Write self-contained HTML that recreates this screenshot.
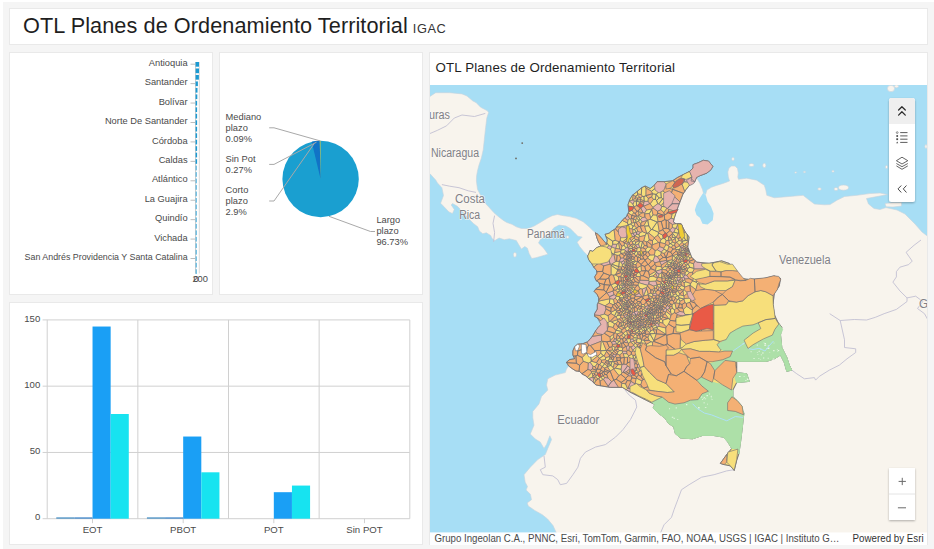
<!DOCTYPE html>
<html><head><meta charset="utf-8"><title>OTL Planes de Ordenamiento Territorial</title>
<style>
*{box-sizing:border-box;margin:0;padding:0}
html,body{width:934px;height:549px;overflow:hidden;background:#f5f5f5;font-family:"Liberation Sans",sans-serif;color:#323232}
body{position:relative}
.edge-l{position:absolute;left:0;top:0;width:3px;height:549px;background:#fff}
.edge-t{position:absolute;left:0;top:0;width:934px;height:2px;background:#fff}
.panel{position:absolute;background:#fff;border:1px solid #e9e9e9}
#hdr{left:9px;top:8px;width:919px;height:37px}
#hdr .t{position:absolute;left:13px;top:3.5px;font-size:21.7px;line-height:25px;color:#1f1f1f;white-space:nowrap;letter-spacing:0.07px}
#hdr .s{font-size:12.8px;color:#333;margin-left:5px;letter-spacing:0.55px}
#bar{left:9px;top:52px;width:204px;height:243px}
#pie{left:219px;top:52px;width:204px;height:243px}
#col{left:9px;top:301.5px;width:414px;height:243.5px}
#map{left:429px;top:52px;width:499px;height:493px}
#map .ttl{position:absolute;left:5.6px;top:7px;font-size:13.3px;line-height:16px;color:#1f1f1f;white-space:nowrap;letter-spacing:0.14px}
svg{position:absolute;left:-1px;top:-1px;overflow:hidden}
svg text{font-family:"Liberation Sans",sans-serif}
</style></head><body>
<div class="edge-t"></div><div class="edge-l"></div>
<div class="panel" id="hdr"><div class="t">OTL Planes de Ordenamiento Territorial<span class="s">IGAC</span></div></div>
<div class="panel" id="bar"><svg width="204" height="243" viewBox="9 52 204 243"><line x1="195.6" y1="62" x2="195.6" y2="273.5" stroke="#c9c9c9" stroke-width="1"/><line x1="199.3" y1="62" x2="199.3" y2="273.5" stroke="#d9d9d9" stroke-width="1"/><rect x="195.6" y="62.00" width="3.4" height="4.7" fill="#1b9ad2"/><rect x="195.6" y="68.48" width="3.4" height="4.7" fill="#1b9ad2"/><rect x="195.6" y="74.95" width="3.3" height="4.7" fill="#1b9ad2"/><rect x="195.6" y="81.43" width="2.3" height="4.7" fill="#1b9ad2"/><rect x="195.6" y="87.91" width="1.9" height="4.7" fill="#1b9ad2"/><rect x="195.6" y="94.39" width="1.7" height="4.7" fill="#1b9ad2"/><rect x="195.6" y="100.86" width="1.5" height="4.7" fill="#1b9ad2"/><rect x="195.6" y="107.34" width="1.5" height="4.7" fill="#1b9ad2"/><rect x="195.6" y="113.82" width="1.5" height="4.7" fill="#1b9ad2"/><rect x="195.6" y="120.29" width="1.5" height="4.7" fill="#1b9ad2"/><rect x="195.6" y="126.77" width="1.5" height="4.7" fill="#1b9ad2"/><rect x="195.6" y="133.25" width="1.5" height="4.7" fill="#1b9ad2"/><rect x="195.6" y="139.72" width="1.5" height="4.7" fill="#1b9ad2"/><rect x="195.6" y="146.20" width="1.5" height="4.7" fill="#1b9ad2"/><rect x="195.6" y="152.68" width="1.5" height="4.7" fill="#1b9ad2"/><rect x="195.6" y="159.16" width="1.5" height="4.7" fill="#1b9ad2"/><rect x="195.6" y="165.63" width="1.2" height="4.7" fill="#55b4de"/><rect x="195.6" y="172.11" width="1.2" height="4.7" fill="#55b4de"/><rect x="195.6" y="178.59" width="1.2" height="4.7" fill="#55b4de"/><rect x="195.6" y="185.06" width="1.2" height="4.7" fill="#55b4de"/><rect x="195.6" y="191.54" width="1.2" height="4.7" fill="#55b4de"/><rect x="195.6" y="198.02" width="1.2" height="4.7" fill="#55b4de"/><rect x="195.6" y="204.49" width="1.2" height="4.7" fill="#55b4de"/><rect x="195.6" y="210.97" width="1.2" height="4.7" fill="#55b4de"/><rect x="195.6" y="217.45" width="1.2" height="4.7" fill="#55b4de"/><rect x="195.6" y="223.93" width="1.2" height="4.7" fill="#55b4de"/><rect x="195.6" y="230.40" width="1.2" height="4.7" fill="#55b4de"/><rect x="195.6" y="236.88" width="1.2" height="4.7" fill="#55b4de"/><rect x="195.6" y="243.36" width="1.2" height="4.7" fill="#55b4de"/><rect x="195.6" y="249.83" width="1.2" height="4.7" fill="#55b4de"/><rect x="195.6" y="256.31" width="1.2" height="4.7" fill="#55b4de"/><rect x="195.6" y="262.79" width="1.2" height="4.7" fill="#55b4de"/><rect x="195.6" y="269.26" width="1.2" height="4.7" fill="#55b4de"/><line x1="190.5" y1="64.20" x2="195" y2="64.20" stroke="#bdbdbd" stroke-width="1"/><text x="187.6" y="65.90" font-size="9.3" text-anchor="end" fill="#4a4a4a">Antioquia</text><line x1="190.5" y1="83.63" x2="195" y2="83.63" stroke="#bdbdbd" stroke-width="1"/><text x="187.6" y="85.33" font-size="9.3" text-anchor="end" fill="#4a4a4a">Santander</text><line x1="190.5" y1="103.06" x2="195" y2="103.06" stroke="#bdbdbd" stroke-width="1"/><text x="187.6" y="104.76" font-size="9.3" text-anchor="end" fill="#4a4a4a">Bolívar</text><line x1="190.5" y1="122.49" x2="195" y2="122.49" stroke="#bdbdbd" stroke-width="1"/><text x="187.6" y="124.19" font-size="9.3" text-anchor="end" fill="#4a4a4a">Norte De Santander</text><line x1="190.5" y1="141.92" x2="195" y2="141.92" stroke="#bdbdbd" stroke-width="1"/><text x="187.6" y="143.62" font-size="9.3" text-anchor="end" fill="#4a4a4a">Córdoba</text><line x1="190.5" y1="161.36" x2="195" y2="161.36" stroke="#bdbdbd" stroke-width="1"/><text x="187.6" y="163.06" font-size="9.3" text-anchor="end" fill="#4a4a4a">Caldas</text><line x1="190.5" y1="180.79" x2="195" y2="180.79" stroke="#bdbdbd" stroke-width="1"/><text x="187.6" y="182.49" font-size="9.3" text-anchor="end" fill="#4a4a4a">Atlántico</text><line x1="190.5" y1="200.22" x2="195" y2="200.22" stroke="#bdbdbd" stroke-width="1"/><text x="187.6" y="201.92" font-size="9.3" text-anchor="end" fill="#4a4a4a">La Guajira</text><line x1="190.5" y1="219.65" x2="195" y2="219.65" stroke="#bdbdbd" stroke-width="1"/><text x="187.6" y="221.35" font-size="9.3" text-anchor="end" fill="#4a4a4a">Quindío</text><line x1="190.5" y1="239.08" x2="195" y2="239.08" stroke="#bdbdbd" stroke-width="1"/><text x="187.6" y="240.78" font-size="9.3" text-anchor="end" fill="#4a4a4a">Vichada</text><line x1="190.5" y1="258.51" x2="195" y2="258.51" stroke="#bdbdbd" stroke-width="1"/><text x="187.6" y="260.21" font-size="9.3" text-anchor="end" fill="#4a4a4a" textLength="163" lengthAdjust="spacingAndGlyphs">San Andrés Providencia Y Santa Catalina</text><text x="196" y="282" font-size="9.3" text-anchor="middle" fill="#4a4a4a">0</text><text x="200.2" y="282" font-size="9.3" text-anchor="middle" fill="#4a4a4a">200</text></svg></div>
<div class="panel" id="pie"><svg width="204" height="243" viewBox="219 52 204 243"><circle cx="320.6" cy="179" r="38.2" fill="#1a9fd0"/><path d="M320.6,179 L311.68,141.86 A38.2,38.2 0 0 1 319.73,140.81 Z" fill="#1173c6"/><path d="M320.6,179 L319.73,140.81 A38.2,38.2 0 0 1 320.60,140.80 Z" fill="#b9c25a"/><polyline points="269.2,127.8 274,127.8 320.2,140.9" stroke="#a9a9a9" stroke-width="1" fill="none"/><polyline points="269.2,164.4 274,164.4 316.5,142.2" stroke="#a9a9a9" stroke-width="1" fill="none"/><polyline points="269.2,201 274,201 314.2,143.6" stroke="#a9a9a9" stroke-width="1" fill="none"/><polyline points="329,216.3 370.5,231.5 375,231.5" stroke="#a9a9a9" stroke-width="1" fill="none"/><text x="225.6" y="120.0" font-size="9.3" fill="#4a4a4a">Mediano</text><text x="225.6" y="131.0" font-size="9.3" fill="#4a4a4a">plazo</text><text x="225.6" y="142.0" font-size="9.3" fill="#4a4a4a">0.09%</text><text x="225.6" y="161.8" font-size="9.3" fill="#4a4a4a">Sin Pot</text><text x="225.6" y="172.8" font-size="9.3" fill="#4a4a4a">0.27%</text><text x="225.6" y="193.0" font-size="9.3" fill="#4a4a4a">Corto</text><text x="225.6" y="204.0" font-size="9.3" fill="#4a4a4a">plazo</text><text x="225.6" y="215.0" font-size="9.3" fill="#4a4a4a">2.9%</text><text x="376.4" y="222.8" font-size="9.3" fill="#4a4a4a">Largo</text><text x="376.4" y="233.8" font-size="9.3" fill="#4a4a4a">plazo</text><text x="376.4" y="244.8" font-size="9.3" fill="#4a4a4a">96.73%</text></svg></div>
<div class="panel" id="col"><svg width="414" height="243" viewBox="9 301.5 414 243"><line x1="42.6" y1="518.20" x2="409.8" y2="518.20" stroke="#d0d0d0" stroke-width="1"/><text x="40.3" y="519.80" font-size="9.6" text-anchor="end" fill="#4a4a4a">0</text><line x1="42.6" y1="451.94" x2="409.8" y2="451.94" stroke="#d0d0d0" stroke-width="1"/><text x="40.3" y="453.54" font-size="9.6" text-anchor="end" fill="#4a4a4a">50</text><line x1="42.6" y1="385.67" x2="409.8" y2="385.67" stroke="#d0d0d0" stroke-width="1"/><text x="40.3" y="387.27" font-size="9.6" text-anchor="end" fill="#4a4a4a">100</text><line x1="42.6" y1="319.41" x2="409.8" y2="319.41" stroke="#d0d0d0" stroke-width="1"/><text x="40.3" y="321.01" font-size="9.6" text-anchor="end" fill="#4a4a4a">150</text><line x1="47.20" y1="319.41" x2="47.20" y2="518.2" stroke="#d0d0d0" stroke-width="1"/><line x1="137.85" y1="319.41" x2="137.85" y2="518.2" stroke="#d0d0d0" stroke-width="1"/><line x1="228.50" y1="319.41" x2="228.50" y2="518.2" stroke="#d0d0d0" stroke-width="1"/><line x1="319.15" y1="319.41" x2="319.15" y2="518.2" stroke="#d0d0d0" stroke-width="1"/><line x1="409.80" y1="319.41" x2="409.80" y2="518.2" stroke="#d0d0d0" stroke-width="1"/><line x1="92.53" y1="518.2" x2="92.53" y2="522.7" stroke="#d0d0d0" stroke-width="1"/><text x="92.53" y="532.20" font-size="9.6" text-anchor="middle" fill="#4a4a4a">EOT</text><rect x="56.27" y="516.87" width="18.13" height="1.33" fill="#4a90c4"/><rect x="74.40" y="516.87" width="18.13" height="1.33" fill="#3f86c9"/><rect x="92.53" y="326.03" width="18.13" height="192.17" fill="#1a9ff5"/><rect x="110.66" y="413.50" width="18.13" height="104.70" fill="#17e3f0"/><line x1="183.18" y1="518.2" x2="183.18" y2="522.7" stroke="#d0d0d0" stroke-width="1"/><text x="183.18" y="532.20" font-size="9.6" text-anchor="middle" fill="#4a4a4a">PBOT</text><rect x="146.92" y="516.87" width="18.13" height="1.33" fill="#4a90c4"/><rect x="165.05" y="516.87" width="18.13" height="1.33" fill="#3f86c9"/><rect x="183.18" y="436.03" width="18.13" height="82.17" fill="#1a9ff5"/><rect x="201.31" y="471.81" width="18.13" height="46.39" fill="#17e3f0"/><line x1="273.82" y1="518.2" x2="273.82" y2="522.7" stroke="#d0d0d0" stroke-width="1"/><text x="273.82" y="532.20" font-size="9.6" text-anchor="middle" fill="#4a4a4a">POT</text><rect x="273.82" y="491.69" width="18.13" height="26.51" fill="#1a9ff5"/><rect x="291.95" y="485.07" width="18.13" height="33.13" fill="#17e3f0"/><line x1="364.48" y1="518.2" x2="364.48" y2="522.7" stroke="#d0d0d0" stroke-width="1"/><text x="364.48" y="532.20" font-size="9.6" text-anchor="middle" fill="#4a4a4a">Sin POT</text></svg></div>
<div class="panel" id="map"><div class="ttl">OTL Planes de Ordenamiento Territorial</div><svg width="497" height="460" viewBox="430 85 497 460" style="left:0px;top:32px"><rect x="430" y="85" width="497" height="460" fill="#a7def5"/><polygon points="428.0,97.0 430.0,96.4 435.7,92.7 449.7,92.7 462.0,93.9 467.0,96.0 472.9,101.0 476.0,102.5 480.6,107.2 487.4,110.8 488.6,112.5 486.8,118.0 485.3,130.4 484.0,142.6 483.2,150.0 481.3,158.3 479.0,165.0 477.5,170.7 476.6,176.0 476.4,181.0 477.5,189.3 480.0,194.0 482.2,198.6 485.0,203.0 488.8,207.0 494.0,212.8 498.3,216.5 503.4,220.4 506.8,222.5 512.0,224.3 516.3,226.8 521.4,228.5 528.2,228.5 534.2,226.0 540.2,222.5 547.1,218.3 552.2,215.7 557.4,214.5 563.4,215.7 569.4,216.6 576.2,218.3 583.1,221.7 589.1,226.8 593.3,231.0 595.5,232.8 602.0,246.0 597.0,249.0 593.0,252.0 590.0,251.0 588.2,256.0 583.9,251.7 579.6,246.5 577.1,242.2 579.6,239.7 582.2,237.1 577.9,236.3 574.5,232.8 570.2,228.5 565.9,226.0 559.1,225.1 553.9,227.7 551.4,231.1 545.4,236.3 540.2,239.7 538.5,243.1 543.7,248.2 547.9,254.2 541.9,256.0 536.0,257.7 531.7,258.5 529.1,253.4 527.4,248.2 524.8,246.5 521.4,249.1 518.8,244.8 516.3,240.5 509.4,238.8 504.3,239.7 499.1,238.0 494.8,240.5 492.3,238.8 490.6,235.4 486.3,232.8 482.8,233.7 479.4,231.1 477.7,226.8 473.4,223.4 468.0,218.0 462.0,211.0 457.4,206.3 452.5,203.5 451.2,205.0 454.3,209.4 452.5,213.5 449.0,212.0 445.0,207.8 440.6,203.2 442.2,199.0 443.5,195.5 441.9,187.7 437.5,183.0 435.7,180.0 430.0,173.8 428.0,172.0" fill="#f8f4ed" stroke="#c6d4de" stroke-width="0.6" stroke-linejoin="round"/><polygon points="595.5,232.8 598.2,234.6 601.9,238.7 605.0,242.3 606.4,244.6 607.3,240.0 605.0,234.3 609.1,233.2 611.9,230.9 615.5,228.7 617.3,225.9 620.1,223.2 622.8,219.6 626.3,216.8 628.8,211.7 628.0,204.8 629.7,199.7 632.2,195.4 636.5,192.0 641.7,187.7 645.1,186.0 650.2,188.5 654.5,185.1 657.1,181.7 663.9,181.7 672.5,180.8 677.6,177.4 682.8,174.8 689.6,171.4 693.1,168.0 693.1,164.6 698.2,162.8 703.3,160.3 708.5,161.1 712.8,166.3 711.0,169.7 706.8,173.1 699.9,175.7 696.5,177.4 696.5,177.4 699.9,183.4 702.5,189.4 703.3,192.8 705.6,194.5 706.9,190.0 711.4,187.3 716.5,185.4 722.9,183.5 729.6,181.0 728.3,177.0 727.8,172.0 729.0,168.0 731.5,166.0 735.0,166.0 737.5,168.5 738.3,173.0 737.8,177.0 738.5,179.3 746.7,178.2 756.7,180.2 764.3,185.3 765.8,190.0 766.8,195.3 774.3,197.8 789.3,196.5 803.1,195.3 809.4,200.3 814.4,204.0 824.4,204.8 830.0,204.6 836.9,200.3 844.5,196.5 857.0,195.3 869.5,193.6 880.0,193.0 887.5,194.6 866.5,198.5 868.5,204.0 874.0,208.5 880.0,209.5 886.0,207.6 897.0,210.0 905.0,214.0 915.0,224.0 922.0,232.0 930.0,238.0 930.0,548.0 564.0,548.0 556.2,532.5 553.0,525.5 547.6,519.0 542.3,514.7 534.7,510.4 528.3,506.1 527.2,502.9 531.5,499.7 530.4,494.3 526.1,490.0 527.5,486.5 525.2,482.2 524.0,474.7 530.3,467.2 537.8,459.6 545.3,454.6 547.8,448.4 551.6,439.6 549.8,435.8 546.5,444.6 544.0,448.4 540.3,442.1 535.3,439.0 530.3,434.0 534.0,425.2 532.8,417.7 532.8,411.4 539.0,403.9 541.5,396.4 547.8,390.1 546.5,385.1 547.8,378.8 555.3,375.1 565.3,372.6 566.5,369.0 568.7,366.0 566.4,362.3 569.6,359.6 574.6,358.7 572.8,355.0 572.8,350.9 574.6,346.8 577.8,344.1 582.8,343.7 587.3,341.9 590.1,339.2 592.8,335.5 595.5,331.0 598.3,327.3 601.0,324.6 600.1,320.9 597.3,317.8 594.6,316.4 594.6,313.7 597.3,309.1 597.3,304.6 598.7,301.4 598.7,297.8 596.9,294.2 594.1,291.4 596.0,288.7 600.1,286.0 598.7,282.3 596.0,280.5 594.6,276.9 596.9,273.2 596.4,270.0 594.1,267.8 591.4,263.2 588.7,259.6 587.7,256.0 589.1,253.3 590.0,250.5 592.8,251.4 596.4,247.8 601.0,246.0 598.7,242.3 597.0,238.0" fill="#f8f4ed" stroke="#c6d4de" stroke-width="0.6" stroke-linejoin="round"/><polygon points="703.3,192.8 705.9,195.4 707.6,201.4 711.0,206.5 713.6,213.4 712.8,220.2 707.6,224.5 702.5,223.7 699.9,217.7 696.5,215.1 694.8,210.0 696.5,204.8 699.9,198.0" fill="#a7def5"/><ellipse cx="733" cy="159" rx="1.3" ry="1.8" fill="#f8f4ed" stroke="#c6d4de" stroke-width="0.6" stroke-linejoin="round"/><ellipse cx="751.5" cy="165" rx="2.6" ry="1.5" fill="#f8f4ed" stroke="#c6d4de" stroke-width="0.6" stroke-linejoin="round"/><ellipse cx="764.3" cy="165.4" rx="1.6" ry="2.2" fill="#f8f4ed" stroke="#c6d4de" stroke-width="0.6" stroke-linejoin="round"/><ellipse cx="843.5" cy="187.6" rx="5" ry="2.6" fill="#f8f4ed" stroke="#c6d4de" stroke-width="0.6" stroke-linejoin="round"/><ellipse cx="836" cy="189" rx="2" ry="1.6" fill="#f8f4ed" stroke="#c6d4de" stroke-width="0.6" stroke-linejoin="round"/><ellipse cx="819.5" cy="189" rx="1.8" ry="1.2" fill="#f8f4ed" stroke="#c6d4de" stroke-width="0.6" stroke-linejoin="round"/><ellipse cx="891" cy="88.5" rx="3.6" ry="3.2" fill="#f8f4ed" stroke="#c6d4de" stroke-width="0.6" stroke-linejoin="round"/><ellipse cx="896.5" cy="86.3" rx="2" ry="1.5" fill="#f8f4ed" stroke="#c6d4de" stroke-width="0.6" stroke-linejoin="round"/><ellipse cx="514.9" cy="254.8" rx="1.6" ry="2.4" fill="#f8f4ed" stroke="#c6d4de" stroke-width="0.6" stroke-linejoin="round"/><ellipse cx="567.6" cy="237.1" rx="1.4" ry="1.4" fill="#f8f4ed" stroke="#c6d4de" stroke-width="0.6" stroke-linejoin="round"/><ellipse cx="795.7" cy="172.5" rx="1" ry="0.8" fill="#f8f4ed" stroke="#c6d4de" stroke-width="0.6" stroke-linejoin="round"/><ellipse cx="804.5" cy="172" rx="1.2" ry="0.8" fill="#f8f4ed" stroke="#c6d4de" stroke-width="0.6" stroke-linejoin="round"/><ellipse cx="833" cy="171.3" rx="1.2" ry="1" fill="#f8f4ed" stroke="#c6d4de" stroke-width="0.6" stroke-linejoin="round"/><ellipse cx="886.5" cy="167" rx="1.2" ry="1.6" fill="#f8f4ed" stroke="#c6d4de" stroke-width="0.6" stroke-linejoin="round"/><ellipse cx="926" cy="146.5" rx="1.2" ry="2" fill="#f8f4ed" stroke="#c6d4de" stroke-width="0.6" stroke-linejoin="round"/><polygon points="885.0,203.6 893.0,202.4 901.5,202.5 901.5,206.0 893.0,207.0 886.0,206.8" fill="#f8f4ed" stroke="#c6d4de" stroke-width="0.6" stroke-linejoin="round"/><circle cx="522.2" cy="143.1" r="0.9" fill="#6e6a62"/><circle cx="516" cy="158.4" r="0.9" fill="#6e6a62"/><polyline points="921.0,240.0 914.0,245.3 906.1,252.3 912.2,261.1 908.7,264.6 899.9,267.2 896.4,271.6 896.4,276.9 892.9,282.1 899.9,290.9 907.0,297.9 907.0,301.5 896.4,309.4 884.1,313.7 875.4,317.3 866.6,320.0 854.3,319.5 840.2,320.5 829.7,313.7" fill="none" stroke="#c2bfd2" stroke-width="0.9" stroke-linejoin="round"/><polyline points="907.0,297.9 915.7,296.2 922.8,301.5 917.5,308.5 924.5,313.7 928.0,320.0" fill="none" stroke="#c2bfd2" stroke-width="0.9" stroke-linejoin="round"/><polyline points="840.2,320.5 844.5,339.8 844.5,347.5 855.7,348.8 855.7,352.5 847.0,358.8 839.4,365.1 829.4,370.1 819.4,376.3 815.6,380.1 814.4,377.6 804.4,378.8 796.8,373.8 791.8,370.1" fill="none" stroke="#c2bfd2" stroke-width="0.9" stroke-linejoin="round"/><polyline points="734.2,469.7 726.7,470.9 714.1,474.7 701.6,477.2 689.1,484.7 681.5,489.7 677.8,499.7 674.0,509.8 671.5,517.3 664.0,524.8 660.5,533.0" fill="none" stroke="#c2bfd2" stroke-width="0.9" stroke-linejoin="round"/><polyline points="544.0,455.9 545.3,467.2 540.3,469.7 542.8,474.7 552.8,475.9 557.8,479.7 560.3,484.7 566.6,483.4 572.9,474.7 577.9,467.2 580.4,458.4 585.4,452.1 595.4,447.1 605.4,444.6 615.5,437.1 623.0,429.6 630.5,419.5 634.3,412.0 636.8,407.0 635.5,400.2 629.2,395.1 625.0,390.0" fill="none" stroke="#c2bfd2" stroke-width="0.9" stroke-linejoin="round"/><polyline points="441.9,184.6 449.7,186.2 459.0,187.7 468.2,190.8 476.0,192.4" fill="none" stroke="#c2bfd2" stroke-width="0.9" stroke-linejoin="round"/><polyline points="430.0,133.5 437.3,130.4 446.6,125.8 454.3,118.0 462.0,115.0 474.4,116.5 485.3,113.4" fill="none" stroke="#c2bfd2" stroke-width="0.9" stroke-linejoin="round"/><polyline points="494.6,215.6 493.0,223.3 494.6,232.6 493.6,241.9" fill="none" stroke="#c2bfd2" stroke-width="0.9" stroke-linejoin="round"/><polygon points="595.5,232.8 598.2,234.6 601.9,238.7 605.0,242.3 606.4,244.6 607.3,240.0 605.0,234.3 609.1,233.2 611.9,230.9 615.5,228.7 617.3,225.9 620.1,223.2 622.8,219.6 626.3,216.8 628.8,211.7 628.0,204.8 629.7,199.7 632.2,195.4 636.5,192.0 641.7,187.7 645.1,186.0 650.2,188.5 654.5,185.1 657.1,181.7 663.9,181.7 672.5,180.8 677.6,177.4 682.8,174.8 689.6,171.4 693.1,168.0 693.1,164.6 698.2,162.8 703.3,160.3 708.5,161.1 712.8,166.3 711.0,169.7 706.8,173.1 699.9,175.7 696.5,177.4 694.8,181.7 689.6,185.1 686.2,189.4 682.8,194.5 680.2,201.4 677.6,208.2 675.9,213.4 674.2,218.5 673.4,221.9 675.9,223.7 681.1,223.7 683.6,228.8 685.3,232.0 689.1,237.0 687.8,247.1 691.6,257.1 696.6,262.1 709.1,263.4 721.6,260.8 729.2,263.4 735.4,270.9 741.7,278.4 749.2,279.6 764.3,278.4 774.3,275.9 780.5,278.4 779.3,285.9 774.3,293.4 773.0,304.7 774.3,314.7 778.0,322.3 781.8,327.3 780.5,334.8 781.8,347.5 786.8,357.5 789.3,365.1 791.8,370.1 786.8,371.3 784.3,362.6 780.5,355.0 774.3,358.8 766.8,361.3 736.7,361.3 736.7,372.6 746.7,373.8 749.2,381.4 736.7,382.6 732.9,390.1 732.9,396.4 739.2,403.9 743.9,413.1 742.2,428.5 740.5,442.2 738.8,454.0 736.7,460.3 734.2,470.5 730.4,465.9 724.2,464.6 720.4,463.4 726.7,454.6 731.7,448.4 727.9,442.1 723.3,437.1 713.1,435.4 702.8,435.4 692.5,438.8 680.5,437.9 675.4,433.7 673.7,426.8 668.5,423.4 665.1,418.2 658.2,413.1 653.1,408.0 654.8,404.5 649.7,402.0 639.4,396.8 630.8,392.5 622.3,387.4 610.3,387.4 600.0,385.7 596.0,385.0 594.2,383.3 591.4,380.5 588.7,378.7 586.0,376.0 582.3,374.2 579.6,371.4 575.9,371.0 572.3,368.7 568.7,366.0 566.4,362.3 569.6,359.6 574.6,358.7 572.8,355.0 572.8,350.9 574.6,346.8 577.8,344.1 582.8,343.7 587.3,341.9 590.1,339.2 592.8,335.5 595.5,331.0 598.3,327.3 601.0,324.6 600.1,320.9 597.3,317.8 594.6,316.4 594.6,313.7 597.3,309.1 597.3,304.6 598.7,301.4 598.7,297.8 596.9,294.2 594.1,291.4 596.0,288.7 600.1,286.0 598.7,282.3 596.0,280.5 594.6,276.9 596.9,273.2 596.4,270.0 594.1,267.8 591.4,263.2 588.7,259.6 587.7,256.0 589.1,253.3 590.0,250.5 592.8,251.4 596.4,247.8 601.0,246.0 598.7,242.3 597.0,238.0" fill="#f4b074"/><path d="M655.8,280.9L649.2,281.5L648.7,283.9L653.7,286.1L656.9,285.1L657.1,284.5ZM637.5,247.9L639.8,247.7L638.6,243.8L635.5,245.0ZM682.8,281.0L684.7,279.8L685.0,279.1L683.5,276.8L681.5,277.6ZM638.6,367.8L640.1,366.5L640.0,363.9L637.4,364.4L637.4,367.4ZM624.9,295.9L625.5,295.9L626.6,294.9L625.3,293.1ZM644.7,313.0L644.9,312.4L642.4,311.2L642.8,314.2L643.5,314.0ZM622.5,351.0L622.4,352.8L623.2,353.7L627.1,353.9L626.7,351.2ZM681.9,250.8L681.9,250.8L683.8,250.1L683.6,248.9L682.7,247.8L681.4,247.7ZM662.0,272.6L662.0,272.6L662.1,272.1L662.1,269.1L662.1,269.1L655.8,271.1L655.8,271.2L656.1,272.2L659.1,274.2ZM625.2,317.7L625.4,317.7L627.3,315.5L627.4,315.3L627.3,315.0L625.8,314.4L624.2,316.3L624.4,317.4ZM633.0,204.4L634.5,200.9L633.4,200.1L632.6,200.0L629.3,200.9L629.3,201.0ZM634.3,312.2L632.9,312.3L632.5,312.5L632.0,313.5L633.7,315.4L635.8,315.0ZM628.5,373.3L627.9,374.8L628.2,375.9L631.5,376.2L632.1,374.9L628.8,373.2ZM603.6,379.6L608.1,386.3L611.6,381.5L607.9,377.9L604.4,377.4ZM635.2,383.8L630.9,381.3L627.8,388.3L632.4,388.3ZM630.6,334.3L630.6,330.9L628.5,330.6ZM656.1,296.0L657.2,295.1L655.8,292.8L652.6,294.0L652.5,294.1L652.8,295.3ZM659.7,261.6L659.7,259.9L657.4,256.6L654.8,255.7L653.0,260.7L654.9,262.9ZM680.4,255.4L681.1,256.6L681.9,256.3L682.0,255.8L681.2,254.1ZM681.4,247.7L682.7,247.8L683.4,247.0L683.4,245.0L680.0,246.6L680.5,247.3ZM677.0,210.1L677.6,208.2L679.3,203.7L672.5,203.7L667.6,208.4L668.6,209.6L675.2,211.1ZM646.6,288.5L646.6,287.3L642.1,289.0L643.2,296.3L643.7,296.0ZM628.2,300.2L628.7,299.9L628.8,299.8L627.5,298.1L626.2,298.4L625.1,299.5L625.4,300.3L626.2,300.5ZM642.1,316.6L643.9,318.6L645.6,316.7L644.5,315.7L642.2,316.5ZM644.9,307.9L646.7,309.0L647.5,309.0L647.7,308.7L648.7,305.4L648.4,305.2L645.1,306.8L644.8,307.4ZM629.6,237.6L634.4,236.4L634.7,235.9L632.9,233.3L632.8,233.2L630.5,233.8L629.3,237.3ZM661.4,265.1L666.9,261.6L667.0,261.2L667.0,260.9L666.7,260.3L659.7,261.6ZM667.3,309.6L669.4,308.7L669.5,307.1L668.8,306.1L667.4,305.6L666.8,306.1L665.5,307.9L665.6,308.0L666.8,309.7ZM627.1,350.8L628.9,350.6L629.6,346.6L628.2,345.5L626.2,346.4ZM678.4,230.3L682.1,225.7L681.1,223.7L678.1,223.7L676.0,228.1ZM648.1,201.2L644.4,201.3L643.9,202.1L643.3,205.5L643.4,206.0L643.9,206.2L649.9,203.7ZM669.4,288.4L669.8,289.0L670.5,289.3L672.2,289.0L670.8,287.2L670.3,287.4L669.5,288.2ZM648.8,280.5L639.9,280.1L639.1,281.4L638.6,282.7L647.7,285.4L648.7,283.9L649.2,281.5ZM614.6,338.5L613.3,341.4L615.6,341.5L616.5,340.3L616.5,339.5L616.2,339.1ZM634.3,318.5L635.5,317.7L635.4,316.3L633.2,317.4L633.3,318.3ZM592.4,368.9L593.0,366.3L590.3,362.2L588.2,363.0L587.8,369.5L590.4,370.3ZM624.5,259.1L623.5,257.8L620.6,258.1L619.3,261.3L619.4,261.4L620.9,262.2L623.8,260.8ZM607.0,293.0L609.5,296.7L614.2,294.6L613.0,291.0ZM629.3,293.8L631.6,293.9L631.7,292.4L630.2,292.1ZM599.7,315.5L604.4,314.1L606.0,308.9L605.4,306.3L605.2,305.8L598.1,302.7L597.3,304.6L597.3,309.1L594.6,313.7L594.6,315.1ZM669.9,230.7L672.5,232.7L674.0,232.2L675.6,228.3L672.3,227.5L669.8,229.9ZM593.2,377.3L592.8,377.1L588.4,378.4L588.7,378.7L591.4,380.5L594.0,383.1ZM630.1,254.6L629.9,256.0L630.5,256.7L631.7,256.6L632.0,256.4L631.9,254.7L630.1,254.6ZM639.2,293.2L634.9,295.4L635.1,296.3L641.9,296.8L642.3,296.7ZM628.8,242.3L626.4,243.7L627.4,245.7L629.3,243.2L629.3,242.4ZM676.4,283.4L677.3,284.3L677.4,284.3L678.9,282.4L678.3,280.4L677.1,280.3L676.1,281.2L676.4,283.4ZM613.3,353.9L612.7,355.6L613.7,356.9L614.1,357.2L615.6,356.6L616.3,354.9ZM613.9,380.2L613.8,380.2L611.6,381.5L608.1,386.3L607.8,387.0L610.3,387.4L618.6,387.4ZM635.6,392.5L632.4,388.3L627.8,388.3L627.5,388.4L626.3,389.8L630.8,392.5L635.5,394.8ZM684.7,177.6L684.2,181.9L688.2,182.3L692.9,178.3L688.3,176.2ZM688.9,252.1L688.3,253.8L689.2,254.5L690.6,254.4L689.6,251.9ZM676.0,223.7L675.9,223.7L673.4,221.9L674.1,219.0L671.1,218.2L667.7,220.3L669.0,222.2L672.4,224.5ZM652.8,207.3L652.8,208.0L657.5,211.3L660.8,209.8L661.8,206.4L661.2,205.5L658.8,203.9L657.7,203.7ZM633.8,345.4L630.8,346.9L632.7,350.4L635.6,347.5ZM652.0,312.3L652.5,310.8L652.1,310.1L650.5,311.1L650.5,311.3L651.2,312.6ZM657.6,277.8L658.6,277.4L659.1,274.2L656.1,272.2L655.7,273.7ZM611.5,246.3L608.7,245.4L604.7,251.2L610.0,250.7L611.8,247.0ZM633.8,340.6L632.9,338.8L630.5,339.1L630.2,342.2L630.7,342.3L633.7,341.1ZM640.4,325.4L641.4,325.4L642.4,323.8L641.0,322.9L640.3,323.3L640.1,325.3ZM646.7,220.6L647.6,220.0L644.9,217.0L642.6,217.5L640.4,219.5L642.0,222.0ZM627.9,220.3L629.6,218.8L627.3,214.7L626.3,216.8L624.7,218.1ZM665.4,200.7L667.0,202.0L670.2,202.5L669.0,194.4L668.0,194.6L664.7,199.1ZM664.4,302.5L666.7,303.3L666.8,303.3L666.9,302.9L665.6,301.2L664.8,301.6ZM627.7,225.3L619.6,227.0L627.6,231.0L629.0,228.5ZM629.7,290.7L630.2,292.1L631.7,292.4L632.9,291.5L630.5,290.0L630.0,290.2ZM616.1,295.9L614.2,294.6L609.5,296.7L609.7,298.7L609.8,298.8L613.6,299.4L615.3,298.2L616.3,296.2ZM603.7,265.9L610.2,264.2L608.5,258.3L606.1,256.7L598.8,260.3L598.9,263.0ZM655.5,325.0L657.2,327.1L659.0,326.3L659.0,324.1L656.4,323.2L656.0,323.3L655.4,324.2ZM611.8,264.2L615.5,261.7L613.9,254.2L613.8,254.1L613.1,254.2L608.5,258.3L610.2,264.2L610.8,264.5ZM601.4,335.0L592.3,336.3L590.1,339.2L587.3,341.9L586.8,342.1L588.7,345.1L590.4,345.5L601.1,341.3L601.7,340.8ZM677.5,263.7L676.7,264.0L676.1,265.9L676.3,266.4L678.0,266.2ZM693.5,263.8L693.8,268.4L694.3,269.0L708.2,269.0L709.3,263.4L709.1,263.4L696.6,262.1L695.1,260.6ZM625.9,254.8L625.9,255.0L626.9,255.4L627.7,254.7L628.1,253.4L628.0,252.8L626.8,252.4ZM640.7,207.9L643.0,212.6L644.5,213.3L646.7,209.9L643.9,206.2L643.4,206.0ZM632.9,233.3L634.7,235.9L634.9,235.9L636.7,234.4L636.6,232.1L636.1,232.0ZM624.9,261.9L623.8,260.8L620.9,262.2L622.3,264.5L623.7,264.0ZM657.5,306.5L658.6,305.6L658.2,304.8L657.5,304.9L656.7,305.3ZM679.3,280.1L680.1,279.1L680.6,277.6L680.4,277.4L677.4,277.4L676.9,277.8L677.1,280.3L678.3,280.4ZM663.7,248.1L659.6,246.5L657.2,249.8L661.2,252.2L664.1,249.2ZM598.8,260.3L606.1,256.7L604.4,251.3L601.3,249.9L598.3,259.5ZM688.3,176.2L692.9,178.3L696.2,178.1L696.5,177.4L699.8,175.7L694.9,171.6L690.9,170.2L689.6,171.4L689.0,171.7ZM672.5,203.7L670.2,202.5L667.0,202.0L665.2,206.8L666.9,208.3L667.6,208.4ZM624.1,342.2L628.2,343.0L626.3,339.2L626.2,339.2ZM630.9,326.3L629.3,327.5L629.6,328.3L630.4,328.5L631.7,327.1ZM666.1,311.5L666.8,309.7L665.6,308.0L663.0,310.0L663.7,311.6L665.6,312.0ZM601.3,249.9L598.4,247.0L596.4,247.8L592.8,251.4L592.2,251.2L595.3,257.6L598.3,259.5ZM621.0,369.3L621.9,372.8L622.8,372.5L627.6,365.9L626.4,364.4L623.8,364.1L622.1,364.4L621.9,364.6ZM630.5,233.8L627.5,231.6L624.0,235.0L627.0,237.4L629.3,237.3ZM678.4,267.2L676.4,268.4L677.2,269.9L679.1,269.2L679.1,269.0ZM683.1,316.1L684.3,315.6L685.2,314.6L683.7,312.0L679.8,311.4L676.0,313.4L677.1,314.8ZM671.2,193.6L669.0,194.4L670.2,202.5L672.5,203.7L679.3,203.7L680.0,201.9ZM622.9,285.0L621.7,285.5L622.4,287.7L625.0,287.2L625.0,287.1ZM626.4,251.4L628.4,251.1L628.3,248.0L628.0,247.6L627.4,247.4L625.9,247.8L624.3,249.6L625.1,250.7ZM681.3,273.6L683.6,276.6L685.3,274.8L685.0,274.0ZM637.1,314.9L638.5,311.9L637.3,310.7L634.6,311.8L634.3,312.2L635.8,315.0L635.9,315.2ZM666.9,293.6L665.3,293.4L665.8,295.1L667.2,295.5L667.7,295.4L667.7,295.4L667.8,295.1ZM613.3,341.4L611.4,342.0L612.4,344.6L616.7,343.9L615.6,341.5ZM644.0,324.1L643.3,323.5L642.4,323.8L641.4,325.4L641.4,325.4L643.2,325.9ZM629.4,290.8L627.1,290.4L626.1,291.9L626.1,291.9L627.7,292.6ZM636.7,234.4L639.0,234.4L640.6,232.2L637.8,231.4L636.6,232.1ZM627.6,365.9L622.8,372.5L624.0,372.5L626.3,371.8L630.6,368.3L630.6,368.0ZM658.2,290.2L660.3,291.3L661.3,288.0L660.5,286.7L659.0,287.4ZM617.0,244.2L612.7,244.1L611.5,246.3L611.8,247.0L615.4,248.6L615.8,248.4ZM683.6,276.6L683.5,276.8L685.0,279.1L689.2,278.6L686.8,275.2L685.3,274.8Z" fill="#e6b3ae" stroke="#696c72" stroke-width="0.62" stroke-linejoin="round"/><path d="M670.4,309.0L670.7,312.6L671.7,314.5L674.5,312.7L674.7,309.8L672.5,308.5ZM684.1,269.4L682.2,269.5L682.1,271.8L684.2,271.9ZM655.4,270.5L655.8,271.1L662.1,269.1L662.1,268.2L661.3,266.7L656.2,266.2ZM633.6,337.7L637.5,338.1L637.0,335.9L635.7,334.0L635.6,334.0L633.3,336.4ZM650.2,317.6L651.2,317.4L651.0,316.7L650.1,315.8L649.1,316.4ZM680.7,259.9L681.3,258.5L681.3,258.5L680.4,257.6L680.2,257.6L679.1,259.0ZM636.1,256.0L637.8,253.8L637.9,252.1L636.5,251.3L635.9,251.4L634.2,253.9L635.8,256.0ZM599.5,377.6L598.9,378.8L600.0,381.1L602.9,379.5L600.8,377.0ZM730.9,292.4L747.6,279.3L741.7,278.4L735.4,270.9L729.2,263.4L721.6,260.8L709.3,263.4L708.2,269.0L708.5,270.5ZM687.4,240.6L688.2,241.4L688.5,241.5L689.1,237.0L687.3,234.6ZM644.7,213.9L649.4,213.5L651.9,209.4L652.0,208.9L646.7,209.9L644.5,213.3ZM631.3,241.1L631.2,240.6L629.6,237.6L629.3,237.3L627.0,237.4L626.8,238.4L627.1,240.8L628.8,242.3L629.3,242.4ZM609.9,336.9L610.3,340.4L613.6,337.3L613.9,333.9ZM627.5,222.9L622.2,220.4L620.1,223.2L617.3,225.9L616.5,227.1L619.6,227.0L627.7,225.3L628.0,224.8ZM596.2,371.1L591.2,371.4L591.5,372.7L592.3,373.4L594.7,373.1L596.4,371.7ZM612.6,241.1L615.3,240.3L614.1,229.6L611.9,230.9L609.1,233.2L605.0,234.3L606.0,236.7ZM692.6,280.5L692.6,280.8L696.0,282.1L706.6,273.2L707.6,271.6L693.4,277.7ZM675.2,211.1L672.0,214.5L671.1,218.2L674.1,219.0L674.2,218.5L675.9,213.4L677.0,210.1ZM619.1,242.0L619.2,241.7L615.3,240.3L612.6,241.1L612.7,244.1L617.0,244.2L618.7,242.7ZM627.2,274.1L626.6,272.9L625.7,272.5L625.6,272.5L625.5,272.6L626.1,275.2L626.9,275.2ZM666.1,334.4L665.8,327.9L659.0,326.3L657.2,327.1L657.1,327.2L657.2,328.8ZM673.7,265.2L673.7,265.3L674.3,265.8L676.1,265.9L676.7,264.0L675.9,263.7L675.7,263.8ZM628.7,315.4L627.4,315.3L627.3,315.5L628.4,317.2L629.2,317.5L629.3,317.5L629.5,317.3L629.8,316.1ZM619.4,261.4L619.3,261.3L616.5,261.4L615.5,261.7L611.8,264.2L618.7,266.7ZM656.4,280.3L657.4,278.0L653.0,276.0L649.5,276.7L648.7,278.4L648.8,280.5L649.2,281.5L655.8,280.9ZM636.6,329.8L635.3,331.1L635.3,331.3L636.0,333.2L636.4,333.1L639.3,330.8L639.2,330.1L638.8,329.9L637.3,329.4ZM659.2,321.3L656.4,323.2L659.0,324.1L659.8,322.3ZM677.1,290.6L677.8,290.9L682.0,289.8L679.3,287.6L677.1,290.6ZM598.9,263.0L598.8,260.3L598.3,259.5L595.3,257.6L589.8,261.0L591.4,263.2L593.7,267.1ZM655.3,199.4L653.4,199.4L650.1,203.8L652.8,207.3L657.7,203.7L656.6,200.4ZM649.9,333.8L655.2,333.5L653.2,329.6L653.1,329.6L650.5,331.1L649.6,332.5ZM649.7,319.0L650.0,320.4L651.1,320.8L651.2,320.8L651.8,318.8L649.9,318.9ZM661.1,315.9L660.9,316.0L660.1,318.2L660.6,319.2L661.2,319.1L663.1,317.0L662.7,316.2ZM610.9,284.9L613.2,288.7L617.3,286.0L617.8,284.8L615.0,283.1ZM689.6,272.5L692.6,272.3L694.3,269.0L693.8,268.4L690.0,267.3L687.8,268.3L687.1,270.8L687.1,270.9ZM621.7,308.0L621.4,306.1L620.9,305.3L620.5,305.2L618.6,306.9L618.3,307.5L619.1,308.1L621.1,308.7L621.5,308.6ZM660.3,304.5L659.8,305.5L662.6,306.4L662.9,306.3ZM650.6,322.7L650.4,322.5L649.4,322.5L648.6,324.4L650.0,324.5ZM653.6,316.1L652.7,314.3L652.7,314.3L651.7,315.1L651.8,315.6L653.5,316.2ZM629.1,260.8L627.4,262.9L627.9,263.1L628.7,263.3L629.9,261.5L629.8,260.8ZM679.0,297.8L678.5,296.1L677.4,295.8L675.1,297.3L675.4,298.4L677.3,299.6L678.6,298.9ZM659.1,198.0L661.3,197.6L660.7,190.5L656.1,194.4ZM633.1,226.1L630.6,224.0L628.0,224.8L627.7,225.3L629.0,228.5L631.9,229.1ZM675.6,228.3L676.0,228.1L678.1,223.7L676.0,223.7L672.4,224.5L672.3,227.5ZM731.8,360.3L678.5,356.3L676.4,361.3L682.1,379.9L740.4,443.0L740.5,442.2L742.2,428.5L743.9,413.1L739.2,403.9L732.9,396.4L732.9,390.1L736.7,382.6L745.8,381.7L740.1,373.0L736.7,372.6L736.7,367.8ZM642.4,370.9L644.6,368.3L640.1,366.5L638.6,367.8L640.0,370.9ZM682.1,242.5L682.1,241.3L681.9,241.0L678.6,240.4L676.9,242.6L679.3,245.0ZM653.3,298.5L652.2,297.7L650.7,298.7L651.0,300.9L653.8,301.9L654.0,301.8L654.0,301.5ZM675.2,277.4L676.9,277.8L677.4,277.4L677.5,276.3L676.9,275.0L674.9,275.7L674.7,275.9L675.0,277.0ZM628.8,305.5L628.9,303.1L627.5,302.9L626.8,303.8ZM638.5,311.9L640.0,312.1L640.5,311.7L639.9,309.0L637.5,308.9L637.3,310.7ZM634.1,325.8L632.8,324.8L632.4,325.0L632.7,327.1L633.6,327.9ZM609.5,363.9L608.3,364.0L607.8,364.5L607.5,366.6L610.6,365.4ZM630.7,342.3L633.9,344.7L634.9,343.5L633.7,341.1ZM647.1,320.1L646.3,318.7L644.0,319.1L644.0,319.1L645.3,320.6L646.8,320.5ZM622.1,273.5L622.9,273.0L623.1,271.5L621.9,269.7L621.6,269.5L620.6,271.0L620.8,272.7ZM666.9,302.9L666.8,303.3L667.6,304.3L669.6,303.3L669.3,302.0L669.0,301.9L667.3,302.4ZM657.1,222.0L657.7,221.8L658.2,221.6L656.9,215.1L653.0,214.8L650.6,218.1L650.3,219.2ZM629.2,317.5L628.8,319.0L628.9,319.8L630.3,320.0L631.3,319.3L629.3,317.5ZM625.4,300.3L624.5,301.7L624.6,302.5L627.0,302.5L626.2,300.5ZM655.7,273.7L656.1,272.2L655.8,271.2L649.4,275.0L649.5,276.7L653.0,276.0ZM645.1,235.5L643.7,240.8L646.7,241.9L647.7,241.7L649.3,239.8L647.9,233.1L646.6,233.2L646.4,233.3ZM653.7,290.9L652.6,294.0L655.8,292.8L656.0,291.4L654.7,290.8ZM687.7,246.5L685.5,245.4L684.7,246.9L685.8,248.0ZM671.7,270.7L670.1,269.7L667.9,271.5L669.3,272.8L671.6,272.7ZM660.2,184.2L659.9,181.7L657.1,181.7L654.5,185.1L650.2,188.5L645.1,186.0L644.8,186.2L646.1,188.2L651.5,191.3ZM637.0,248.5L636.5,251.3L637.9,252.1L640.1,251.3L640.9,250.6L640.9,248.3L640.8,248.2L639.8,247.7L637.5,247.9ZM668.1,266.5L668.1,264.8L667.2,263.4L664.7,266.6L667.9,266.9ZM597.3,374.7L596.4,375.4L595.5,377.0L598.1,378.9L598.9,378.8L599.5,377.6ZM668.6,209.6L668.5,212.6L672.0,214.5L675.2,211.1ZM653.5,318.0L653.6,318.0L655.7,318.4L656.2,317.9L656.6,315.6L655.3,314.9L654.7,315.1L653.6,316.1L653.5,316.2ZM628.4,293.6L629.2,293.8L629.3,293.8L630.2,292.1L629.7,290.7L629.4,290.8L627.7,292.6ZM686.9,256.9L685.8,256.0L684.9,257.3L685.5,259.8L686.8,259.7ZM624.0,308.0L623.9,307.7L621.7,308.0L621.5,308.6L622.5,309.6ZM657.2,307.4L657.5,306.5L656.7,305.3L656.6,305.3L656.1,305.8L656.6,307.4ZM687.0,253.2L687.5,253.7L688.3,253.8L688.9,252.1L688.0,250.7L687.7,250.7L687.1,251.2ZM618.3,312.8L616.6,311.6L614.6,315.8L614.9,316.5L615.8,316.9L618.0,315.2ZM731.0,315.6L726.4,332.5L726.2,347.8L731.8,360.3L736.7,367.8L736.7,361.3L766.8,361.3L774.3,358.8L780.5,355.0L784.3,362.6L786.8,371.3L791.8,370.1L789.3,365.1L786.8,357.5L781.8,347.5L780.5,334.8L781.8,327.3L778.0,322.3L775.1,316.3ZM745.8,381.7L749.2,381.4L746.7,373.8L740.1,373.0ZM691.9,257.4L691.6,257.1L690.6,254.4L689.2,254.5L688.3,256.6L690.0,258.1ZM641.1,255.5L640.7,255.3L640.2,255.2L637.2,257.0L637.6,257.6L640.1,257.5ZM618.6,364.6L618.0,364.8L615.2,368.1L621.0,369.3L621.9,364.6ZM633.0,264.7L636.0,264.5L637.6,261.8L635.5,261.1L632.9,264.0ZM667.3,276.8L667.1,278.7L667.8,279.4L668.4,278.9L668.8,277.6ZM627.2,275.4L629.1,274.3L629.1,273.9L628.6,273.1L627.2,274.1L626.9,275.2ZM664.1,296.0L664.9,297.1L665.5,295.3L664.4,295.3ZM668.1,264.8L670.0,265.0L670.9,262.9L667.0,261.2L666.9,261.6L667.2,263.4ZM656.1,305.8L654.0,305.9L653.8,306.1L653.8,306.2L654.9,307.7L656.1,307.6L656.6,307.4ZM681.9,250.8L681.4,252.5L681.7,252.8L681.8,252.8L684.0,252.6L684.3,250.6L684.2,250.5L683.8,250.1ZM628.6,284.8L628.8,284.9L630.0,282.5L630.0,282.4L629.4,281.4L628.3,281.6L627.8,284.0L628.1,284.5ZM648.1,295.4L652.2,296.8L652.8,295.3L652.5,294.1L650.8,293.1L648.3,294.1L647.7,295.0ZM620.9,262.2L619.4,261.4L618.7,266.7L618.7,266.8L621.6,267.1L622.3,266.4L622.3,264.5ZM615.2,347.2L612.4,346.0L611.7,346.8L612.7,349.9L613.7,350.9L614.6,350.1ZM617.5,269.7L617.6,269.6L618.7,266.8L618.7,266.7L611.8,264.2L610.8,264.5L611.0,265.2ZM652.0,326.5L653.2,328.5L657.1,327.2L657.2,327.1L655.5,325.0ZM649.6,333.9L647.9,337.2L648.9,340.3L650.9,341.7L652.8,342.1L653.7,341.4L653.9,340.8L649.9,333.8ZM636.3,201.2L636.6,205.7L637.1,205.8L640.0,202.7L640.0,202.2L636.5,201.1ZM649.1,316.4L650.1,315.8L650.2,314.9L648.2,314.7L647.2,315.2L647.2,315.2L647.2,316.1L647.5,316.5ZM681.3,267.4L682.0,265.7L679.8,266.8L680.1,267.4ZM649.9,333.8L653.9,340.8L654.0,340.6L656.3,333.9L655.2,333.5L649.9,333.8ZM635.6,347.5L632.7,350.4L632.7,350.9L636.2,351.8L637.4,350.2L636.5,347.7ZM624.3,276.4L622.1,273.5L620.5,276.7L621.0,277.0L623.1,277.5L624.1,276.9ZM639.4,350.4L637.4,350.2L636.2,351.8L636.6,353.1L638.7,354.1L641.6,351.8ZM666.2,240.7L664.7,238.4L663.2,238.2L660.9,239.6L659.8,242.5L665.2,243.8ZM632.8,265.1L633.0,264.7L632.9,264.0L632.6,263.5L631.2,262.8L630.8,262.9L630.0,264.0L630.2,264.6L630.8,264.9ZM627.1,353.9L623.2,353.7L624.2,357.4L624.4,357.5L627.6,357.3L628.6,356.6L628.8,356.0ZM632.9,291.5L633.3,291.5L633.9,290.3L631.7,288.5L631.6,288.5L630.5,290.0ZM631.2,308.1L630.6,310.7L630.8,311.5L631.1,311.8L632.5,312.5L632.9,312.3L631.9,308.2ZM628.4,277.5L627.5,276.5L626.9,277.3L627.5,279.1L627.9,279.1ZM633.1,226.1L631.9,229.1L632.7,229.8L634.5,229.3L636.6,227.9L636.7,227.8L634.3,225.8ZM616.4,311.1L615.8,310.1L615.4,310.0L611.0,312.2L610.8,313.5L614.6,315.8L616.6,311.6ZM646.4,328.2L645.8,327.6L643.5,327.4L643.4,327.5L644.8,330.3L645.0,330.4L645.9,330.4L646.5,330.2L646.5,330.0ZM623.1,284.9L623.1,283.7L621.8,282.7L620.7,285.0L621.7,285.5L622.9,285.0ZM664.7,266.6L662.1,268.2L662.1,269.1L662.1,269.1L665.7,270.0L668.0,267.3L667.9,266.9ZM640.9,223.6L642.0,222.0L640.4,219.5L640.2,219.5L638.8,220.3L638.4,221.3ZM675.1,238.8L675.4,237.8L672.4,237.3L671.3,238.4L671.4,239.8L672.0,240.4ZM666.9,275.7L665.3,277.4L665.0,278.0L665.4,278.5L667.1,278.7L667.3,276.8ZM640.8,248.2L640.9,248.3L643.0,247.9L644.4,245.3L642.7,241.5L642.6,241.5ZM627.5,309.4L625.6,310.9L625.7,312.2L628.0,312.5L628.2,311.3L628.0,309.7L627.8,309.3ZM634.0,222.5L631.6,223.1L630.6,224.0L633.1,226.1L634.3,225.8L634.8,222.8ZM676.9,258.8L678.5,259.3L679.1,259.0L680.2,257.6L678.7,256.5L676.9,258.7ZM623.0,311.0L622.7,311.1L621.9,311.8L622.1,312.3L623.9,313.8L625.0,313.5L625.3,312.7ZM600.7,353.2L603.5,355.7L604.3,355.7L606.5,351.4L606.5,350.6L606.4,350.5L600.8,350.7ZM675.9,237.4L676.3,237.3L678.4,233.3L674.0,232.2L672.5,232.7L672.5,233.2ZM614.1,304.2L614.5,303.7L613.6,299.4L609.8,298.8L609.4,303.1L613.0,304.7ZM658.9,300.3L660.7,299.3L660.7,299.1L659.1,297.8L658.5,298.2L658.1,300.0ZM637.0,328.0L637.9,326.9L636.6,325.5L635.6,327.2ZM611.9,359.2L609.5,358.8L608.1,360.9L609.8,361.6L612.0,361.7L613.1,361.2L613.0,360.0ZM678.7,256.5L678.1,254.9L678.0,254.8L675.9,257.8L675.9,257.8L676.9,258.7ZM654.6,313.1L654.7,311.7L654.7,311.7L653.8,311.6L653.1,312.8L653.8,313.5ZM619.3,291.1L619.4,289.9L618.8,289.2L617.5,288.9L615.6,290.2L617.5,292.1ZM595.3,257.6L592.2,251.2L590.0,250.5L589.1,253.3L587.7,256.0L588.7,259.6L589.8,261.0ZM622.3,350.7L619.1,350.6L617.8,352.0L617.0,354.1L617.0,354.1L619.7,355.0L622.4,352.8L622.5,351.0ZM646.1,188.2L644.8,186.2L641.7,187.7L641.7,187.7L641.3,194.6L642.2,196.4L643.9,196.5L645.9,195.8L646.0,195.6ZM648.6,324.4L646.5,323.9L646.0,324.5L647.6,326.7L648.9,326.8ZM601.1,341.3L600.4,350.4L600.8,350.7L606.4,350.5L602.6,341.3L601.7,340.8ZM680.0,301.3L684.0,299.3L684.0,299.0L679.0,297.8L678.6,298.9ZM623.2,303.6L622.6,305.0L624.0,305.3L625.0,303.6L624.7,302.8ZM636.5,276.5L640.2,276.7L640.8,275.7L639.7,272.4L639.5,272.3L637.3,272.8L636.1,275.1ZM630.9,266.5L629.9,267.0L630.8,268.5L632.7,267.1ZM628.6,273.1L628.7,272.5L628.4,272.4L626.6,272.9L627.2,274.1ZM660.9,316.0L658.9,315.9L659.0,317.1L660.1,318.2ZM632.7,229.8L632.8,233.2L632.9,233.3L636.1,232.0L634.5,229.3ZM665.2,293.4L665.3,293.4L666.9,293.6L667.2,292.6L665.9,292.2ZM682.1,379.9L665.7,379.1L662.0,380.8L658.7,387.5L660.4,395.0L701.8,435.7L702.8,435.4L713.1,435.4L723.3,437.1L727.9,442.1L731.7,448.4L726.7,454.6L724.4,457.8L734.8,468.1L736.7,460.3L738.8,454.0L740.4,443.0ZM592.3,373.4L591.5,372.7L587.3,377.3L588.4,378.4L592.8,377.1L592.9,376.1ZM660.3,304.1L660.8,303.5L660.0,301.8L659.5,301.8L658.3,302.7L658.6,303.7ZM623.2,322.1L622.6,322.2L621.1,322.9L621.2,325.6L623.4,325.1L623.4,322.2ZM632.4,329.4L633.0,331.7L635.3,331.3L635.3,331.1L633.3,328.8ZM654.7,315.1L653.6,314.0L652.7,314.3L653.6,316.1ZM667.8,300.3L668.0,299.2L667.9,298.8L667.8,298.7L666.4,298.6L665.7,300.1L665.8,301.0L667.1,300.9ZM684.0,296.1L687.7,293.1L684.0,289.5L683.3,290.0L682.9,290.9L683.7,295.8ZM642.4,231.6L640.6,232.2L639.0,234.4L639.4,236.8L645.1,235.5L646.4,233.3ZM643.7,225.6L644.5,226.1L648.8,225.8L647.7,220.0L647.6,220.0L646.7,220.6ZM633.0,204.4L634.1,206.8L636.6,205.7L636.3,201.2L634.5,200.9ZM603.5,355.7L599.5,358.3L601.5,360.3L605.5,359.6L605.6,357.7L604.3,355.7ZM707.7,161.0L703.3,160.3L698.8,162.5L702.5,166.7ZM658.6,303.7L658.3,302.7L657.1,302.3L656.1,302.6L656.2,302.9L657.5,304.9L658.2,304.8ZM635.0,325.2L636.6,325.0L637.0,324.1L636.4,322.9L635.1,323.1L634.2,324.3ZM624.0,289.9L624.2,289.6L622.2,288.1L621.9,288.3L621.6,289.7L622.1,290.6ZM635.9,319.7L636.5,319.1L636.6,318.8L635.5,317.7L634.3,318.5L635.2,319.7ZM645.6,311.0L646.7,309.0L644.9,307.9L643.7,309.4ZM675.9,237.4L672.5,233.2L672.1,233.9L672.4,237.3L675.4,237.8ZM641.7,321.3L643.3,323.2L643.6,322.5L643.2,320.5ZM683.7,312.0L685.2,314.6L692.1,314.5L692.1,314.5L692.2,314.3L692.4,310.1L686.6,306.2L683.4,309.4ZM674.0,232.2L678.4,233.3L679.0,233.1L678.4,230.3L676.0,228.1L675.6,228.3ZM628.2,343.0L628.5,343.4L630.2,342.2L630.5,339.1L630.0,338.6L627.0,338.8L626.3,339.2ZM611.8,247.0L610.0,250.7L613.1,254.2L613.8,254.1L614.7,252.5L615.4,248.6ZM661.9,296.6L661.8,296.7L661.5,298.9L662.6,299.3L663.3,298.5L662.6,296.9ZM640.0,345.5L643.5,347.3L643.0,344.7L641.1,342.3L640.3,343.0ZM626.6,330.7L626.4,330.6L623.2,333.2L625.1,335.5L627.7,334.6ZM636.6,370.3L635.2,370.4L635.0,371.3L636.6,373.0L638.0,372.9L638.5,371.9ZM618.5,327.5L618.3,327.5L616.0,330.2L621.7,331.5L621.9,329.6ZM642.3,212.8L638.5,211.6L638.9,215.0ZM626.1,265.3L626.2,264.7L626.1,264.1L623.7,264.0L622.3,264.5L622.3,266.4L623.1,266.7ZM638.6,243.8L639.8,247.7L640.8,248.2L642.6,241.5L639.9,241.2ZM630.6,224.0L631.6,223.1L630.9,218.8L629.6,218.8L627.9,220.3L627.5,222.9L628.0,224.8ZM631.6,215.1L633.9,212.9L632.1,210.3L628.8,211.5L628.8,211.7L628.1,213.2ZM618.8,280.1L618.5,276.8L615.4,274.9L613.3,275.2L615.4,281.7ZM682.2,265.5L682.4,265.4L682.8,264.4L680.0,262.1L679.3,262.3L678.8,262.9L679.7,264.4ZM650.1,298.7L648.0,301.2L650.1,301.7L651.0,300.9L650.7,298.7ZM636.6,318.8L636.5,319.1L637.6,320.4L638.4,319.8L638.4,319.4L636.8,318.7ZM636.8,302.9L635.3,303.8L636.2,306.0L637.9,305.2L638.1,304.5ZM679.3,262.3L680.0,262.1L681.1,261.4L680.7,259.9L679.1,259.0L678.5,259.3ZM639.1,333.7L639.1,333.6L639.5,331.1L639.3,330.8L636.4,333.1ZM636.5,342.4L640.0,343.0L640.3,343.0L641.1,342.3L641.7,339.8L641.5,339.5L640.3,339.0L637.8,338.4L636.7,339.8ZM658.7,308.2L658.9,308.3L659.0,308.3L659.9,306.6L659.4,305.8L658.9,305.8ZM652.7,314.3L652.4,313.7L650.7,313.6L650.6,313.6L650.6,314.5L651.7,315.1ZM596.6,362.7L591.4,361.1L591.4,361.1L590.3,362.2L593.0,366.3L595.0,366.7L597.3,363.7ZM619.7,297.9L619.6,297.7L619.1,296.6L616.3,296.2L615.3,298.2L617.5,300.9L619.2,299.3ZM641.0,317.2L641.1,316.9L640.1,316.5L639.3,316.5L638.5,317.6L638.9,318.7L639.8,319.0ZM636.8,268.3L639.5,272.3L639.7,272.4L641.4,270.9L641.2,265.6L636.8,268.1ZM608.7,245.4L611.5,246.3L612.7,244.1L612.6,241.1L606.0,236.7L607.3,240.0L606.8,242.7ZM638.8,220.3L636.8,218.3L635.7,219.8L636.0,222.4L636.1,222.5L638.4,221.3ZM630.3,268.9L628.5,267.9L627.1,268.3L626.9,268.6L627.0,269.2L630.0,269.3ZM604.4,314.1L599.7,315.5L606.5,322.7L607.8,322.9L609.2,321.4L608.1,315.6ZM665.3,283.8L665.4,284.0L666.4,284.4L667.8,283.2L667.4,282.4L665.6,282.4ZM666.4,284.4L666.7,286.2L668.1,285.8L668.8,285.0L668.6,283.7L667.8,283.2ZM656.1,194.4L655.3,199.4L656.6,200.4L659.1,198.0L656.1,194.4ZM623.3,321.4L623.2,322.1L623.4,322.2L625.0,322.5L626.6,320.9L625.2,319.3ZM657.1,284.5L656.9,285.1L657.1,285.7L659.0,287.4L660.5,286.7L660.5,286.6L660.3,284.2ZM591.4,361.1L590.8,357.2L586.3,353.1L582.1,357.5L583.2,361.4L588.2,363.0L590.3,362.2ZM659.2,309.3L660.7,311.0L661.2,310.1L659.3,308.3L659.0,308.3L658.9,308.3ZM618.7,242.7L617.0,244.2L615.8,248.4L619.7,249.1ZM635.8,242.1L634.4,240.9L632.2,241.7L633.0,243.6L633.5,244.1L635.0,244.6ZM685.8,281.8L684.7,279.8L682.8,281.0L682.6,281.5L684.0,282.8ZM652.5,240.6L652.5,244.8L658.8,242.5L654.3,238.3ZM680.4,277.4L680.6,277.6L681.5,277.6L683.5,276.8L683.6,276.6L681.3,273.6L680.5,273.0L680.0,274.9ZM675.7,263.8L675.9,263.7L674.7,261.3L674.3,261.2L673.6,263.1ZM660.2,184.2L660.6,185.2L672.6,189.5L672.7,189.3L675.1,182.6L673.5,180.1L672.5,180.8L663.9,181.7L659.9,181.7ZM659.2,321.0L659.2,321.3L659.8,322.3L662.9,323.3L662.6,320.2L661.2,319.1L660.6,319.2L659.6,320.1ZM689.0,171.7L682.8,174.8L682.7,174.8L684.7,177.6L688.3,176.2ZM672.0,240.4L671.4,239.8L668.6,240.5L669.6,243.9L671.0,243.5L672.4,242.0ZM668.4,278.9L667.8,279.4L667.8,279.9L670.3,280.9L670.6,280.8L671.5,279.1L671.3,278.6ZM677.4,284.3L681.1,284.2L681.3,282.4L680.7,282.1L678.9,282.4ZM688.2,182.3L684.2,181.9L682.0,184.2L684.7,191.7L686.2,189.4L689.6,185.1L690.4,184.6ZM661.2,252.2L661.4,252.7L664.1,253.5L667.0,250.9L664.1,249.2ZM687.6,260.1L688.7,260.3L690.0,258.1L688.3,256.6L686.9,256.9L686.8,259.7ZM594.0,377.4L593.2,377.3L594.0,383.1L594.2,383.3L594.4,383.5L595.8,380.6ZM705.2,315.7L706.9,318.6L726.4,332.5L731.0,315.6L729.1,295.7L716.3,296.8L711.3,299.3L704.8,306.6L704.0,309.4ZM681.3,282.4L682.1,281.7L680.1,279.1L679.3,280.1L680.7,282.1ZM617.3,286.0L617.5,288.9L618.8,289.2L619.8,287.6L619.2,285.1L618.4,284.8L617.8,284.8ZM654.5,288.0L652.1,290.0L653.7,290.9L654.7,290.8L654.6,288.1ZM697.3,340.6L680.0,348.8L678.0,351.4L678.5,356.3L731.8,360.3L726.2,347.8L709.3,341.6ZM632.9,218.8L634.0,222.5L634.8,222.8L636.0,222.4L635.7,219.8L632.9,218.7ZM617.8,319.5L611.3,321.7L614.6,323.8L616.0,323.8L617.9,321.2L617.8,319.5ZM621.4,294.4L619.1,296.6L619.6,297.7L623.6,298.0L623.6,297.7L623.5,296.3L622.0,294.6ZM642.6,217.5L638.7,215.4L637.8,215.8L640.2,219.5L640.4,219.5ZM684.0,299.3L684.9,302.7L686.4,303.5L689.8,302.4L690.5,301.3L690.9,297.9L684.3,298.5L684.0,299.0ZM663.7,248.1L664.1,249.2L667.0,250.9L667.6,250.9L668.9,246.8L668.3,245.4L665.9,244.7ZM661.8,206.4L665.2,206.8L667.0,202.0L665.4,200.7L661.2,205.5ZM702.4,332.6L697.8,321.8L692.1,325.7ZM649.7,327.3L648.9,326.8L647.6,326.7L646.4,328.2L646.5,330.0ZM635.6,327.2L636.6,325.5L636.6,325.0L635.0,325.2L634.7,325.6L635.4,327.3ZM624.0,308.0L622.5,309.6L622.7,311.1L623.0,311.0L624.4,310.3L624.6,309.3L624.3,308.3ZM657.2,249.8L655.1,250.5L654.4,254.8L654.8,255.7L657.4,256.6L660.9,254.8L661.4,252.7L661.2,252.2ZM647.7,295.0L648.3,294.1L646.6,288.5L643.7,296.0ZM689.9,285.3L690.0,285.2L690.7,283.4L685.8,281.8L684.0,282.8L684.5,286.8L684.8,287.1ZM632.9,264.0L635.5,261.1L635.1,260.8L632.9,261.7L632.6,263.5ZM624.3,243.0L624.1,245.3L625.9,247.8L627.4,247.4L627.4,245.7L626.4,243.7ZM670.6,280.8L671.3,281.7L673.4,281.8L673.9,280.9L673.0,279.4L671.5,279.1ZM686.5,262.6L684.0,262.5L684.0,263.1L686.0,265.2L687.9,264.4ZM624.0,235.0L621.0,234.9L620.1,240.8L622.9,241.8L626.8,238.4L627.0,237.4ZM632.4,248.6L632.6,248.0L632.2,246.8L630.2,245.7L628.0,247.6L628.3,248.0L628.6,248.1ZM672.7,260.2L672.2,259.6L667.0,260.9L667.0,261.2L670.9,262.9L671.4,262.9ZM622.3,318.2L623.3,321.4L625.2,319.3L625.2,317.7L624.4,317.4ZM622.4,299.5L623.6,298.2L623.6,298.0L619.6,297.7L619.7,297.9L620.8,299.1ZM637.7,194.0L641.3,194.6L641.7,187.7L637.3,191.3ZM695.9,289.7L697.6,283.6L696.0,282.1L692.6,280.8L690.7,283.4L690.0,285.2ZM635.0,360.3L636.1,361.0L638.2,359.9L638.2,357.2L635.9,356.7L634.7,359.0ZM629.8,260.8L629.9,261.5L630.8,262.9L631.2,262.8L632.0,261.5L631.1,260.1L630.5,260.1ZM662.2,281.2L661.3,282.2L661.1,283.2L662.0,283.9L663.6,284.5L664.3,283.6L662.7,281.3ZM610.2,321.3L609.2,321.4L607.8,322.9L608.3,326.4L613.2,327.5L614.6,323.8L611.3,321.7ZM645.8,311.9L647.7,311.8L647.8,311.8L648.1,310.9L647.5,309.0L646.7,309.0L645.6,311.0ZM688.0,250.7L688.0,250.7L688.9,252.1L689.6,251.9L689.0,250.2ZM661.6,303.5L662.0,302.6L661.4,301.5L660.7,301.4L660.0,301.8L660.8,303.5ZM657.5,304.9L656.2,302.9L655.9,304.4L656.6,305.3L656.7,305.3ZM684.8,287.1L684.5,286.8L681.8,285.5L679.2,286.8L679.3,287.6L682.0,289.8L683.3,290.0L684.0,289.5ZM679.1,325.4L681.1,333.3L687.5,332.4L688.6,328.4L684.9,323.5L679.2,325.0ZM687.5,332.4L681.1,333.3L680.5,333.9L680.0,348.8L697.3,340.6ZM639.3,330.8L639.5,331.1L641.7,332.5L643.1,330.6L641.1,328.7L639.2,330.1ZM673.8,273.1L674.0,272.9L674.1,272.7L674.1,271.9L672.2,270.6L671.7,270.7L671.6,272.7L672.0,273.2ZM681.8,252.8L682.9,254.8L684.2,255.2L684.2,252.8L684.0,252.6ZM619.4,289.9L621.6,289.7L621.9,288.3L619.8,287.6L618.8,289.2ZM620.7,285.0L619.2,285.1L619.8,287.6L621.9,288.3L622.2,288.1L622.4,287.7L621.7,285.5ZM639.9,288.7L642.1,289.0L646.6,287.3L647.6,286.1L647.7,285.4L638.6,282.7L638.6,282.7L637.9,285.0ZM685.0,323.1L690.5,320.9L692.1,314.5L685.2,314.6L684.3,315.6ZM667.6,318.6L662.6,320.2L662.9,323.3L666.2,326.8L668.6,324.1L670.3,320.4L669.8,319.3L668.5,318.6ZM677.3,299.6L675.6,303.0L679.5,303.5L680.0,301.3L678.6,298.9ZM665.4,284.0L664.4,285.6L664.5,286.5L666.6,286.3L666.7,286.2L666.4,284.4ZM656.6,200.4L657.7,203.7L658.8,203.9L662.7,198.8L661.3,197.6L659.1,198.0ZM623.5,296.3L623.6,297.7L625.9,297.3L626.2,296.8L625.5,295.9L624.9,295.9ZM633.3,328.8L635.3,331.1L636.6,329.8L634.5,327.9L633.6,328.1ZM594.8,352.9L590.8,357.2L591.4,361.1L591.4,361.1L597.4,356.3ZM653.7,286.1L654.5,288.0L654.6,288.1L656.4,288.4L657.1,285.7L656.9,285.1ZM631.8,322.9L631.1,324.5L631.3,324.6L632.4,325.0L632.8,324.8L633.3,324.4L633.2,322.2L633.2,322.1ZM682.0,255.8L682.9,254.8L681.8,252.8L681.7,252.8L681.4,253.4L681.2,254.1ZM670.8,287.2L672.5,285.7L672.1,284.8L669.4,285.2L670.3,287.4ZM687.8,268.3L690.0,267.3L688.1,264.4L687.9,264.4L686.0,265.2L685.6,266.0L686.8,267.9ZM604.4,251.3L604.7,251.2L608.7,245.4L606.8,242.7L606.4,244.6L605.0,242.3L601.9,238.7L598.2,234.6L595.5,232.8L597.0,238.0L598.7,242.3L601.0,246.0L598.4,247.0L601.3,249.9ZM624.5,284.6L624.9,284.0L625.0,283.6L623.8,283.1L623.1,283.7L623.1,284.9ZM682.6,235.2L681.8,236.8L681.9,241.0L682.1,241.3L685.8,240.3ZM652.0,229.4L658.4,232.2L659.3,231.3L657.7,221.8L657.1,222.0ZM670.1,281.2L670.3,280.9L667.8,279.9L667.4,280.5L667.4,282.3ZM613.3,367.5L614.4,363.3L613.8,361.7L613.1,361.2L612.0,361.7L610.8,365.4ZM663.0,306.3L663.2,305.0L661.6,303.5L660.8,303.5L660.3,304.1L660.3,304.5L662.9,306.3ZM610.6,365.4L607.5,366.6L607.5,366.7L607.4,366.9L610.3,371.1L613.6,368.9L613.7,368.7L613.3,367.5L610.8,365.4ZM675.9,281.1L676.1,281.2L677.1,280.3L676.9,277.8L675.2,277.4L674.5,278.3ZM632.0,261.5L632.9,261.7L635.1,260.8L634.0,259.2L632.1,259.3L631.1,260.1ZM616.7,343.9L616.9,344.0L619.2,341.3L616.5,340.3L615.6,341.5ZM642.2,196.4L640.8,197.6L640.6,199.4L644.2,201.0L643.9,196.5ZM652.8,342.1L650.9,341.7L646.6,344.1L646.4,347.2L650.2,349.4L652.1,347.8ZM636.7,200.6L635.3,197.6L633.4,200.1L634.5,200.9L636.3,201.2L636.5,201.1ZM629.3,327.5L629.0,327.1L627.5,326.4L625.0,328.0L624.9,328.1L626.4,330.6L626.6,330.7L628.1,330.4L629.6,328.3ZM662.0,272.6L659.1,274.2L658.6,277.4L661.5,277.9L661.6,277.6ZM619.4,318.8L620.8,317.8L620.7,315.6L618.0,315.2L615.8,316.9L617.8,319.5L617.8,319.5ZM624.0,269.7L621.9,269.7L623.1,271.5L624.6,270.8L624.7,270.6ZM600.7,353.2L597.7,356.4L599.4,358.3L599.5,358.3L603.5,355.7ZM684.9,272.6L685.0,274.0L685.3,274.8L686.8,275.2L689.6,272.5L687.1,270.9ZM620.0,346.9L617.7,347.5L618.0,349.0L619.1,350.6L622.3,350.7L622.8,348.2L622.1,347.5ZM658.4,232.2L652.0,229.4L651.1,229.7L648.5,232.8L654.3,237.7L657.8,235.3L658.6,233.0ZM610.0,250.7L604.7,251.2L604.4,251.3L606.1,256.7L608.5,258.3L613.1,254.2ZM669.4,308.7L667.3,309.6L670.7,312.6L670.4,309.0ZM604.7,363.5L601.5,362.1L599.7,364.6L602.1,366.7L602.3,366.7L604.7,363.7ZM667.9,294.9L667.8,295.1L667.7,295.4L671.3,296.6L670.3,293.8ZM622.4,287.7L622.2,288.1L624.2,289.6L625.0,289.0L625.6,287.9L625.0,287.2ZM626.9,269.3L626.3,271.8L628.1,271.8L627.8,270.2L627.0,269.3ZM675.3,243.0L672.4,242.0L671.0,243.5L672.7,245.5L674.6,245.2ZM668.4,240.4L668.5,236.7L667.3,236.1L664.7,238.4L666.2,240.7ZM658.8,203.9L661.2,205.5L665.4,200.7L664.7,199.1L662.7,198.8ZM663.6,284.5L662.0,283.9L662.8,286.2L664.1,286.9L664.2,286.9L664.5,286.5L664.4,285.6ZM635.0,244.6L633.5,244.1L632.2,246.8L632.6,248.0L634.4,247.1L635.5,245.0ZM627.5,323.5L626.9,323.9L627.6,325.6L629.5,324.5L628.6,323.4ZM633.1,320.5L632.5,319.4L631.4,319.2L631.3,319.3L630.3,320.0L630.7,321.5L633.0,321.2ZM653.0,260.7L654.8,255.7L654.4,254.8L650.1,255.0L647.8,257.1L647.6,258.2L651.6,260.9ZM668.1,285.8L666.7,286.2L666.6,286.3L667.4,288.4L667.6,288.8L669.4,288.4L669.5,288.2ZM635.2,319.7L634.3,318.5L633.3,318.3L632.5,319.4L633.1,320.5L634.9,320.1ZM628.4,277.5L629.0,277.5L629.5,276.8L628.8,276.0L627.6,276.1L627.5,276.5ZM629.4,281.4L630.0,282.4L631.8,281.1L631.7,280.7L630.9,280.4L629.9,280.6ZM669.8,319.3L671.1,315.3L666.1,311.5L665.6,312.0L665.1,313.8L668.5,318.6ZM674.3,303.1L672.2,304.4L671.9,306.1L672.5,308.5L674.7,309.8L676.2,308.3L674.9,303.2ZM620.9,326.1L624.4,328.2L624.9,328.1L625.0,328.0L624.5,326.2L623.4,325.1L621.2,325.6ZM645.6,312.0L645.8,311.9L645.6,311.0L643.7,309.4L642.8,309.7L642.3,311.1L642.4,311.2L644.9,312.4ZM620.9,305.3L621.4,306.1L623.9,307.2L624.4,306.4L624.0,305.3L622.6,305.0ZM613.7,351.1L613.7,350.9L612.7,349.9L608.2,350.6L612.1,352.6L612.5,352.5ZM630.9,280.4L631.7,280.7L633.5,278.6L633.6,277.9L633.4,277.7L631.4,277.5L630.4,278.4ZM681.8,269.1L682.2,269.5L684.1,269.4L684.4,269.1L684.5,268.9L683.8,266.8L683.7,266.7L681.9,268.5L681.8,269.0ZM684.7,246.9L685.5,245.4L685.0,244.2L683.8,244.1L683.4,245.0L683.4,247.0ZM642.8,314.2L642.3,314.7L642.2,316.5L644.5,315.7L644.7,315.0L643.5,314.0ZM635.1,321.4L636.5,322.3L636.6,322.1L635.9,319.7L635.2,319.7L634.9,320.1ZM646.5,330.2L649.6,332.5L650.5,331.1L649.8,327.3L649.7,327.3L646.5,330.0ZM682.3,256.5L681.9,256.3L681.1,256.6L680.4,257.6L681.3,258.5L683.3,257.7L683.2,257.5ZM629.2,307.1L631.2,308.1L631.9,308.2L632.8,307.9L632.6,305.3L631.8,305.0ZM634.9,343.5L633.9,344.7L633.8,345.4L635.6,347.5L636.5,347.7L637.4,347.0L637.4,344.9L635.4,343.4ZM685.0,244.2L688.2,241.4L687.4,240.6L685.8,240.3L682.1,241.3L682.1,242.5L683.8,244.1ZM636.8,218.3L638.8,220.3L640.2,219.5L637.8,215.8L636.8,216.0ZM623.4,280.7L621.8,281.2L621.8,282.7L623.1,283.7L623.8,283.1L623.4,280.7ZM621.1,308.7L619.1,308.1L619.8,310.3L620.3,310.6ZM636.0,378.5L635.2,383.8L640.9,384.8L642.0,380.9L636.5,378.1ZM636.7,339.8L637.8,338.4L637.5,338.1L633.6,337.7L632.9,338.8L633.8,340.6ZM602.3,366.7L604.7,368.1L607.4,366.9L607.5,366.7L604.7,363.7ZM653.0,214.8L651.9,209.4L649.4,213.5L650.6,218.1ZM671.9,273.6L670.5,274.9L670.6,275.4L672.3,275.9L672.8,275.4ZM622.1,312.3L621.2,315.2L623.4,315.1L623.9,313.8ZM657.2,328.8L657.1,327.2L653.2,328.5L653.1,329.6L653.2,329.6L656.6,330.1ZM693.5,263.8L689.6,262.4L688.1,264.4L690.0,267.3L693.8,268.4ZM628.4,317.2L627.3,315.5L625.4,317.7L626.5,318.2L627.2,318.1ZM670.3,293.8L671.3,296.6L671.5,296.8L671.8,296.9L672.5,296.5L673.3,294.8L672.3,292.2L672.0,291.9L670.4,292.3ZM633.2,195.3L635.5,196.3L635.5,196.3L637.3,195.0L637.7,194.0L637.3,191.3L636.5,192.0L632.8,195.0ZM684.6,255.5L684.3,255.3L682.3,256.5L683.2,257.5ZM634.8,288.0L633.2,287.4L631.7,288.5L633.9,290.3L634.8,289.7ZM624.3,249.6L621.1,249.9L621.0,249.9L620.7,251.4L620.8,253.3L621.1,253.5L625.0,252.9L625.1,250.7ZM690.5,320.9L691.7,325.7L692.1,325.7L697.8,321.8L697.8,321.3L694.1,316.0L692.1,314.5L692.1,314.5ZM657.8,235.3L660.9,239.6L663.2,238.2L662.7,235.1L658.6,233.0ZM684.0,299.0L684.3,298.5L684.0,296.1L683.7,295.8L679.8,294.7L678.5,296.1L679.0,297.8ZM654.7,315.1L655.3,314.9L655.4,314.1L654.6,313.1L653.8,313.5L653.6,314.0ZM630.6,368.5L628.8,373.2L632.1,374.9L632.5,374.4L632.3,372.1ZM648.8,225.8L651.1,229.7L652.0,229.4L657.1,222.0L650.3,219.2L647.7,220.0ZM620.6,338.8L619.9,338.0L616.5,339.5L616.5,340.3L619.2,341.3L619.9,341.2ZM628.8,279.3L629.7,278.5L629.0,277.5L628.4,277.5L627.9,279.1L628.2,279.3ZM614.7,252.5L613.8,254.1L613.9,254.2L617.1,255.4L619.5,255.3L620.8,253.3L620.7,251.4ZM668.9,277.6L668.8,277.6L668.4,278.9L671.3,278.6L671.3,278.6L671.3,278.6L670.1,277.7ZM686.0,251.2L685.2,252.9L685.3,253.0L687.0,253.2L687.1,251.2L686.4,251.1ZM676.1,242.5L676.9,242.6L678.6,240.4L678.1,238.5L676.3,237.3L675.9,237.4L675.4,237.8L675.1,238.8ZM631.1,251.2L631.8,251.3L632.6,249.1L632.4,248.6L628.6,248.1ZM638.8,237.9L639.4,236.8L639.0,234.4L636.7,234.4L634.9,235.9ZM621.0,369.3L615.2,368.1L613.7,368.7L613.6,368.9L618.9,375.6L621.0,374.4L621.9,372.8ZM673.3,286.4L676.7,286.2L677.2,285.6L677.3,284.3L676.4,283.4L672.9,285.9ZM630.2,324.7L629.0,327.1L629.3,327.5L630.9,326.3L631.3,324.6L631.1,324.5L631.1,324.5ZM687.3,234.6L685.4,232.1L682.8,233.8L682.6,235.2L685.8,240.3L687.4,240.6ZM656.4,310.0L656.7,310.4L658.6,311.7L658.5,310.7L657.7,309.2L656.5,309.9ZM612.0,361.7L609.8,361.6L609.5,363.9L610.6,365.4L610.8,365.4ZM624.5,301.7L622.5,301.4L621.8,302.9L623.2,303.6L624.7,302.8L624.6,302.5ZM605.6,357.7L605.5,359.6L606.3,360.7L608.1,360.9L608.1,360.9L609.5,358.8L609.3,356.4ZM630.7,295.9L629.3,294.1L628.4,296.3L630.6,297.4ZM676.1,251.1L677.1,252.1L679.4,250.5L679.4,249.6L675.8,249.6ZM666.4,298.6L665.6,297.9L665.0,297.8L664.8,297.8L664.5,299.7L665.7,300.1ZM677.4,295.8L675.8,293.8L673.3,294.8L672.5,296.5L675.1,297.3ZM686.4,251.1L687.1,251.2L687.7,250.7L686.7,249.2L686.0,249.0L685.7,249.5ZM679.8,294.0L677.8,290.9L677.1,290.6L676.6,291.2L676.0,292.3L675.8,293.8L677.4,295.8L678.5,296.1L679.8,294.7ZM662.9,295.2L663.6,296.1L664.1,296.0L664.4,295.3L663.6,294.6L663.6,294.6ZM617.5,270.8L617.5,269.7L611.0,265.2L611.0,274.7L613.3,275.2L615.4,274.9L615.7,274.5ZM626.9,262.8L626.5,262.2L624.9,261.9L623.7,264.0L626.1,264.1ZM635.9,356.7L634.7,355.3L633.1,355.3L633.3,358.1L634.7,359.0ZM631.9,251.6L632.8,253.6L634.2,253.9L635.9,251.4L635.8,251.4L631.8,251.5ZM605.2,305.8L609.4,303.1L609.8,298.8L609.7,298.7L598.7,301.1L598.7,301.4L598.1,302.7ZM619.2,341.3L616.9,344.0L617.1,344.4L619.6,344.4L621.3,343.2L619.9,341.2ZM652.5,193.8L651.6,197.0L653.4,199.4L655.3,199.4L656.1,194.4ZM643.5,327.3L643.2,325.9L641.4,325.4L642.2,327.7L643.4,327.5L643.5,327.4ZM629.9,316.1L630.5,314.2L630.2,314.1L628.7,315.4L629.8,316.1ZM660.3,284.2L660.5,286.6L662.8,286.2L662.0,283.9L661.1,283.2ZM628.6,356.6L631.2,359.4L633.3,358.1L633.1,355.3L631.2,354.3L628.8,356.0ZM628.4,272.4L628.1,271.8L626.3,271.8L625.7,272.5L626.6,272.9ZM600.8,377.0L602.9,379.5L603.6,379.6L604.4,377.4L603.3,375.9L603.2,375.9L601.1,376.6ZM642.7,356.8L638.9,356.5L638.2,357.2L638.2,359.9L641.5,361.7L642.9,357.1ZM662.5,300.9L662.6,299.4L662.6,299.3L661.5,298.9L660.7,299.1L660.7,299.3L660.7,301.4L661.4,301.5ZM624.0,305.3L624.4,306.4L626.0,306.3L625.6,303.9L625.0,303.6ZM635.9,315.2L635.8,315.0L633.7,315.4L632.5,316.5L633.2,317.4L635.4,316.3L635.9,315.2ZM632.2,241.7L634.4,240.9L635.3,239.5L634.4,237.6L631.2,240.6L631.3,241.1ZM702.5,285.2L706.6,273.2L696.0,282.1L697.6,283.6ZM616.0,330.2L615.8,330.3L615.0,332.8L616.9,334.1L621.9,332.3L621.7,331.5ZM634.5,229.3L636.1,232.0L636.6,232.1L637.8,231.4L636.6,227.9ZM662.7,198.8L664.7,199.1L668.0,194.6L661.1,189.8L660.7,190.5L661.3,197.6ZM680.0,262.1L682.8,264.4L684.0,263.1L684.0,262.5L683.6,261.0L681.1,261.4ZM635.5,245.0L638.6,243.8L639.9,241.2L639.5,240.9L635.8,242.1L635.0,244.6L635.5,245.0ZM633.2,273.7L632.4,273.5L631.3,275.0L633.3,276.3ZM647.0,355.8L646.6,356.9L646.9,357.3L652.5,359.3L652.1,354.4L650.0,352.6ZM702.5,166.7L703.8,174.2L706.8,173.1L711.0,169.7L712.8,166.3L708.5,161.1L707.7,161.0ZM624.3,249.6L625.9,247.8L624.1,245.3L621.8,246.1L621.1,249.9ZM630.9,285.2L629.1,285.1L629.2,287.8L631.2,287.9ZM631.6,288.5L631.7,288.5L633.2,287.4L632.6,285.2L631.0,285.2L630.9,285.2L631.2,287.9ZM644.2,399.2L649.7,402.0L654.8,404.5L653.1,408.0L658.2,413.1L665.1,418.2L668.5,423.4L673.7,426.8L675.4,433.7L680.5,437.9L692.5,438.8L701.8,435.7L660.4,395.0L652.3,394.9L645.4,397.5ZM724.4,457.8L720.4,463.4L724.2,464.6L730.4,465.9L734.2,470.5L734.8,468.1ZM644.8,307.4L645.1,306.8L644.1,304.5L641.6,304.5L641.1,306.1L641.2,306.3ZM632.6,200.0L633.2,195.3L632.8,195.0L632.2,195.4L629.7,199.7L629.3,200.9ZM629.5,317.3L631.2,317.5L631.9,316.3L631.8,316.2L629.9,316.1L629.8,316.1ZM642.2,327.7L641.1,328.6L641.1,328.7L643.1,330.6L644.8,330.3L643.4,327.5ZM679.5,249.5L681.9,250.8L681.4,247.7L680.5,247.3ZM652.2,309.5L652.2,309.6L652.2,309.6L655.2,310.1L654.7,308.2ZM640.0,202.2L640.4,201.5L640.5,199.6L637.2,200.1L636.7,200.6L636.5,201.1ZM665.2,206.8L661.8,206.4L660.8,209.8L663.9,212.6L666.9,208.3ZM672.5,255.4L672.4,255.5L672.2,259.6L672.7,260.2L673.4,260.5L675.9,257.8L675.9,257.8L672.6,255.5ZM630.5,273.6L631.0,273.0L629.8,271.9L628.7,272.5L628.6,273.1L629.1,273.9ZM633.9,207.0L634.1,206.8L633.0,204.4L629.3,201.0L628.0,204.8L628.2,206.1ZM702.5,166.7L698.8,162.5L698.2,162.8L695.6,163.7L694.9,171.6L699.8,175.7L699.9,175.7L703.8,174.2ZM641.1,342.3L643.0,344.7L645.8,343.7L644.2,340.4L643.6,340.1L641.7,339.8ZM648.0,317.8L648.0,319.7L648.4,319.9L649.5,319.0L648.0,317.8ZM675.9,257.8L678.0,254.8L677.6,254.2L672.6,255.5ZM674.3,261.2L673.4,260.5L672.7,260.2L671.4,262.9L671.6,263.1L673.6,263.2L673.6,263.1ZM676.1,281.2L675.9,281.1L673.9,280.9L673.4,281.8L673.5,283.2L676.4,283.4ZM633.6,327.9L632.7,327.1L631.7,327.1L630.4,328.5L631.9,329.4L632.4,329.4L633.3,328.8L633.6,328.1ZM645.4,397.5L644.1,388.0L641.8,386.4L635.6,392.5L635.5,394.8L639.4,396.8L644.2,399.2ZM661.5,277.9L661.8,278.4L665.0,278.0L665.3,277.4L664.0,275.8L661.6,277.6ZM671.0,243.5L669.6,243.9L668.3,245.4L668.9,246.8L671.6,247.5L672.7,245.5ZM637.3,195.0L635.5,196.3L637.7,198.1L640.2,197.5ZM643.9,196.5L644.2,201.0L644.4,201.3L648.1,201.2L648.3,198.4L645.9,195.8ZM680.0,246.6L679.4,245.9L675.8,247.8L675.4,248.9L675.8,249.6L679.4,249.6L679.5,249.5L680.5,247.3ZM627.5,298.1L627.5,296.8L626.2,296.8L625.9,297.3L626.2,298.4ZM625.1,335.5L623.2,333.2L623.0,333.2L621.7,335.2L623.9,338.0L624.5,337.9ZM647.9,233.1L648.5,232.8L651.1,229.7L648.8,225.8L644.5,226.1L646.6,233.2ZM627.5,388.4L625.6,383.8L621.7,383.2L621.4,387.4L622.3,387.4L626.3,389.8ZM660.7,190.5L661.1,189.8L660.6,185.2L660.2,184.2L651.5,191.3L652.4,193.7L652.5,193.8L656.1,194.4L656.1,194.4ZM645.6,249.1L645.8,251.3L646.4,252.0L648.2,252.1L652.0,247.7L651.7,247.2L648.0,247.0ZM671.4,262.9L670.9,262.9L670.0,265.0L671.7,266.4L672.2,265.8L671.6,263.1ZM649.7,317.9L650.2,317.6L649.1,316.4L647.5,316.5L647.7,317.5L648.0,317.8L648.0,317.8ZM621.3,293.1L619.3,291.1L617.5,292.1L617.5,292.6L621.3,293.9Z" fill="#f7df7b" stroke="#696c72" stroke-width="0.62" stroke-linejoin="round"/><path d="M625.5,272.6L624.2,273.2L624.9,275.6L626.1,275.2ZM626.1,291.9L626.1,291.9L625.0,289.0L624.2,289.6L624.0,289.9L624.7,291.7L625.6,292.2ZM614.6,315.8L610.8,313.5L608.1,315.6L609.2,321.4L610.2,321.3L614.9,316.5ZM631.3,275.0L630.6,275.3L630.8,276.8L631.4,277.5L633.4,277.7L633.4,276.8L633.3,276.3ZM665.2,243.8L659.8,242.5L659.6,242.7L659.6,246.5L663.7,248.1L665.9,244.7ZM617.0,354.1L613.7,351.1L612.5,352.5L613.3,353.9L616.3,354.9L617.0,354.1ZM641.0,322.9L641.0,321.3L640.7,321.0L639.1,322.4L639.2,323.0L640.3,323.3ZM610.7,357.0L609.4,356.2L609.3,356.4L609.5,358.8L611.9,359.2ZM613.3,275.2L611.0,274.7L609.8,275.4L608.8,277.8L610.5,284.8L610.9,284.9L615.0,283.1L615.4,281.7ZM635.9,356.7L638.2,357.2L638.9,356.5L638.7,354.1L636.6,353.1L634.7,355.3ZM643.2,320.5L643.6,322.5L645.3,321.5L645.3,320.6L644.0,319.1L643.8,319.3ZM656.1,298.3L655.8,297.9L653.3,298.5L654.0,301.5L656.2,299.5ZM616.9,334.1L615.0,332.8L614.2,333.1L613.9,333.9L613.6,337.3L614.6,338.5L616.2,339.1L617.2,334.6ZM617.2,334.6L616.2,339.1L616.5,339.5L619.9,338.0L619.4,336.4ZM674.9,275.7L675.7,273.9L674.0,272.9L673.8,273.1L674.0,275.3L674.7,275.9ZM621.5,269.0L621.6,267.1L618.7,266.8L617.6,269.6ZM639.9,280.1L648.8,280.5L648.7,278.4L643.2,275.8L640.8,275.7L640.2,276.7ZM624.4,255.6L623.5,257.8L624.5,259.1L625.7,259.2L626.7,257.8L627.0,255.7L626.9,255.4L625.9,255.0ZM636.0,333.2L635.7,334.0L637.0,335.9L638.8,334.8L639.1,333.7L636.4,333.1ZM683.3,290.0L682.0,289.8L677.8,290.9L679.8,294.0L682.9,290.9ZM632.4,282.0L631.4,283.0L631.0,285.2L632.6,285.2L633.0,284.9L633.2,282.5ZM633.4,270.2L633.5,270.2L634.2,270.5L636.8,268.3L636.8,268.1L636.2,267.4L633.0,266.9L632.8,267.1ZM657.8,363.3L653.9,371.2L654.8,374.8L661.6,370.5L661.7,362.6ZM603.3,375.9L604.4,377.4L607.9,377.9L606.7,374.5L604.8,374.4ZM641.0,322.9L642.4,323.8L643.3,323.5L643.3,323.2L641.7,321.3L641.0,321.3ZM659.3,308.3L661.2,310.1L661.5,309.8L661.0,307.9ZM637.4,317.9L638.5,317.6L639.3,316.5L638.0,315.3L637.1,314.9L635.9,315.2L635.9,315.2ZM596.7,369.5L596.4,370.0L596.2,371.1L596.4,371.7L597.6,373.2L599.5,373.1L600.9,370.3L600.6,369.4L597.3,369.1ZM647.2,365.5L646.9,366.7L648.4,369.6L653.9,371.2L657.8,363.3L654.8,362.7ZM669.8,229.9L672.3,227.5L672.4,224.5L669.0,222.2L668.8,228.9ZM649.5,319.0L649.7,319.0L649.9,318.9L649.7,317.9L648.0,317.8ZM691.9,294.7L694.9,293.7L696.3,291.3L695.9,289.7L690.0,285.2L689.9,285.3L690.7,293.5ZM628.7,315.4L630.2,314.1L628.8,313.1L628.1,312.9L627.3,315.0L627.4,315.3ZM652.4,193.7L651.5,191.3L646.1,188.2L646.0,195.6ZM631.6,303.6L631.0,303.4L629.0,306.7L629.0,307.1L629.2,307.1L631.8,305.0ZM694.9,293.7L700.6,298.2L711.3,299.3L716.3,296.8L704.8,289.1L696.3,291.3ZM641.2,265.6L641.4,270.9L645.6,270.7L645.9,270.6L644.7,266.4L641.4,265.2ZM637.2,200.1L637.7,198.1L635.5,196.3L635.5,196.3L635.3,197.6L636.7,200.6ZM623.1,277.5L623.4,280.7L623.4,280.7L624.5,280.7L625.8,279.2L625.3,277.6L624.1,276.9ZM671.0,304.2L668.8,306.1L669.5,307.1L671.9,306.1L672.2,304.4ZM642.9,379.6L642.0,380.9L640.9,384.8L641.8,386.4L644.1,388.0L649.5,386.2L650.9,385.0L650.5,378.3L648.2,377.3L647.9,377.3ZM614.4,363.3L618.0,364.8L618.6,364.6L616.5,360.9L613.8,361.7ZM659.2,321.0L656.1,320.3L655.6,321.2L656.0,323.3L656.4,323.2L659.2,321.3ZM636.6,325.5L637.9,326.9L638.3,326.8L639.1,325.2L637.9,324.2L637.0,324.1L636.6,325.0ZM662.9,291.7L664.3,293.3L665.2,293.4L665.9,292.2L665.7,290.7ZM689.3,261.2L689.6,262.4L693.5,263.8L695.1,260.6L694.0,259.5ZM628.9,319.8L628.8,319.0L627.2,318.1L626.5,318.2L627.9,320.7L627.9,320.7L627.9,320.7ZM624.2,316.3L623.4,315.1L621.2,315.2L620.7,315.5L620.7,315.6L620.8,317.8L622.3,318.2L624.4,317.4ZM634.2,324.3L635.1,323.1L633.2,322.2L633.3,324.4ZM665.6,301.2L665.8,301.0L665.7,300.1L664.5,299.7L664.0,300.1L664.3,301.0L664.8,301.6ZM684.3,250.6L684.0,252.6L684.2,252.8L685.2,252.9L686.0,251.2ZM696.2,305.7L704.8,306.6L711.3,299.3L700.6,298.2L696.6,301.0L695.8,303.4ZM617.0,360.4L616.5,360.9L618.6,364.6L621.9,364.6L622.1,364.4L620.2,360.3ZM677.4,277.4L680.4,277.4L680.0,274.9L678.5,275.1L677.5,276.3ZM577.8,351.0L577.5,355.3L582.1,357.5L586.3,353.1L587.3,347.5ZM685.0,279.1L684.7,279.8L685.8,281.8L690.7,283.4L692.6,280.8L692.6,280.5L689.2,278.6ZM684.9,272.6L687.1,270.9L687.1,270.8L684.4,269.1L684.1,269.4L684.2,271.9ZM634.7,235.9L634.4,236.4L634.4,237.6L635.3,239.5L639.0,240.2L638.8,237.9L634.9,235.9ZM682.9,290.9L679.8,294.0L679.8,294.7L683.7,295.8ZM633.6,302.0L634.9,299.3L634.4,298.1L630.9,298.2L630.5,298.8L631.6,301.2ZM625.3,286.2L624.5,284.6L623.1,284.9L622.9,285.0L625.0,287.1ZM653.8,306.1L652.2,303.3L650.5,304.0L650.1,304.8L653.0,306.4L653.8,306.2ZM663.1,317.0L667.6,318.6L668.5,318.6L665.1,313.8L663.2,314.5L662.7,316.2ZM626.4,288.0L627.3,288.7L628.6,288.6L629.2,287.8L629.1,285.1L628.8,284.9L628.6,284.8ZM626.2,285.2L624.9,284.0L624.5,284.6L625.3,286.2ZM648.5,264.5L651.6,260.9L647.6,258.2L645.0,259.9L645.0,260.3L648.0,264.4ZM625.0,252.9L621.1,253.5L624.4,255.6L625.9,255.0L625.9,254.8ZM664.5,299.7L664.8,297.8L664.8,297.8L663.3,298.5L662.6,299.3L662.6,299.4L664.0,300.1ZM629.4,253.0L630.0,253.4L631.9,251.6L631.8,251.5L631.8,251.3L631.1,251.2L629.5,251.5ZM660.4,292.4L660.3,293.0L662.3,295.4L662.9,295.2L663.6,294.6ZM685.6,266.0L683.8,266.8L684.5,268.9L686.8,267.9ZM654.2,305.4L654.2,302.0L654.0,301.8L653.8,301.9L652.2,303.3L653.8,306.1L654.0,305.9ZM588.7,345.1L587.3,347.5L586.3,353.1L590.8,357.2L594.8,352.9L594.5,350.6L590.4,345.5ZM660.6,319.2L660.1,318.2L659.0,317.1L657.3,318.0L659.6,320.1ZM627.1,353.9L628.8,356.0L631.2,354.3L631.5,352.3L628.9,350.6L627.1,350.8L626.7,351.2ZM620.7,315.6L620.7,315.5L619.2,312.8L618.3,312.8L618.0,315.2ZM663.9,212.6L660.8,209.8L657.5,211.3L657.7,213.2L664.3,215.5L664.4,215.1ZM666.7,260.3L666.3,258.0L666.1,257.7L665.9,257.6L663.1,257.4L659.7,259.9L659.7,261.6L659.7,261.6ZM669.0,222.2L667.7,220.3L666.2,220.2L666.3,228.2L668.8,228.9ZM617.5,292.1L615.6,290.2L613.6,290.0L613.0,291.0L614.2,294.6L616.1,295.9L617.5,292.6ZM675.4,298.4L675.1,297.3L672.5,296.5L671.8,296.9L672.0,300.1L673.5,301.4ZM667.7,295.4L667.2,295.5L665.6,297.9L666.4,298.6L667.8,298.7ZM663.1,317.0L661.2,319.1L662.6,320.2L667.6,318.6ZM681.8,285.5L684.5,286.8L684.0,282.8L682.6,281.5L682.1,281.7L681.3,282.4L681.1,284.2ZM641.7,362.1L641.5,361.7L638.2,359.9L636.1,361.0L635.9,363.5L637.4,364.4L640.0,363.9ZM641.2,308.0L642.8,309.7L643.7,309.4L644.9,307.9L644.8,307.4L641.2,306.3ZM637.0,324.1L637.9,324.2L639.2,323.0L639.1,322.4L638.3,321.6L637.5,321.6L636.6,322.1L636.5,322.3L636.4,322.9ZM665.4,288.2L667.4,288.4L666.6,286.3L664.5,286.5L664.2,286.9L664.2,287.1ZM652.2,297.7L652.2,296.8L648.1,295.4L649.2,298.2L650.1,298.7L650.7,298.7ZM633.3,336.4L635.6,334.0L632.2,333.2L630.7,334.3L630.4,334.8ZM672.7,245.5L671.6,247.5L672.9,249.1L675.4,248.9L675.8,247.8L674.6,245.2ZM673.3,268.5L673.4,269.4L674.3,270.0L675.9,268.3ZM610.8,311.6L606.0,308.9L604.4,314.1L608.1,315.6L610.8,313.5L611.0,312.2ZM704.8,289.1L716.3,296.8L729.1,295.7L730.9,292.4L708.5,270.5L707.6,271.6L706.6,273.2L702.5,285.2ZM676.1,268.2L674.4,267.0L673.1,268.2L673.3,268.5L675.9,268.3ZM594.6,374.7L594.7,373.1L592.3,373.4L592.9,376.1ZM674.9,303.2L676.2,308.3L677.2,308.3L678.3,307.7L679.6,303.6L679.5,303.5L675.6,303.0ZM592.4,368.9L590.4,370.3L591.2,371.4L596.2,371.1L596.4,370.0ZM684.0,260.5L685.5,259.8L684.9,257.3L683.4,257.9ZM661.1,315.9L662.7,316.2L663.2,314.5L661.2,312.7L660.4,312.5L660.3,312.6ZM623.4,325.1L624.5,326.2L626.0,323.7L625.0,322.5L623.4,322.2ZM638.1,261.9L641.2,264.4L645.0,260.3L645.0,259.9L643.8,258.9L640.8,259.2ZM647.2,315.2L647.2,315.2L647.7,311.8L645.8,311.9L645.6,312.0L646.9,315.0ZM681.8,236.8L682.6,235.2L682.8,233.8L679.0,233.1L678.4,233.3L676.3,237.3L678.1,238.5ZM627.6,231.0L619.6,227.0L616.5,227.1L615.5,228.7L615.4,228.8L621.0,234.9L624.0,235.0L627.5,231.6ZM646.4,328.2L647.6,326.7L646.0,324.5L645.8,324.6L645.5,325.4L645.8,327.6ZM627.9,320.7L627.9,320.7L626.6,320.9L625.0,322.5L626.0,323.7L626.9,323.9L627.5,323.5ZM634.8,295.1L634.9,295.4L639.2,293.2L638.4,290.8L637.6,290.9L634.8,293.9ZM681.1,333.3L679.1,325.4L674.1,327.5L673.0,333.5L680.5,333.9ZM617.5,300.9L617.7,302.4L619.0,302.7L620.3,301.2L619.2,299.3ZM665.7,334.6L666.1,334.6L666.1,334.4L657.2,328.8L656.6,330.1L656.4,333.8ZM618.3,327.5L618.1,327.0L616.0,323.8L614.6,323.8L613.2,327.5L615.8,330.3L616.0,330.2ZM686.7,249.2L687.7,250.7L688.0,250.7L688.0,250.7L688.0,248.4ZM672.0,300.1L670.8,300.4L669.3,302.0L669.6,303.3L671.0,304.2L672.2,304.4L674.3,303.1L673.5,301.4ZM644.9,217.0L644.7,213.9L644.5,213.3L643.0,212.6L642.3,212.8L638.9,215.0L638.7,215.4L642.6,217.5ZM636.6,370.3L638.5,371.9L640.0,370.9L638.6,367.8L637.4,367.4L636.3,367.8ZM640.0,202.7L643.3,205.5L643.9,202.1L640.4,201.5L640.0,202.2ZM668.6,283.7L669.4,283.2L670.1,281.2L667.4,282.3L667.4,282.4L667.8,283.2ZM634.8,288.0L634.8,289.7L637.6,290.9L638.4,290.8L639.9,288.7L637.9,285.0L637.3,285.3ZM678.8,262.9L679.3,262.3L678.5,259.3L676.9,258.8L676.0,260.8L678.4,262.9ZM599.7,364.6L601.5,362.1L601.5,360.3L599.5,358.3L599.4,358.3L596.6,362.7L597.3,363.7L598.9,364.6ZM627.6,325.6L627.5,326.4L629.0,327.1L630.2,324.7L629.5,324.5ZM621.1,322.9L619.9,322.6L618.1,327.0L618.3,327.5L618.5,327.5L620.9,326.1L621.2,325.6ZM652.2,309.6L650.1,308.9L649.8,309.0L649.6,310.5L650.5,311.1L652.1,310.1L652.2,309.6ZM640.1,257.5L637.6,257.6L637.7,261.8L638.1,261.9L640.8,259.2ZM630.9,298.2L634.4,298.1L635.1,296.3L634.9,295.4L634.8,295.1L632.1,294.5L630.7,295.9L630.6,297.4ZM642.6,351.4L643.2,348.4L639.7,347.5L639.4,350.4L641.6,351.8L641.9,351.8ZM662.4,288.0L661.3,288.0L660.3,291.3L660.6,291.7L661.8,291.4L662.9,289.8ZM624.5,326.2L625.0,328.0L627.5,326.4L627.6,325.6L626.9,323.9L626.0,323.7ZM650.7,313.6L652.4,313.7L652.7,312.9L652.0,312.3L651.2,312.6ZM702.4,332.6L709.3,341.6L726.2,347.8L726.4,332.5L706.9,318.6L697.8,321.3L697.8,321.8ZM655.4,314.1L656.6,312.7L656.2,312.3L654.7,311.7L654.6,313.1ZM634.4,247.1L635.6,248.4L637.0,248.5L637.5,247.9L635.5,245.0L635.5,245.0ZM604.0,284.5L599.0,283.1L600.1,286.0L596.0,288.7L595.6,289.2L603.8,290.0L604.2,284.6ZM641.0,321.3L641.7,321.3L643.2,320.5L643.8,319.3L641.3,319.6L640.4,320.5L640.7,321.0ZM671.3,238.4L669.1,236.7L668.5,236.7L668.4,240.4L668.6,240.5L671.4,239.8ZM624.4,328.2L620.9,326.1L618.5,327.5L621.9,329.6ZM644.0,319.1L644.0,319.1L643.9,318.6L642.1,316.6L641.1,316.9L641.0,317.2L641.3,319.6L643.8,319.3ZM635.3,197.6L635.5,196.3L633.2,195.3L632.6,200.0L633.4,200.1ZM627.7,254.7L630.1,254.6L630.1,254.6L630.0,253.4L629.4,253.0L628.1,253.4ZM661.1,189.8L668.0,194.6L669.0,194.4L671.2,193.6L672.6,189.5L660.6,185.2ZM652.8,321.8L653.8,321.7L654.5,321.2L653.5,319.9L652.4,321.3ZM639.9,309.0L640.5,311.7L642.3,311.1L642.8,309.7L641.2,308.0ZM641.6,351.8L638.7,354.1L638.9,356.5L642.7,356.8L641.9,351.8ZM650.7,267.6L654.8,264.3L654.9,262.9L653.0,260.7L651.6,260.9L648.5,264.5ZM679.4,250.5L677.1,252.1L677.7,253.3L680.5,252.3ZM626.9,277.3L625.3,277.6L625.8,279.2L627.0,279.3L627.5,279.1ZM619.2,285.1L620.7,285.0L621.8,282.7L621.8,281.2L621.3,281.1L619.8,281.1L618.4,284.8ZM621.3,343.2L619.6,344.4L620.0,346.9L622.1,347.5L621.6,343.3ZM668.0,267.3L670.1,269.1L671.6,267.2L671.6,266.7L668.1,266.5L667.9,266.9ZM640.9,223.6L638.4,221.3L636.1,222.5L638.8,226.5L640.2,226.5L640.7,226.0ZM639.1,333.7L638.8,334.8L639.9,335.3L640.8,334.0L639.1,333.6ZM642.9,336.2L642.2,333.8L642.0,333.6L640.8,334.0L639.9,335.3L640.3,339.0L641.5,339.5ZM665.0,297.8L665.6,297.9L667.2,295.5L665.8,295.1L665.5,295.3L664.9,297.1ZM622.1,347.5L622.8,348.2L625.9,346.4L623.1,342.9L621.6,343.3ZM696.3,291.3L704.8,289.1L702.5,285.2L697.6,283.6L695.9,289.7ZM650.0,320.4L648.9,320.6L648.5,321.6L648.5,321.9L649.4,322.5L650.4,322.5L651.1,320.8ZM621.7,331.5L621.9,332.3L623.0,333.2L623.2,333.2L626.4,330.6L624.9,328.1L624.4,328.2L621.9,329.6ZM642.0,380.9L642.9,379.6L640.8,376.3L638.5,375.1L636.7,376.9L636.5,378.1ZM680.5,252.3L677.7,253.3L677.6,254.2L678.0,254.8L678.1,254.9L678.7,254.9L681.4,253.4L681.7,252.8L681.4,252.5ZM658.8,242.5L652.5,244.8L652.1,245.4L651.7,247.2L652.0,247.7L655.1,250.5L657.2,249.8L659.6,246.5L659.6,242.7ZM648.4,369.6L648.2,377.3L650.5,378.3L654.3,376.7L654.8,374.8L653.9,371.2ZM688.2,241.4L685.0,244.2L685.5,245.4L687.7,246.5L687.9,246.5L688.5,241.5ZM621.7,335.2L619.4,336.4L619.9,338.0L620.6,338.8L622.6,338.8L623.9,338.0ZM669.4,283.2L671.6,283.9L671.3,281.7L670.6,280.8L670.3,280.9L670.1,281.2ZM668.2,251.5L670.7,252.2L672.9,249.1L671.6,247.5L668.9,246.8L667.6,250.9ZM575.9,355.9L577.5,355.3L577.8,351.0L574.9,346.5L574.6,346.8L572.8,350.9L572.8,355.0L573.4,356.2ZM638.4,319.4L638.9,318.7L638.5,317.6L637.4,317.9L636.8,318.7ZM664.3,345.3L653.7,341.4L652.8,342.1L652.1,347.8L659.5,351.0ZM630.6,334.3L630.7,334.3L632.2,333.2L632.4,332.3L631.1,330.7L630.6,330.9ZM626.1,265.3L627.5,266.5L628.5,265.7L628.2,265.3L626.2,264.7L626.1,265.3ZM665.5,307.9L663.3,306.6L662.0,309.7L663.0,310.0L665.6,308.0ZM667.3,302.4L669.0,301.9L667.8,300.3L667.1,300.9ZM635.0,371.3L632.3,372.1L632.5,374.4L633.3,374.5L636.6,373.0ZM670.1,277.7L671.3,278.6L670.6,275.5L669.7,276.2ZM677.1,274.0L677.1,273.6L675.7,273.9L674.9,275.7L676.9,275.0ZM640.1,325.3L640.3,323.3L639.2,323.0L637.9,324.2L639.1,325.2ZM617.7,302.4L615.8,303.5L618.6,306.9L620.5,305.2L620.3,304.3L619.0,302.7ZM627.5,266.5L626.1,265.3L625.7,268.0L626.9,268.6L627.1,268.3ZM629.6,302.5L628.9,303.1L628.8,305.5L629.0,306.7L631.0,303.4L629.9,302.5ZM644.1,255.0L642.9,252.0L642.7,252.0L641.4,255.5L642.8,256.2ZM629.0,277.5L629.7,278.5L630.4,278.4L631.4,277.5L630.8,276.8L629.5,276.8ZM675.9,257.8L673.4,260.5L674.3,261.2L674.7,261.3L676.0,260.8L676.9,258.8L676.9,258.7ZM654.6,323.9L653.8,321.7L652.8,321.8L652.6,323.5ZM684.9,323.5L688.6,328.4L691.7,325.7L690.5,320.9L685.0,323.1ZM639.1,333.6L640.8,334.0L642.0,333.6L641.7,332.5L639.5,331.1ZM592.8,377.1L593.2,377.3L594.0,377.4L595.5,377.0L596.4,375.4L594.6,374.7L592.9,376.1ZM629.3,243.2L630.3,245.4L633.0,243.6L632.2,241.7L631.3,241.1L629.3,242.4ZM657.1,302.3L658.3,302.7L659.5,301.8L658.9,300.3L658.1,300.0L657.4,300.3ZM638.8,226.5L636.7,227.8L636.6,227.9L637.8,231.4L640.6,232.2L642.4,231.6L640.2,226.5ZM645.9,270.6L645.6,270.7L643.2,275.8L648.7,278.4L649.5,276.7L649.4,275.0L648.4,271.3ZM645.5,325.4L645.8,324.6L644.0,324.1L643.2,325.9L643.5,327.3ZM632.6,249.1L634.0,249.5L635.6,248.4L634.4,247.1L632.6,248.0L632.4,248.6ZM652.2,303.3L653.8,301.9L651.0,300.9L650.1,301.7L650.5,304.0ZM641.8,386.4L640.9,384.8L635.2,383.8L635.2,383.8L632.4,388.3L635.6,392.5ZM644.7,266.4L645.9,270.6L648.4,271.3L650.7,268.6L650.7,267.6L648.5,264.5L648.0,264.4ZM667.0,250.9L664.1,253.5L665.9,257.6L666.1,257.7L668.2,251.5L667.6,250.9ZM684.3,250.6L686.0,251.2L686.4,251.1L685.7,249.5L684.2,250.5ZM635.9,319.7L636.6,322.1L637.5,321.6L637.6,320.4L636.5,319.1ZM690.7,293.5L689.9,285.3L684.8,287.1L684.0,289.5L687.7,293.1ZM632.5,367.4L635.2,370.4L636.6,370.3L636.3,367.8ZM629.3,294.1L629.2,293.8L628.4,293.6L627.0,295.0L627.9,296.4L628.4,296.3ZM653.6,314.0L653.8,313.5L653.1,312.8L652.7,312.9L652.4,313.7L652.7,314.3L652.7,314.3ZM626.3,271.8L626.9,269.3L624.7,270.6L624.6,270.8L625.6,272.5L625.7,272.5ZM628.8,319.0L629.2,317.5L628.4,317.2L627.2,318.1ZM648.2,252.1L646.4,252.0L645.6,254.7L647.8,257.1L650.1,255.0ZM647.5,316.5L647.2,316.1L645.6,316.7L643.9,318.6L644.0,319.1L646.3,318.7L647.7,317.5ZM671.6,263.1L672.2,265.8L673.7,265.3L673.7,265.2L673.6,263.2ZM675.8,247.8L679.4,245.9L679.3,245.0L676.9,242.6L676.1,242.5L675.3,243.0L674.6,245.2ZM623.4,315.1L624.2,316.3L625.8,314.4L625.0,313.5L623.9,313.8ZM632.5,316.5L633.7,315.4L632.0,313.5L631.6,314.1L631.8,316.2L631.9,316.3ZM666.6,233.4L669.9,230.7L669.8,229.9L668.8,228.9L666.3,228.2L663.2,228.7L662.8,229.7L665.4,233.1ZM628.4,296.3L627.9,296.4L627.5,296.8L627.5,298.1L628.8,299.8L630.5,298.8L630.9,298.2L630.6,297.4ZM647.1,322.8L646.9,320.6L646.8,320.5L645.3,320.6L645.3,321.5L646.6,323.5ZM664.3,283.6L663.6,284.5L664.4,285.6L665.4,284.0L665.3,283.8ZM624.7,291.7L624.0,289.9L622.1,290.6L622.1,291.6ZM654.8,264.3L656.2,266.2L661.3,266.7L661.4,265.1L659.7,261.6L659.7,261.6L654.9,262.9ZM643.2,351.6L647.0,355.8L650.0,352.6L649.8,351.0ZM659.2,312.7L658.8,313.0L658.2,314.8L658.9,315.9L660.9,316.0L661.1,315.9L660.3,312.6ZM612.6,306.8L611.1,307.9L610.8,311.6L611.0,312.2L615.4,310.0ZM681.4,253.4L678.7,254.9L680.4,255.4L681.2,254.1ZM658.2,308.3L658.7,308.2L658.9,305.8L658.6,305.6L657.5,306.5L657.2,307.4ZM652.6,294.0L653.7,290.9L652.1,290.0L650.7,289.8L650.8,293.1L652.5,294.1ZM632.7,327.1L632.4,325.0L631.3,324.6L630.9,326.3L631.7,327.1ZM681.3,258.5L681.3,258.5L683.6,260.9L684.0,260.5L683.4,257.9L683.3,257.7ZM640.7,255.3L640.1,251.3L637.9,252.1L637.8,253.8L640.2,255.2ZM617.1,255.4L613.9,254.2L615.5,261.7L616.5,261.4ZM645.0,260.3L641.2,264.4L641.4,265.2L644.7,266.4L648.0,264.4ZM635.7,219.8L636.8,218.3L636.8,216.0L636.4,215.8L635.4,216.3L632.9,218.7ZM653.8,306.2L653.0,306.4L652.1,307.7L652.2,309.5L654.7,308.2L654.9,307.7ZM625.5,295.9L626.2,296.8L627.5,296.8L627.9,296.4L627.0,295.0L626.6,294.9ZM660.9,254.8L657.4,256.6L659.7,259.9L663.1,257.4ZM643.5,347.3L643.7,347.7L646.4,347.2L646.6,344.1L645.8,343.7L643.0,344.7ZM641.3,194.6L637.7,194.0L637.3,195.0L640.2,197.5L640.8,197.6L642.2,196.4ZM595.0,366.7L593.0,366.3L592.4,368.9L596.4,370.0L596.7,369.5ZM682.7,247.8L683.6,248.9L685.7,248.3L685.8,248.0L684.7,246.9L683.4,247.0ZM631.5,352.3L631.2,354.3L633.1,355.3L634.7,355.3L636.6,353.1L636.2,351.8L632.7,350.9ZM636.4,215.8L635.4,213.4L633.9,212.9L631.6,215.1L631.7,215.3L635.4,216.3ZM635.0,325.2L634.2,324.3L633.3,324.4L632.8,324.8L634.1,325.8L634.7,325.6ZM646.7,241.9L643.7,240.8L642.7,241.5L644.4,245.3L647.0,246.0ZM590.4,345.5L594.5,350.6L600.4,350.4L601.1,341.3ZM635.5,281.7L633.5,278.6L631.7,280.7L631.8,281.1L632.4,282.0L633.2,282.5ZM626.3,371.8L624.0,372.5L627.9,374.8L628.5,373.3ZM622.3,301.2L622.4,299.5L620.8,299.1L620.8,301.0ZM616.6,357.7L615.6,356.6L614.1,357.2L613.0,360.0L613.1,361.2L613.8,361.7L616.5,360.9L617.0,360.4ZM640.4,201.5L643.9,202.1L644.4,201.3L644.2,201.0L640.6,199.4L640.5,199.6ZM614.1,357.2L613.7,356.9L610.7,357.0L611.9,359.2L613.0,360.0ZM648.2,312.0L649.8,312.1L650.5,311.3L650.5,311.1L649.6,310.5L648.1,310.9L647.8,311.8ZM616.3,354.9L615.6,356.6L616.6,357.7L620.5,357.8L619.7,355.0L617.0,354.1ZM664.3,301.0L662.8,301.2L663.2,302.4L664.1,302.9L664.4,302.5L664.8,301.6ZM625.6,378.2L625.9,379.1L627.2,380.5L630.7,380.9L631.8,377.9L631.5,376.2L628.2,375.9ZM645.8,251.3L642.9,252.0L644.1,255.0L645.6,254.7L646.4,252.0ZM662.8,229.7L663.2,228.7L661.2,221.5L658.2,221.6L657.7,221.8L659.3,231.3ZM657.4,278.0L657.6,277.8L655.7,273.7L653.0,276.0ZM632.1,259.3L634.0,259.2L634.3,257.3L632.0,256.4L631.7,256.6L631.5,257.9ZM658.6,311.7L659.2,312.7L660.3,312.6L660.4,312.5L660.7,311.0L659.2,309.3L658.5,310.7ZM672.9,249.1L670.7,252.2L672.3,254.5L676.1,251.1L675.8,249.6L675.4,248.9ZM671.3,296.6L667.7,295.4L667.7,295.4L667.8,298.7L667.9,298.8L671.5,296.8ZM620.3,310.6L619.8,310.3L616.4,311.1L616.6,311.6L618.3,312.8L619.2,312.8L621.0,311.6ZM633.2,322.1L633.2,322.2L635.1,323.1L636.4,322.9L636.5,322.3L635.1,321.4L633.2,321.7ZM631.1,270.9L631.9,272.3L633.5,270.2L633.4,270.2L631.7,270.0ZM678.5,275.1L680.0,274.9L680.5,273.0L680.4,272.9L680.2,272.8L677.7,272.3L677.1,273.6L677.1,274.0ZM631.7,256.6L630.5,256.7L629.3,258.0L629.4,258.1L629.6,258.3L631.5,257.9ZM650.4,313.5L649.8,312.1L648.2,312.0L649.0,313.4ZM688.6,328.4L687.5,332.4L697.3,340.6L709.3,341.6L702.4,332.6L692.1,325.7L691.7,325.7ZM667.3,343.9L678.0,351.4L680.0,348.8L680.5,333.9L673.0,333.5L666.7,335.2ZM651.8,318.8L651.2,320.8L652.4,321.3L653.5,319.9L653.6,318.0L653.5,318.0L652.1,318.2ZM684.5,268.9L684.4,269.1L687.1,270.8L687.8,268.3L686.8,267.9ZM577.8,351.0L587.3,347.5L588.7,345.1L586.8,342.1L582.8,343.7L577.8,344.1L574.9,346.5ZM694.9,171.6L695.6,163.7L693.1,164.6L693.1,168.0L690.9,170.2ZM639.9,335.3L638.8,334.8L637.0,335.9L637.5,338.1L637.8,338.4L640.3,339.0ZM656.3,333.9L654.0,340.6L665.7,334.6L656.4,333.8ZM650.5,311.3L649.8,312.1L650.4,313.5L650.6,313.6L650.7,313.6L651.2,312.6ZM673.8,273.1L672.0,273.2L671.9,273.6L672.8,275.4L674.0,275.3ZM610.5,284.8L608.8,277.8L606.0,279.3L604.0,284.5L604.2,284.6L609.8,285.1ZM634.5,327.9L635.4,327.3L634.7,325.6L634.1,325.8L633.6,327.9L633.6,328.1ZM646.5,337.2L643.6,340.1L644.2,340.4L648.9,340.3L647.9,337.2ZM640.4,320.5L641.3,319.6L641.0,317.2L639.8,319.0L640.2,320.4ZM669.6,292.0L670.4,292.3L672.0,291.9L672.1,291.6L670.5,289.3L669.8,289.0ZM621.8,302.9L620.3,304.3L620.5,305.2L620.9,305.3L622.6,305.0L623.2,303.6ZM665.8,301.0L665.6,301.2L666.9,302.9L667.3,302.4L667.1,300.9ZM671.6,266.7L671.7,266.4L670.0,265.0L668.1,264.8L668.1,266.5ZM640.5,199.6L640.6,199.4L640.8,197.6L640.2,197.5L637.7,198.1L637.2,200.1ZM670.3,320.4L675.8,321.1L677.1,314.8L676.0,313.4L674.5,312.7L671.7,314.5L671.1,315.3L669.8,319.3ZM654.9,307.7L654.7,308.2L655.2,310.1L655.3,310.1L656.4,310.0L656.5,309.9L656.1,307.6ZM624.5,337.9L623.9,338.0L622.6,338.8L623.4,342.5L624.1,342.2L626.2,339.2ZM671.3,278.6L671.3,278.6L672.3,277.2L672.3,275.9L670.6,275.4L670.6,275.5ZM627.9,263.1L627.4,262.9L626.9,262.8L626.1,264.1L626.2,264.7L628.2,265.3ZM629.4,253.0L629.5,251.5L628.5,251.2L628.0,252.8L628.1,253.4ZM684.2,250.5L685.7,249.5L686.0,249.0L685.7,248.3L683.6,248.9L683.8,250.1ZM638.0,372.9L638.5,375.1L640.8,376.3L642.8,372.1L642.4,370.9L640.0,370.9L638.5,371.9ZM629.9,280.6L630.9,280.4L630.4,278.4L629.7,278.5L628.8,279.3ZM672.5,233.2L672.5,232.7L669.9,230.7L666.6,233.4L667.3,236.1L668.5,236.7L669.1,236.7L672.1,233.9ZM625.0,287.2L625.6,287.9L626.4,288.0L628.6,284.8L628.1,284.5L626.2,285.2L625.3,286.2L625.0,287.1ZM683.8,244.1L682.1,242.5L679.3,245.0L679.4,245.9L680.0,246.6L683.4,245.0ZM639.3,316.5L640.1,316.5L640.1,313.6L638.0,315.3ZM607.8,322.9L606.5,322.7L601.0,324.4L601.0,324.6L598.3,327.3L597.6,328.2L601.7,333.9L603.9,333.0L606.7,330.9L608.3,326.4ZM626.8,238.4L622.9,241.8L624.2,242.8L627.1,240.8ZM633.3,374.5L636.7,376.9L638.5,375.1L638.0,372.9L636.6,373.0ZM669.1,276.2L668.9,277.6L670.1,277.7L669.7,276.2ZM613.7,368.7L615.2,368.1L618.0,364.8L614.4,363.3L613.3,367.5ZM628.6,323.4L629.5,324.5L630.2,324.7L631.1,324.5L630.1,322.9L629.1,322.8ZM623.9,307.2L621.4,306.1L621.7,308.0L623.9,307.7ZM620.8,253.3L619.5,255.3L620.6,258.1L623.5,257.8L624.4,255.6L621.1,253.5ZM677.1,290.6L679.3,287.6L679.2,286.8L677.2,285.6L676.7,286.2L676.3,289.3ZM660.7,301.4L660.7,299.3L658.9,300.3L659.5,301.8L660.0,301.8ZM628.3,307.5L627.7,307.1L626.0,306.3L624.4,306.4L623.9,307.2L623.9,307.7L624.0,308.0L624.3,308.3L628.1,307.9ZM656.2,302.9L656.1,302.6L654.2,302.0L654.2,305.4L655.9,304.4ZM591.5,372.7L591.2,371.4L590.4,370.3L587.8,369.5L581.9,373.8L582.3,374.2L586.0,376.0L587.3,377.3ZM614.2,333.1L606.7,330.9L603.9,333.0L609.9,336.9L613.9,333.9ZM632.9,338.8L633.6,337.7L633.3,336.4L630.4,334.8L630.1,335.0L630.0,338.6L630.5,339.1ZM606.4,292.8L606.2,292.0L603.8,290.0L595.6,289.2L594.1,291.4L596.9,294.2L598.7,297.8L598.7,299.8ZM624.4,357.5L623.8,364.1L626.4,364.4L627.4,363.0L627.6,357.3ZM638.7,327.1L640.2,327.2L640.4,325.4L640.1,325.3L639.1,325.2L638.3,326.8ZM684.3,255.3L684.2,255.2L682.9,254.8L682.0,255.8L681.9,256.3L682.3,256.5ZM637.0,328.0L637.3,329.4L638.8,329.9L638.7,327.1L638.3,326.8L637.9,326.9ZM642.3,212.8L643.0,212.6L640.7,207.9L640.4,207.9L638.1,211.1L638.5,211.6ZM647.7,220.0L650.3,219.2L650.6,218.1L649.4,213.5L644.7,213.9L644.9,217.0L647.6,220.0ZM609.8,371.4L610.2,371.3L610.3,371.1L607.4,366.9L604.7,368.1L604.8,369.4ZM672.2,270.6L673.4,269.4L673.3,268.5L673.1,268.2L671.6,267.2L670.1,269.1L670.1,269.7L671.7,270.7ZM597.7,356.4L597.4,356.3L591.4,361.1L596.6,362.7L599.4,358.3ZM627.9,281.3L628.3,281.6L629.4,281.4L629.9,280.6L628.8,279.3L628.2,279.3ZM676.1,242.5L675.1,238.8L672.0,240.4L672.4,242.0L675.3,243.0ZM647.0,246.0L644.4,245.3L643.0,247.9L645.6,249.1L648.0,247.0ZM637.1,314.9L638.0,315.3L640.1,313.6L640.3,313.3L640.0,312.1L638.5,311.9ZM650.6,313.6L650.4,313.5L649.0,313.4L648.2,314.7L650.2,314.9L650.6,314.5ZM606.8,341.8L602.6,341.3L606.4,350.5L606.5,350.6L607.1,350.3L609.4,347.5ZM624.1,245.3L624.3,243.0L624.2,242.8L622.9,241.8L620.1,240.8L619.2,241.7L619.1,242.0L621.8,246.1ZM659.8,305.5L659.4,305.8L659.9,306.6L661.5,307.1L662.6,306.4ZM680.2,272.8L680.4,272.9L682.1,271.8L682.2,269.5L681.8,269.1L680.1,269.9ZM651.8,315.6L651.7,315.1L650.6,314.5L650.2,314.9L650.1,315.8L651.0,316.7ZM659.0,317.1L658.9,315.9L658.2,314.8L656.6,315.6L656.2,317.9L657.3,318.0ZM686.8,275.2L689.2,278.6L692.6,280.5L693.4,277.7L692.6,272.3L689.6,272.5ZM640.4,207.9L637.1,205.8L636.6,205.7L634.1,206.8L633.9,207.0L633.9,207.3L636.9,211.2L638.1,211.1ZM645.8,343.7L646.6,344.1L650.9,341.7L648.9,340.3L644.2,340.4ZM625.3,312.7L625.0,313.5L625.8,314.4L627.3,315.0L628.1,312.9L628.0,312.5L625.7,312.2ZM731.0,315.6L775.1,316.3L774.3,314.7L773.0,304.7L774.3,293.4L779.3,285.9L780.5,278.4L774.3,275.9L764.3,278.4L749.2,279.6L747.6,279.3L730.9,292.4L729.1,295.7ZM636.1,275.1L637.3,272.8L634.8,272.3L634.0,273.3L635.2,274.9ZM654.7,290.8L656.0,291.4L658.0,290.2L656.4,288.4L654.6,288.1ZM615.5,350.2L617.8,352.0L619.1,350.6L618.0,349.0ZM690.9,297.9L691.2,297.4L691.9,294.7L690.7,293.5L687.7,293.1L684.0,296.1L684.3,298.5ZM682.0,184.2L675.1,182.6L672.7,189.3L683.5,193.4L684.7,191.7ZM633.4,305.0L635.2,307.3L635.7,307.2L636.2,306.0L635.3,303.8L634.2,303.3ZM637.3,310.7L637.5,308.9L637.4,308.8L635.7,307.2L635.2,307.3L634.0,307.9L634.6,311.8ZM627.0,302.5L627.3,302.7L628.2,300.2L626.2,300.5ZM647.7,317.5L646.3,318.7L647.1,320.1L648.0,319.7L648.0,317.8ZM631.8,316.2L631.6,314.1L630.5,314.2L629.9,316.1ZM638.3,321.6L639.1,322.4L640.7,321.0L640.4,320.5L640.2,320.4L639.5,320.5ZM603.4,371.6L603.7,371.6L604.1,371.2L604.8,369.4L604.7,368.1L602.3,366.7L602.1,366.7L600.6,369.4L600.9,370.3ZM609.8,361.6L608.1,360.9L608.1,360.9L608.3,364.0L609.5,363.9ZM634.9,343.5L635.4,343.4L636.5,342.4L636.7,339.8L633.8,340.6L633.7,341.1ZM628.1,330.4L626.6,330.7L627.7,334.6L628.2,334.8L630.1,335.0L630.4,334.8L630.7,334.3L630.6,334.3L628.5,330.6ZM637.4,367.4L637.4,364.4L635.9,363.5L633.2,365.1L632.1,367.3L632.5,367.4L636.3,367.8ZM629.5,276.8L630.8,276.8L630.6,275.3L630.5,275.2L629.7,275.1L628.8,276.0ZM692.9,178.3L688.2,182.3L690.4,184.6L694.8,181.7L696.2,178.1ZM639.7,347.5L639.2,346.9L637.4,347.0L636.5,347.7L637.4,350.2L639.4,350.4ZM618.3,307.5L618.6,306.9L615.8,303.5L614.5,303.7L614.1,304.2L617.1,308.3ZM619.8,281.1L621.3,281.1L621.0,277.0L620.5,276.7L618.5,276.8L618.8,280.1ZM629.0,321.9L627.9,320.7L627.9,320.7L627.5,323.5L628.6,323.4L629.1,322.8ZM663.9,304.1L664.1,302.9L663.2,302.4L662.0,302.6L661.6,303.5L663.2,305.0ZM676.3,289.3L676.7,286.2L673.3,286.4L673.6,288.5ZM673.1,268.2L674.4,267.0L674.3,265.8L673.7,265.3L672.2,265.8L671.7,266.4L671.6,266.7L671.6,267.2ZM627.6,357.3L627.4,363.0L630.4,361.7L631.3,360.1L631.2,359.4L628.6,356.6ZM677.6,272.2L677.0,270.6L674.8,270.9L674.1,271.9L674.1,272.7ZM627.7,307.1L628.3,307.5L629.0,307.1L629.0,306.7L628.8,305.5L626.8,303.8L626.4,303.9ZM626.1,265.3L626.1,265.3L623.1,266.7L624.9,267.8L625.7,268.0ZM629.7,275.1L630.5,275.2L630.5,273.6L629.1,273.9L629.1,274.3ZM651.7,247.2L652.1,245.4L647.7,241.7L646.7,241.9L647.0,246.0L648.0,247.0ZM632.9,261.7L632.0,261.5L631.2,262.8L632.6,263.5ZM623.4,342.5L623.1,342.9L625.9,346.4L626.2,346.4L628.2,345.5L628.5,343.4L628.2,343.0L624.1,342.2ZM688.0,250.7L689.0,250.2L688.2,248.1L688.0,248.4ZM619.8,310.3L619.1,308.1L618.3,307.5L617.1,308.3L615.8,310.1L616.4,311.1ZM634.4,237.6L634.4,236.4L629.6,237.6L631.2,240.6ZM649.6,310.5L649.8,309.0L647.7,308.7L647.5,309.0L648.1,310.9ZM644.1,304.5L646.2,302.2L646.2,301.5L645.0,299.9L643.0,298.2L640.6,301.7L640.6,302.0L641.6,304.5ZM671.6,272.7L669.3,272.8L669.7,274.3L670.5,274.9L671.9,273.6L672.0,273.2ZM631.5,376.2L631.8,377.9L636.0,378.5L636.5,378.1L636.7,376.9L633.3,374.5L632.5,374.4L632.1,374.9ZM598.1,378.9L595.5,377.0L594.0,377.4L595.8,380.6ZM626.3,339.2L627.0,338.8L628.2,334.8L627.7,334.6L625.1,335.5L624.5,337.9L626.2,339.2ZM625.1,299.5L623.6,298.2L622.4,299.5L622.3,301.2L622.5,301.4L624.5,301.7L625.4,300.3ZM621.9,311.8L622.7,311.1L622.5,309.6L621.5,308.6L621.1,308.7L620.3,310.6L621.0,311.6ZM650.7,267.6L650.7,268.6L655.4,270.5L656.2,266.2L654.8,264.3ZM626.2,298.4L625.9,297.3L623.6,297.7L623.6,298.0L623.6,298.2L625.1,299.5ZM662.6,306.4L661.5,307.1L661.0,307.9L661.5,309.8L662.0,309.7L663.3,306.6L663.0,306.3L662.9,306.3ZM668.5,212.6L664.4,215.1L664.3,215.5L664.7,219.7L666.2,220.2L667.7,220.3L671.1,218.2L672.0,214.5ZM668.8,292.0L667.1,290.0L665.8,290.5L665.7,290.7L665.9,292.2L667.2,292.6L668.7,292.2ZM618.9,375.6L616.2,379.2L621.2,382.4L625.9,379.1L625.6,378.2L621.0,374.4ZM680.7,282.1L679.3,280.1L678.3,280.4L678.9,282.4ZM680.0,301.3L679.5,303.5L679.6,303.6L682.0,304.5L684.9,302.7L684.0,299.3ZM626.7,257.8L625.7,259.2L626.0,259.4L627.9,259.8L628.4,258.6ZM680.1,279.1L682.1,281.7L682.6,281.5L682.8,281.0L681.5,277.6L680.6,277.6ZM643.8,333.2L642.2,333.8L642.9,336.2L645.1,335.6L645.9,334.4L645.4,333.7ZM621.7,335.2L623.0,333.2L621.9,332.3L616.9,334.1L617.2,334.6L619.4,336.4ZM652.3,394.9L649.5,386.2L644.1,388.0L645.4,397.5ZM628.0,309.7L630.6,310.7L631.2,308.1L629.2,307.1L629.0,307.1L628.3,307.5L628.1,307.9L627.8,309.3ZM673.5,283.2L673.4,281.8L671.3,281.7L671.6,283.9L672.2,284.6ZM659.1,297.8L660.7,299.1L661.5,298.9L661.8,296.7L659.1,295.9ZM616.8,346.7L615.2,347.2L614.6,350.1L615.5,350.2L618.0,349.0L617.7,347.5ZM623.8,283.1L625.0,283.6L625.9,282.8L625.7,281.6L624.5,280.7L623.4,280.7ZM615.0,332.8L615.8,330.3L613.2,327.5L608.3,326.4L606.7,330.9L614.2,333.1ZM681.8,269.0L681.9,268.5L681.3,267.4L680.1,267.4L680.0,268.0ZM672.3,277.2L671.3,278.6L671.3,278.6L671.5,279.1L673.0,279.4L674.5,278.3L675.2,277.4L675.0,277.0ZM648.9,305.4L650.2,307.3L652.1,307.7L653.0,306.4L650.1,304.8ZM659.1,297.8L659.1,295.9L658.7,295.2L657.2,295.1L656.1,296.0L655.8,297.9L656.1,298.3L658.5,298.2ZM639.0,240.2L635.3,239.5L634.4,240.9L635.8,242.1L639.5,240.9ZM672.3,292.2L673.3,294.8L675.8,293.8L676.0,292.3ZM652.2,309.6L652.1,310.1L652.5,310.8L653.8,311.6L654.7,311.7L655.3,310.1L655.2,310.1ZM648.2,312.0L647.8,311.8L647.7,311.8L647.2,315.2L648.2,314.7L649.0,313.4ZM662.7,235.1L665.4,233.1L662.8,229.7L659.3,231.3L658.4,232.2L658.6,233.0ZM648.1,201.2L649.9,203.7L650.1,203.8L653.4,199.4L651.6,197.0L648.3,198.4ZM626.3,371.8L628.5,373.3L628.8,373.2L630.6,368.5L630.6,368.3ZM612.4,346.0L612.4,344.6L611.4,342.0L610.1,341.2L606.8,341.8L609.4,347.5L611.7,346.8ZM604.2,284.6L603.8,290.0L606.2,292.0L609.8,285.1ZM648.7,283.9L647.7,285.4L647.6,286.1L650.7,289.8L652.1,290.0L654.5,288.0L653.7,286.1ZM629.6,266.8L629.1,265.7L628.5,265.7L627.5,266.5L627.1,268.3L628.5,267.9ZM609.7,298.7L609.5,296.7L607.0,293.0L606.4,292.8L598.7,299.8L598.7,301.1ZM663.6,294.6L664.4,295.3L665.5,295.3L665.8,295.1L665.3,293.4L665.2,293.4L664.3,293.3ZM658.7,295.2L659.1,295.9L661.8,296.7L661.9,296.6L662.3,295.4L660.3,293.0ZM654.3,237.7L648.5,232.8L647.9,233.1L649.3,239.8L652.5,240.6L654.3,238.3ZM667.7,275.5L669.7,274.3L669.3,272.8L667.9,271.5L667.8,271.5L666.6,273.9L666.6,274.8L667.0,275.5ZM645.9,330.4L645.4,333.7L645.9,334.4L649.6,333.9L649.9,333.8L649.9,333.8L649.6,332.5L646.5,330.2ZM638.1,261.9L637.7,261.8L637.6,261.8L636.0,264.5L636.2,267.4L636.8,268.1L641.2,265.6L641.4,265.2L641.2,264.4ZM670.1,269.1L668.0,267.3L665.7,270.0L667.8,271.5L667.9,271.5L670.1,269.7ZM662.9,289.8L661.8,291.4L662.9,291.7L665.7,290.7L665.8,290.5L665.5,290.1L664.0,289.2ZM617.1,344.4L616.9,344.0L616.7,343.9L612.4,344.6L612.4,346.0L615.2,347.2L616.8,346.7ZM656.1,296.0L652.8,295.3L652.2,296.8L652.2,297.7L653.3,298.5L655.8,297.9ZM630.0,271.3L629.8,271.9L631.0,273.0L631.9,273.1L631.9,272.3L631.1,270.9ZM644.7,315.0L645.5,314.6L644.7,313.0L643.5,314.0ZM655.6,321.2L656.1,320.3L655.7,318.4L653.6,318.0L653.5,319.9L654.5,321.2ZM626.9,255.4L627.0,255.7L628.1,256.3L629.9,256.0L630.1,254.6L627.7,254.7ZM634.0,259.2L635.1,260.8L635.5,261.1L637.6,261.8L637.7,261.8L637.6,257.6L637.2,257.0L636.1,256.0L635.8,256.0L634.3,257.3ZM685.4,232.1L685.3,232.0L683.6,228.8L682.1,225.7L678.4,230.3L679.0,233.1L682.8,233.8ZM613.7,350.9L613.7,351.1L617.0,354.1L617.8,352.0L615.5,350.2L614.6,350.1ZM633.2,317.4L632.5,316.5L631.9,316.3L631.2,317.5L631.4,319.2L632.5,319.4L633.3,318.3ZM627.3,302.7L627.5,302.9L628.9,303.1L629.6,302.5L628.7,299.9L628.2,300.2ZM624.6,309.3L624.4,310.3L625.6,310.9L627.5,309.4ZM628.1,307.9L624.3,308.3L624.6,309.3L627.5,309.4L627.8,309.3ZM664.0,275.8L664.3,275.2L662.0,272.6L662.0,272.6L661.6,277.6ZM667.7,275.5L667.0,275.5L666.9,275.7L667.3,276.8L668.8,277.6L668.9,277.6L669.1,276.2ZM634.3,257.3L635.8,256.0L634.2,253.9L632.8,253.6L631.9,254.7L632.0,256.4ZM636.1,299.9L641.9,296.8L635.1,296.3L634.4,298.1L634.9,299.3ZM615.3,298.2L613.6,299.4L614.5,303.7L615.8,303.5L617.7,302.4L617.5,300.9ZM601.4,335.0L601.7,333.9L597.6,328.2L595.5,331.0L592.8,335.5L592.3,336.3ZM670.6,275.5L670.6,275.4L670.5,274.9L669.7,274.3L667.7,275.5L669.1,276.2L669.7,276.2ZM652.1,318.2L653.5,318.0L653.5,316.2L651.8,315.6L651.0,316.7L651.2,317.4ZM609.8,275.4L603.7,273.0L599.6,279.0L606.0,279.3L608.8,277.8ZM642.7,356.8L642.9,357.1L646.6,356.9L647.0,355.8L643.2,351.6L642.6,351.4L641.9,351.8ZM600.6,369.4L602.1,366.7L599.7,364.6L598.9,364.6L597.3,369.1ZM680.0,268.0L680.1,267.4L679.8,266.8L679.1,266.4L678.7,266.6L678.4,267.2L679.1,269.0ZM630.5,256.7L629.9,256.0L628.1,256.3L629.3,258.0ZM670.5,289.3L672.1,291.6L672.7,290.6L673.0,289.2L672.2,289.0ZM652.1,245.4L652.5,244.8L652.5,240.6L649.3,239.8L647.7,241.7ZM661.3,282.2L656.4,280.3L655.8,280.9L657.1,284.5L660.3,284.2L661.1,283.2ZM636.2,306.0L635.7,307.2L637.4,308.8L639.7,306.2L637.9,305.2ZM624.0,372.5L622.8,372.5L621.9,372.8L621.0,374.4L625.6,378.2L628.2,375.9L627.9,374.8ZM692.2,314.3L704.0,309.4L704.8,306.6L696.2,305.7L692.9,308.8L692.4,310.1ZM632.2,246.8L633.5,244.1L633.0,243.6L630.3,245.4L630.2,245.7ZM663.2,302.4L662.8,301.2L662.5,300.9L661.4,301.5L662.0,302.6ZM630.8,268.5L630.7,268.8L631.7,270.0L633.4,270.2L632.8,267.1L632.7,267.1ZM630.8,264.9L630.2,264.6L629.1,265.7L629.6,266.8L629.9,267.0L630.9,266.5ZM675.4,298.4L673.5,301.4L674.3,303.1L674.9,303.2L675.6,303.0L677.3,299.6ZM630.0,264.0L628.7,263.3L627.9,263.1L628.2,265.3L628.5,265.7L629.1,265.7L630.2,264.6ZM670.3,287.4L669.4,285.2L668.8,285.0L668.1,285.8L669.5,288.2ZM679.4,249.6L679.4,250.5L680.5,252.3L681.4,252.5L681.9,250.8L681.9,250.8L679.5,249.5ZM594.7,373.1L594.6,374.7L596.4,375.4L597.3,374.7L597.6,373.2L596.4,371.7ZM692.9,308.8L696.2,305.7L695.8,303.4L690.5,301.3L689.8,302.4ZM657.3,318.0L656.2,317.9L655.7,318.4L656.1,320.3L659.2,321.0L659.6,320.1ZM620.6,338.8L619.9,341.2L621.3,343.2L621.6,343.3L623.1,342.9L623.4,342.5L622.6,338.8ZM706.9,318.6L705.2,315.7L694.1,316.0L697.8,321.3ZM640.1,313.6L640.1,316.5L641.1,316.9L642.1,316.6L642.2,316.5L642.3,314.7L640.3,313.3ZM634.2,303.3L635.3,303.8L636.8,302.9L637.6,301.4L636.1,299.9L634.9,299.3L633.6,302.0L633.6,302.5ZM620.7,358.1L620.2,360.3L622.1,364.4L623.8,364.1L624.4,357.5L624.2,357.4ZM657.7,309.2L658.5,310.7L659.2,309.3L658.9,308.3L658.7,308.2L658.2,308.3ZM686.6,306.2L686.4,303.5L684.9,302.7L682.0,304.5L682.3,308.0L683.4,309.4ZM650.5,304.0L650.1,301.7L648.0,301.2L646.2,301.5L646.2,302.2L648.4,305.2L648.7,305.4L648.9,305.4L650.1,304.8ZM630.7,321.6L630.7,321.5L630.3,320.0L628.9,319.8L627.9,320.7L629.0,321.9ZM626.9,268.6L625.7,268.0L624.9,267.8L624.0,269.7L624.7,270.6L626.9,269.3L627.0,269.3L627.0,269.2ZM576.4,363.3L579.7,365.3L583.2,361.4L582.1,357.5L577.5,355.3L575.9,355.9ZM632.7,363.8L633.2,365.1L635.9,363.5L636.1,361.0L635.0,360.3L633.3,360.8ZM632.5,367.4L632.1,367.3L630.6,368.0L630.6,368.3L630.6,368.5L632.3,372.1L635.0,371.3L635.2,370.4ZM632.8,307.9L634.0,307.9L635.2,307.3L633.4,305.0L632.6,305.3ZM629.6,328.3L628.1,330.4L628.5,330.6L630.6,330.9L631.1,330.7L631.9,329.4L630.4,328.5ZM629.9,261.5L628.7,263.3L630.0,264.0L630.8,262.9ZM671.1,315.3L671.7,314.5L670.7,312.6L667.3,309.6L666.8,309.7L666.1,311.5ZM633.4,277.7L633.6,277.9L635.3,277.6L636.5,276.5L636.1,275.1L635.2,274.9L633.4,276.8ZM648.7,305.4L647.7,308.7L649.8,309.0L650.1,308.9L650.2,307.3L648.9,305.4ZM674.8,270.9L674.3,270.0L673.4,269.4L672.2,270.6L674.1,271.9ZM666.6,274.8L664.3,275.2L664.0,275.8L665.3,277.4L666.9,275.7L667.0,275.5ZM632.8,267.1L633.0,266.9L632.8,265.1L630.8,264.9L630.9,266.5L632.7,267.1ZM636.2,267.4L636.0,264.5L633.0,264.7L632.8,265.1L633.0,266.9ZM631.1,260.1L632.1,259.3L631.5,257.9L629.6,258.3L630.5,260.1ZM676.0,260.8L674.7,261.3L675.9,263.7L676.7,264.0L677.5,263.7L678.4,262.9ZM658.6,305.6L658.9,305.8L659.4,305.8L659.8,305.5L660.3,304.5L660.3,304.1L658.6,303.7L658.2,304.8ZM628.8,284.9L629.1,285.1L630.9,285.2L631.0,285.2L631.4,283.0L630.0,282.5ZM654.4,254.8L655.1,250.5L652.0,247.7L648.2,252.1L650.1,255.0ZM673.0,279.4L673.9,280.9L675.9,281.1L674.5,278.3ZM674.7,275.9L674.0,275.3L672.8,275.4L672.3,275.9L672.3,277.2L675.0,277.0ZM622.3,318.2L620.8,317.8L619.4,318.8L622.6,322.2L623.2,322.1L623.3,321.4ZM625.8,279.2L624.5,280.7L625.7,281.6L626.7,281.2L627.0,279.3ZM679.8,311.4L677.2,308.3L676.2,308.3L674.7,309.8L674.5,312.7L676.0,313.4ZM611.7,346.8L609.4,347.5L607.1,350.3L608.2,350.6L612.7,349.9ZM632.6,305.3L633.4,305.0L634.2,303.3L633.6,302.5L631.6,303.6L631.8,305.0ZM640.2,255.2L637.8,253.8L636.1,256.0L637.2,257.0ZM631.1,251.2L628.6,248.1L628.3,248.0L628.4,251.1L628.5,251.2L629.5,251.5ZM615.8,316.9L614.9,316.5L610.2,321.3L611.3,321.7L617.8,319.5ZM640.6,302.0L640.6,301.7L637.6,301.4L636.8,302.9L638.1,304.5ZM640.8,376.3L642.9,379.6L647.9,377.3L642.8,372.1ZM605.4,306.3L606.0,308.9L610.8,311.6L611.1,307.9ZM619.4,318.8L617.8,319.5L617.9,321.2L619.9,322.6L621.1,322.9L622.6,322.2ZM630.1,322.9L630.7,321.7L630.7,321.6L629.0,321.9L629.1,322.8ZM621.2,382.4L621.7,383.2L625.6,383.8L627.2,380.5L625.9,379.1ZM629.6,258.3L629.4,258.1L628.4,258.6L627.9,259.8L628.0,260.1L629.1,260.8L629.8,260.8L630.5,260.1ZM626.5,262.1L626.5,262.2L626.9,262.8L627.4,262.9L629.1,260.8L628.0,260.1ZM628.2,311.3L630.8,311.5L630.6,310.7L628.0,309.7ZM665.7,270.0L662.1,269.1L662.1,272.1L666.6,273.9L667.8,271.5ZM599.6,279.0L603.7,273.0L602.6,271.4L596.7,271.7L596.9,273.2L594.6,276.9L596.0,280.5L596.4,280.8ZM669.0,301.9L669.3,302.0L670.8,300.4L668.0,299.2L667.8,300.3ZM645.0,330.4L643.8,333.2L645.4,333.7L645.9,330.4ZM663.2,228.7L666.3,228.2L666.2,220.2L664.7,219.7L661.2,221.5ZM605.7,362.1L606.3,360.7L605.5,359.6L601.5,360.3L601.5,362.1L604.7,363.5ZM666.7,335.2L673.0,333.5L674.1,327.5L668.6,324.1L666.2,326.8L665.8,327.9L666.1,334.4L666.1,334.6ZM631.8,377.9L630.7,380.9L630.9,381.3L635.2,383.8L635.2,383.8L636.0,378.5ZM615.8,310.1L617.1,308.3L614.1,304.2L613.0,304.7L612.6,306.8L615.4,310.0ZM678.7,266.6L678.0,266.2L676.3,266.4L676.2,268.2L676.4,268.4L678.4,267.2ZM645.9,334.4L645.1,335.6L646.5,337.2L647.9,337.2L649.6,333.9ZM579.7,365.3L576.4,363.3L566.6,362.6L568.7,366.0L572.3,368.7L575.9,371.0L579.0,371.3ZM679.7,264.4L678.8,262.9L678.4,262.9L677.5,263.7L678.0,266.2L678.7,266.6L679.1,266.4ZM631.9,254.7L632.8,253.6L631.9,251.6L630.0,253.4L630.1,254.6ZM666.1,257.7L666.3,258.0L672.4,255.5L672.5,255.4L672.3,254.5L670.7,252.2L668.2,251.5ZM676.1,265.9L674.3,265.8L674.4,267.0L676.1,268.2L676.2,268.2L676.3,266.4ZM675.8,321.1L677.6,322.0L683.1,316.1L677.1,314.8ZM609.9,336.9L603.9,333.0L601.7,333.9L601.4,335.0L601.7,340.8L602.6,341.3L606.8,341.8L610.1,341.2L610.3,340.4ZM620.3,301.2L619.0,302.7L620.3,304.3L621.8,302.9L622.5,301.4L622.3,301.2L620.8,301.0ZM646.6,356.9L642.9,357.1L641.5,361.7L641.7,362.1L646.5,364.5L646.9,357.3ZM652.3,323.7L652.6,323.5L652.8,321.8L652.4,321.3L651.2,320.8L651.1,320.8L650.4,322.5L650.6,322.7ZM602.9,379.5L600.0,381.1L600.5,385.8L607.8,387.0L608.1,386.3L603.6,379.6ZM628.1,271.8L628.4,272.4L628.7,272.5L629.8,271.9L630.0,271.3L629.5,270.5L627.8,270.2ZM626.0,259.4L626.5,262.1L628.0,260.1L627.9,259.8ZM612.5,352.5L612.1,352.6L610.5,354.8L612.7,355.6L613.3,353.9ZM676.1,251.1L672.3,254.5L672.5,255.4L672.6,255.5L677.6,254.2L677.7,253.3L677.1,252.1ZM628.7,299.9L629.6,302.5L629.9,302.5L631.6,301.2L630.5,298.8L628.8,299.8ZM621.7,383.2L621.2,382.4L616.2,379.2L613.9,380.2L618.6,387.4L621.4,387.4ZM630.5,290.0L631.6,288.5L631.2,287.9L629.2,287.8L628.6,288.6L630.0,290.2ZM690.5,301.3L695.8,303.4L696.6,301.0L691.2,297.4L690.9,297.9ZM629.3,258.0L628.1,256.3L627.0,255.7L626.7,257.8L628.4,258.6L629.4,258.1ZM648.4,319.9L648.0,319.7L647.1,320.1L646.8,320.5L646.9,320.6L648.5,321.6L648.9,320.6ZM648.4,319.9L648.9,320.6L650.0,320.4L649.7,319.0L649.5,319.0ZM624.5,259.1L623.8,260.8L624.9,261.9L626.5,262.2L626.5,262.1L626.0,259.4L625.7,259.2ZM650.5,331.1L653.1,329.6L653.2,328.5L652.0,326.5L651.7,326.4L649.8,327.3ZM625.6,272.5L624.6,270.8L623.1,271.5L622.9,273.0L624.2,273.2L625.5,272.6ZM621.1,249.9L621.8,246.1L619.1,242.0L618.7,242.7L619.7,249.1L621.0,249.9ZM694.1,316.0L705.2,315.7L704.0,309.4L692.2,314.3L692.1,314.5ZM633.0,284.9L632.6,285.2L633.2,287.4L634.8,288.0L637.3,285.3ZM654.8,374.8L654.3,376.7L662.0,380.8L665.7,379.1L661.6,370.5ZM656.2,299.5L654.0,301.5L654.0,301.8L654.2,302.0L656.1,302.6L657.1,302.3L657.4,300.3ZM650.0,352.6L652.1,354.4L659.3,353.6L659.5,351.0L652.1,347.8L650.2,349.4L649.8,351.0ZM630.7,268.8L630.8,268.5L629.9,267.0L629.6,266.8L628.5,267.9L630.3,268.9ZM667.6,288.8L667.1,290.0L668.8,292.0L669.6,292.0L669.8,289.0L669.4,288.4ZM686.5,262.6L687.9,264.4L688.1,264.4L689.6,262.4L689.3,261.2L688.7,260.3L687.6,260.1ZM663.3,296.8L664.8,297.8L664.8,297.8L665.0,297.8L664.9,297.1L664.1,296.0L663.6,296.1ZM667.6,208.4L666.9,208.3L663.9,212.6L664.4,215.1L668.5,212.6L668.6,209.6ZM655.3,310.1L654.7,311.7L654.7,311.7L656.2,312.3L656.7,310.4L656.4,310.0ZM624.6,302.5L624.7,302.8L625.0,303.6L625.6,303.9L626.4,303.9L626.8,303.8L627.5,302.9L627.3,302.7L627.0,302.5ZM661.3,288.0L662.4,288.0L664.1,286.9L662.8,286.2L660.5,286.6L660.5,286.7ZM682.1,271.8L680.4,272.9L680.5,273.0L681.3,273.6L685.0,274.0L684.9,272.6L684.2,271.9ZM625.0,283.6L624.9,284.0L626.2,285.2L628.1,284.5L627.8,284.0L625.9,282.8ZM655.8,292.8L657.2,295.1L658.7,295.2L660.3,293.0L660.4,292.4L660.6,291.7L660.3,291.3L658.2,290.2L658.0,290.2L656.0,291.4ZM603.7,371.6L604.8,374.4L606.7,374.5L608.3,372.3L604.1,371.2ZM598.1,378.9L595.8,380.6L594.4,383.5L596.0,385.0L600.0,385.7L600.5,385.8L600.0,381.1L598.9,378.8ZM672.4,237.3L672.1,233.9L669.1,236.7L671.3,238.4ZM621.6,269.5L621.5,269.0L617.6,269.6L617.5,269.7L617.5,270.8L620.6,271.0ZM643.8,258.9L642.8,256.2L641.4,255.5L641.1,255.5L640.1,257.5L640.8,259.2ZM638.6,282.7L639.1,281.4L635.3,277.6L633.6,277.9L633.5,278.6L635.5,281.7L638.6,282.7ZM634.6,311.8L634.0,307.9L632.8,307.9L631.9,308.2L632.9,312.3L634.3,312.2ZM676.2,268.2L676.1,268.2L675.9,268.3L674.3,270.0L674.8,270.9L677.0,270.6L677.2,269.9L676.4,268.4ZM672.5,285.7L672.9,285.9L676.4,283.4L676.4,283.4L673.5,283.2L672.2,284.6L672.1,284.8ZM656.1,307.6L656.5,309.9L657.7,309.2L658.2,308.3L657.2,307.4L656.6,307.4ZM607.1,350.3L606.5,350.6L606.5,351.4L609.6,355.2L610.5,354.8L612.1,352.6L608.2,350.6ZM637.4,317.9L635.9,315.2L635.4,316.3L635.5,317.7L636.6,318.8L636.8,318.7ZM667.9,294.9L670.3,293.8L670.4,292.3L669.6,292.0L668.8,292.0L668.7,292.2ZM631.8,322.9L633.2,322.1L633.2,321.7L633.0,321.2L630.7,321.5L630.7,321.6L630.7,321.7ZM619.3,261.3L620.6,258.1L619.5,255.3L617.1,255.4L616.5,261.4ZM641.7,339.8L643.6,340.1L646.5,337.2L645.1,335.6L642.9,336.2L641.5,339.5ZM656.4,288.4L658.0,290.2L658.2,290.2L659.0,287.4L657.1,285.7ZM629.6,218.8L630.9,218.8L631.5,218.5L631.7,215.3L631.6,215.1L628.1,213.2L627.3,214.7ZM625.2,319.3L626.6,320.9L627.9,320.7L626.5,318.2L625.4,317.7L625.2,317.7ZM643.2,296.3L642.7,296.9L643.0,298.2L645.0,299.9L649.2,298.2L648.1,295.4L647.7,295.0L643.7,296.0ZM623.1,266.7L622.3,266.4L621.6,267.1L621.5,269.0L621.6,269.5L621.9,269.7L624.0,269.7L624.9,267.8ZM649.9,203.7L643.9,206.2L646.7,209.9L652.0,208.9L652.8,208.0L652.8,207.3L650.1,203.8ZM659.8,242.5L660.9,239.6L657.8,235.3L654.3,237.7L654.3,238.3L658.8,242.5L659.6,242.7ZM620.6,271.0L617.5,270.8L615.7,274.5L620.8,272.7ZM628.6,288.6L627.3,288.7L627.1,290.4L629.4,290.8L629.7,290.7L630.0,290.2ZM628.8,276.0L629.7,275.1L629.1,274.3L627.2,275.4L627.6,276.1ZM641.1,306.1L639.7,306.2L637.4,308.8L637.5,308.9L639.9,309.0L641.2,308.0L641.2,306.3ZM664.0,289.2L665.5,290.1L665.4,288.2L664.2,287.1ZM677.6,322.0L679.2,325.0L684.9,323.5L685.0,323.1L684.3,315.6L683.1,316.1ZM643.2,351.6L649.8,351.0L650.2,349.4L646.4,347.2L643.7,347.7L643.2,348.4L642.6,351.4ZM627.1,290.4L627.3,288.7L626.4,288.0L625.6,287.9L625.0,289.0L626.1,291.9ZM630.2,245.7L630.3,245.4L629.3,243.2L627.4,245.7L627.4,247.4L628.0,247.6ZM629.5,270.5L630.0,271.3L631.1,270.9L631.7,270.0L630.7,268.8L630.3,268.9L630.0,269.3ZM633.0,331.7L632.4,332.3L632.2,333.2L635.6,334.0L635.7,334.0L636.0,333.2L635.3,331.3ZM638.4,319.8L639.5,320.5L640.2,320.4L639.8,319.0L638.9,318.7L638.4,319.4ZM668.6,324.1L674.1,327.5L679.1,325.4L679.2,325.0L677.6,322.0L675.8,321.1L670.3,320.4ZM635.0,360.3L634.7,359.0L633.3,358.1L631.2,359.4L631.3,360.1L633.3,360.8ZM683.6,261.0L683.6,260.9L681.3,258.5L680.7,259.9L681.1,261.4ZM643.0,247.9L640.9,248.3L640.9,250.6L642.7,252.0L642.9,252.0L645.8,251.3L645.6,249.1ZM682.0,304.5L679.6,303.6L678.3,307.7L682.3,308.0ZM673.6,263.2L673.7,265.2L675.7,263.8L673.6,263.1ZM634.8,272.3L634.2,270.5L633.5,270.2L631.9,272.3L631.9,273.1L632.4,273.5L633.2,273.7L634.0,273.3ZM662.3,295.4L661.9,296.6L662.6,296.9L663.3,296.8L663.6,296.1L662.9,295.2ZM629.0,228.5L627.6,231.0L627.5,231.6L630.5,233.8L632.8,233.2L632.7,229.8L631.9,229.1ZM671.8,296.9L671.5,296.8L667.9,298.8L668.0,299.2L670.8,300.4L672.0,300.1ZM637.4,344.9L637.4,347.0L639.2,346.9L640.0,345.5L640.3,343.0L640.0,343.0ZM648.6,324.4L648.6,324.4L648.9,326.8L649.7,327.3L649.8,327.3L651.7,326.4L651.6,325.9L650.0,324.5ZM636.9,211.2L633.9,207.3L632.1,210.3L633.9,212.9L635.4,213.4ZM656.7,310.4L656.2,312.3L656.6,312.7L658.8,313.0L659.2,312.7L658.6,311.7ZM607.5,366.7L607.5,366.6L607.8,364.5L605.7,362.1L604.7,363.5L604.7,363.7ZM643.2,275.8L645.6,270.7L641.4,270.9L639.7,272.4L640.8,275.7ZM631.5,218.5L630.9,218.8L631.6,223.1L634.0,222.5L632.9,218.8ZM630.5,275.2L630.6,275.3L631.3,275.0L632.4,273.5L631.9,273.1L631.0,273.0L630.5,273.6ZM665.6,282.4L667.4,282.4L667.4,282.3L667.4,280.5L665.2,280.5L664.4,281.2ZM666.6,273.9L662.1,272.1L662.0,272.6L664.3,275.2L666.6,274.8ZM627.0,269.2L627.0,269.3L627.8,270.2L629.5,270.5L630.0,269.3ZM599.5,373.1L600.2,373.6L602.0,373.2L603.4,371.6L600.9,370.3ZM664.0,300.1L662.6,299.4L662.5,300.9L662.8,301.2L664.3,301.0ZM659.3,308.3L661.0,307.9L661.5,307.1L659.9,306.6L659.0,308.3ZM667.8,279.4L667.1,278.7L665.4,278.5L665.2,280.5L667.4,280.5L667.8,279.9ZM688.3,256.6L689.2,254.5L688.3,253.8L687.5,253.7L685.8,255.9L685.8,256.0L686.9,256.9ZM636.6,329.8L637.3,329.4L637.0,328.0L635.6,327.2L635.4,327.3L634.5,327.9ZM681.9,268.5L683.7,266.7L682.4,265.4L682.2,265.5L682.0,265.7L681.3,267.4ZM610.8,264.5L610.2,264.2L603.7,265.9L602.6,271.4L603.7,273.0L609.8,275.4L611.0,274.7L611.0,265.2ZM655.3,314.9L656.6,315.6L658.2,314.8L658.8,313.0L656.6,312.7L655.4,314.1ZM635.4,216.3L631.7,215.3L631.5,218.5L632.9,218.8L632.9,218.7ZM609.6,355.2L609.4,356.2L610.7,357.0L613.7,356.9L612.7,355.6L610.5,354.8ZM648.3,294.1L650.8,293.1L650.7,289.8L647.6,286.1L646.6,287.3L646.6,288.5ZM630.9,381.3L630.7,380.9L627.2,380.5L625.6,383.8L627.5,388.4L627.8,388.3ZM626.8,252.4L628.0,252.8L628.5,251.2L628.4,251.1L626.4,251.4ZM662.0,362.4L661.7,362.6L661.6,370.5L665.7,379.1L682.1,379.9L676.4,361.3ZM601.1,376.6L603.2,375.9L602.0,373.2L600.2,373.6ZM667.2,292.6L666.9,293.6L667.8,295.1L667.9,294.9L668.7,292.2ZM642.4,311.2L642.3,311.1L640.5,311.7L640.0,312.1L640.3,313.3L642.3,314.7L642.8,314.2ZM679.1,269.2L680.1,269.9L681.8,269.1L681.8,269.0L680.0,268.0L679.1,269.0ZM645.1,306.8L648.4,305.2L646.2,302.2L644.1,304.5ZM606.7,374.5L607.9,377.9L611.6,381.5L613.8,380.2L610.2,371.3L609.8,371.4L608.3,372.3ZM650.5,378.3L650.9,385.0L658.7,387.5L662.0,380.8L654.3,376.7ZM622.1,290.6L621.6,289.7L619.4,289.9L619.3,291.1L621.3,293.1L622.1,291.6ZM653.1,312.8L653.8,311.6L652.5,310.8L652.0,312.3L652.7,312.9ZM587.8,369.5L588.2,363.0L583.2,361.4L579.7,365.3L579.0,371.3L579.6,371.4L581.9,373.8ZM637.9,285.0L638.6,282.7L635.5,281.7L633.2,282.5L633.0,284.9L637.3,285.3ZM658.1,300.0L658.5,298.2L656.1,298.3L656.2,299.5L657.4,300.3ZM625.0,252.9L625.9,254.8L626.8,252.4L626.4,251.4L625.1,250.7ZM655.9,304.4L654.2,305.4L654.0,305.9L656.1,305.8L656.6,305.3ZM664.2,286.9L664.1,286.9L662.4,288.0L662.9,289.8L664.0,289.2L664.2,287.1ZM661.3,266.7L662.1,268.2L664.7,266.6L667.2,263.4L666.9,261.6L661.4,265.1ZM631.6,293.9L632.1,294.5L634.8,295.1L634.8,293.9L633.3,291.5L632.9,291.5L631.7,292.4ZM663.3,306.6L665.5,307.9L666.8,306.1L665.2,304.3L663.9,304.1L663.2,305.0L663.0,306.3ZM682.0,265.7L682.2,265.5L679.7,264.4L679.1,266.4L679.8,266.8ZM609.4,303.1L605.2,305.8L605.4,306.3L611.1,307.9L612.6,306.8L613.0,304.7ZM617.9,321.2L616.0,323.8L618.1,327.0L619.9,322.6ZM642.6,241.5L642.7,241.5L643.7,240.8L645.1,235.5L639.4,236.8L638.8,237.9L639.0,240.2L639.5,240.9L639.9,241.2ZM631.0,303.4L631.6,303.6L633.6,302.5L633.6,302.0L631.6,301.2L629.9,302.5ZM685.6,255.9L685.3,253.0L685.2,252.9L684.2,252.8L684.2,255.2L684.3,255.3L684.6,255.5ZM656.6,330.1L653.2,329.6L655.2,333.5L656.3,333.9L656.4,333.8ZM663.2,314.5L665.1,313.8L665.6,312.0L663.7,311.6L661.2,312.7ZM683.8,266.8L685.6,266.0L686.0,265.2L684.0,263.1L682.8,264.4L682.4,265.4L683.7,266.7ZM677.5,276.3L678.5,275.1L677.1,274.0L676.9,275.0ZM665.5,290.1L665.8,290.5L667.1,290.0L667.6,288.8L667.4,288.4L665.4,288.2ZM672.1,291.6L672.0,291.9L672.3,292.2L676.0,292.3L676.6,291.2L672.7,290.6ZM640.1,366.5L644.6,368.3L646.9,366.7L647.2,365.5L646.5,364.5L641.7,362.1L640.0,363.9ZM599.7,315.5L594.6,315.1L594.6,316.4L597.3,317.8L600.1,320.9L601.0,324.4L606.5,322.7ZM602.6,271.4L603.7,265.9L598.9,263.0L593.7,267.1L594.1,267.8L596.4,270.0L596.7,271.7ZM630.8,346.9L629.6,346.6L628.9,350.6L631.5,352.3L632.7,350.9L632.7,350.4ZM689.3,261.2L694.0,259.5L691.9,257.4L690.0,258.1L688.7,260.3ZM668.8,306.1L671.0,304.2L669.6,303.3L667.6,304.3L667.4,305.6ZM678.7,254.9L678.1,254.9L678.7,256.5L680.2,257.6L680.4,257.6L681.1,256.6L680.4,255.4ZM643.7,225.6L646.7,220.6L642.0,222.0L640.9,223.6L640.7,226.0ZM653.8,321.7L654.6,323.9L655.4,324.2L656.0,323.3L655.6,321.2L654.5,321.2ZM664.1,302.9L663.9,304.1L665.2,304.3L666.7,303.3L664.4,302.5ZM659.0,324.1L659.0,326.3L665.8,327.9L666.2,326.8L662.9,323.3L659.8,322.3ZM621.3,281.1L621.8,281.2L623.4,280.7L623.1,277.5L621.0,277.0ZM610.3,340.4L610.1,341.2L611.4,342.0L613.3,341.4L614.6,338.5L613.6,337.3ZM682.3,308.0L678.3,307.7L677.2,308.3L679.8,311.4L683.7,312.0L683.4,309.4ZM635.3,277.6L639.1,281.4L639.9,280.1L640.2,276.7L636.5,276.5ZM675.1,182.6L682.0,184.2L684.2,181.9L684.7,177.6L682.7,174.8L677.6,177.4L673.5,180.1ZM645.9,195.8L648.3,198.4L651.6,197.0L652.5,193.8L652.4,193.7L646.0,195.6ZM604.3,355.7L605.6,357.7L609.3,356.4L609.4,356.2L609.6,355.2L606.5,351.4ZM629.3,317.5L631.3,319.3L631.4,319.2L631.2,317.5L629.5,317.3ZM616.6,357.7L617.0,360.4L620.2,360.3L620.7,358.1L620.5,357.8ZM621.9,311.8L621.0,311.6L619.2,312.8L620.7,315.5L621.2,315.2L622.1,312.3ZM687.7,246.5L685.8,248.0L685.7,248.3L686.0,249.0L686.7,249.2L688.0,248.4L688.2,248.1L687.8,247.1L687.9,246.5ZM642.2,327.7L641.4,325.4L641.4,325.4L640.4,325.4L640.2,327.2L641.1,328.6ZM672.7,189.3L672.6,189.5L671.2,193.6L680.0,201.9L680.2,201.4L682.8,194.5L683.5,193.4ZM625.3,293.0L622.0,294.6L623.5,296.3L624.9,295.9L625.3,293.1ZM636.1,222.5L636.0,222.4L634.8,222.8L634.3,225.8L636.7,227.8L638.8,226.5ZM624.9,275.6L624.2,273.2L622.9,273.0L622.1,273.5L622.1,273.5L624.3,276.4ZM633.2,321.7L635.1,321.4L634.9,320.1L633.1,320.5L633.0,321.2ZM604.0,284.5L606.0,279.3L599.6,279.0L596.4,280.8L598.7,282.3L599.0,283.1ZM642.4,370.9L642.8,372.1L647.9,377.3L648.2,377.3L648.4,369.6L646.9,366.7L644.6,368.3ZM645.0,259.9L647.6,258.2L647.8,257.1L645.6,254.7L644.1,255.0L642.8,256.2L643.8,258.9ZM625.6,310.9L624.4,310.3L623.0,311.0L625.3,312.7L625.7,312.2ZM634.0,249.5L635.8,251.4L635.9,251.4L636.5,251.3L637.0,248.5L635.6,248.4ZM646.6,323.5L645.3,321.5L643.6,322.5L643.3,323.2L643.3,323.5L644.0,324.1L645.8,324.6L646.0,324.5L646.5,323.9ZM648.5,321.9L647.1,322.8L646.6,323.5L646.5,323.9L648.6,324.4L648.6,324.4L649.4,322.5ZM640.2,226.5L642.4,231.6L646.4,233.3L646.6,233.2L644.5,226.1L643.7,225.6L640.7,226.0ZM681.9,241.0L681.8,236.8L678.1,238.5L678.6,240.4ZM637.6,320.4L637.5,321.6L638.3,321.6L639.5,320.5L638.4,319.8ZM664.4,281.2L665.2,280.5L665.4,278.5L665.0,278.0L661.8,278.4L662.2,281.2L662.7,281.3ZM615.3,240.3L619.2,241.7L620.1,240.8L621.0,234.9L615.4,228.8L614.1,229.6ZM657.5,211.3L652.8,208.0L652.0,208.9L651.9,209.4L653.0,214.8L656.9,215.1L657.7,213.2ZM637.4,344.9L640.0,343.0L636.5,342.4L635.4,343.4ZM643.2,296.3L642.1,289.0L639.9,288.7L638.4,290.8L639.2,293.2L642.3,296.7L642.7,296.9ZM645.5,314.6L646.9,315.0L645.6,312.0L644.9,312.4L644.7,313.0ZM638.8,329.9L639.2,330.1L641.1,328.7L641.1,328.6L640.2,327.2L638.7,327.1ZM692.6,272.3L693.4,277.7L707.6,271.6L708.5,270.5L708.2,269.0L694.3,269.0ZM630.4,361.7L627.4,363.0L626.4,364.4L627.6,365.9L630.6,368.0L632.1,367.3L633.2,365.1L632.7,363.8ZM691.2,297.4L696.6,301.0L700.6,298.2L694.9,293.7L691.9,294.7ZM619.7,249.1L615.8,248.4L615.4,248.6L614.7,252.5L620.7,251.4L621.0,249.9ZM651.7,326.4L652.0,326.5L655.5,325.0L655.4,324.2L654.6,323.9L652.6,323.5L652.3,323.7L651.6,325.9ZM668.4,240.4L666.2,240.7L665.2,243.8L665.9,244.7L668.3,245.4L669.6,243.9L668.6,240.5ZM626.0,306.3L627.7,307.1L626.4,303.9L625.6,303.9ZM620.8,299.1L619.7,297.9L619.2,299.3L620.3,301.2L620.8,301.0ZM692.4,310.1L692.9,308.8L689.8,302.4L686.4,303.5L686.6,306.2ZM632.0,313.5L632.5,312.5L631.1,311.8L628.8,313.1L630.2,314.1L630.5,314.2L631.6,314.1ZM603.2,375.9L603.3,375.9L604.8,374.4L603.7,371.6L603.4,371.6L602.0,373.2ZM649.7,317.9L649.9,318.9L651.8,318.8L652.1,318.2L651.2,317.4L650.2,317.6ZM642.7,296.9L642.3,296.7L641.9,296.8L636.1,299.9L637.6,301.4L640.6,301.7L643.0,298.2ZM610.9,284.9L610.5,284.8L609.8,285.1L606.2,292.0L606.4,292.8L607.0,293.0L613.0,291.0L613.6,290.0L613.2,288.7ZM661.4,252.7L660.9,254.8L663.1,257.4L665.9,257.6L664.1,253.5ZM663.3,298.5L664.8,297.8L663.3,296.8L662.6,296.9ZM645.5,325.4L643.5,327.3L643.5,327.4L645.8,327.6ZM661.2,312.7L663.7,311.6L663.0,310.0L662.0,309.7L661.5,309.8L661.2,310.1L660.7,311.0L660.4,312.5ZM626.6,294.9L627.0,295.0L628.4,293.6L627.7,292.6L626.1,291.9L625.6,292.2L625.3,293.0L625.3,293.1ZM627.5,222.9L627.9,220.3L624.7,218.1L622.8,219.6L622.2,220.4ZM631.3,360.1L630.4,361.7L632.7,363.8L633.3,360.8ZM641.6,304.5L640.6,302.0L638.1,304.5L637.9,305.2L639.7,306.2L641.1,306.1ZM676.6,291.2L677.1,290.6L677.1,290.6L676.3,289.3L673.6,288.5L673.0,289.2L672.7,290.6ZM660.4,395.0L658.7,387.5L650.9,385.0L649.5,386.2L652.3,394.9ZM659.3,353.6L662.0,362.4L676.4,361.3L678.5,356.3L678.0,351.4L667.3,343.9L664.3,345.3L659.5,351.0ZM644.8,330.3L643.1,330.6L641.7,332.5L642.0,333.6L642.2,333.8L643.8,333.2L645.0,330.4ZM627.1,240.8L624.2,242.8L624.3,243.0L626.4,243.7L628.8,242.3ZM667.0,260.9L672.2,259.6L672.4,255.5L666.3,258.0L666.7,260.3ZM600.4,350.4L594.5,350.6L594.8,352.9L597.4,356.3L597.7,356.4L600.7,353.2L600.8,350.7ZM607.8,364.5L608.3,364.0L608.1,360.9L606.3,360.7L605.7,362.1ZM628.2,345.5L629.6,346.6L630.8,346.9L633.8,345.4L633.9,344.7L630.7,342.3L630.2,342.2L628.5,343.4ZM615.7,274.5L615.4,274.9L618.5,276.8L620.5,276.7L622.1,273.5L622.1,273.5L620.8,272.7ZM598.9,364.6L597.3,363.7L595.0,366.7L596.7,369.5L597.3,369.1ZM631.4,283.0L632.4,282.0L631.8,281.1L630.0,282.4L630.0,282.5ZM573.4,356.2L574.6,358.7L569.6,359.6L566.4,362.3L566.6,362.6L576.4,363.3L575.9,355.9ZM671.9,306.1L669.5,307.1L669.4,308.7L670.4,309.0L672.5,308.5ZM674.0,272.9L675.7,273.9L677.1,273.6L677.7,272.3L677.6,272.2L674.1,272.7ZM666.7,303.3L665.2,304.3L666.8,306.1L667.4,305.6L667.6,304.3L666.8,303.3ZM668.8,285.0L669.4,285.2L672.1,284.8L672.2,284.6L671.6,283.9L669.4,283.2L668.6,283.7ZM626.7,281.2L625.7,281.6L625.9,282.8L627.8,284.0L628.3,281.6L627.9,281.3ZM608.3,372.3L609.8,371.4L604.8,369.4L604.1,371.2ZM650.7,268.6L648.4,271.3L649.4,275.0L655.8,271.2L655.8,271.1L655.4,270.5ZM677.3,284.3L677.2,285.6L679.2,286.8L681.8,285.5L681.1,284.2L677.4,284.3ZM653.7,341.4L664.3,345.3L667.3,343.9L666.7,335.2L666.1,334.6L665.7,334.6L654.0,340.6L653.9,340.8ZM628.0,312.5L628.1,312.9L628.8,313.1L631.1,311.8L630.8,311.5L628.2,311.3ZM636.8,216.0L637.8,215.8L638.7,215.4L638.9,215.0L638.5,211.6L638.1,211.1L636.9,211.2L635.4,213.4L636.4,215.8ZM643.2,348.4L643.7,347.7L643.5,347.3L640.0,345.5L639.2,346.9L639.7,347.5ZM662.2,281.2L661.8,278.4L661.5,277.9L658.6,277.4L657.6,277.8L657.4,278.0L656.4,280.3L661.3,282.2ZM622.8,348.2L622.3,350.7L622.5,351.0L626.7,351.2L627.1,350.8L626.2,346.4L625.9,346.4ZM646.5,364.5L647.2,365.5L654.8,362.7L652.5,359.3L646.9,357.3ZM623.2,353.7L622.4,352.8L619.7,355.0L620.5,357.8L620.7,358.1L624.2,357.4ZM652.2,309.5L652.1,307.7L650.2,307.3L650.1,308.9L652.2,309.6ZM610.3,371.1L610.2,371.3L613.8,380.2L613.9,380.2L616.2,379.2L618.9,375.6L613.6,368.9ZM613.6,290.0L615.6,290.2L617.5,288.9L617.3,286.0L613.2,288.7ZM656.9,215.1L658.2,221.6L661.2,221.5L664.7,219.7L664.3,215.5L657.7,213.2ZM652.1,354.4L652.5,359.3L654.8,362.7L657.8,363.3L661.7,362.6L662.0,362.4L659.3,353.6Z" fill="#f4b074" stroke="#696c72" stroke-width="0.62" stroke-linejoin="round"/><path d="M634.2,270.5L634.8,272.3L637.3,272.8L639.5,272.3L636.8,268.3ZM625.6,292.2L624.7,291.7L622.1,291.6L621.3,293.1L621.3,293.9L621.4,294.4L622.0,294.6L625.3,293.0ZM677.2,269.9L677.0,270.6L677.6,272.2L677.7,272.3L680.2,272.8L680.1,269.9L679.1,269.2ZM619.6,344.4L617.1,344.4L616.8,346.7L617.7,347.5L620.0,346.9ZM632.1,210.3L633.9,207.3L633.9,207.0L628.2,206.1L628.8,211.5ZM627.9,279.1L627.5,279.1L627.0,279.3L626.7,281.2L627.9,281.3L628.2,279.3ZM631.8,251.5L635.8,251.4L634.0,249.5L632.6,249.1L631.8,251.3ZM664.7,238.4L667.3,236.1L666.6,233.4L665.4,233.1L662.7,235.1L663.2,238.2ZM626.1,275.2L624.9,275.6L624.3,276.4L624.1,276.9L625.3,277.6L626.9,277.3L627.5,276.5L627.6,276.1L627.2,275.4L626.9,275.2ZM644.7,315.0L644.5,315.7L645.6,316.7L647.2,316.1L647.2,315.2L646.9,315.0L645.5,314.6ZM628.2,334.8L627.0,338.8L630.0,338.6L630.1,335.0ZM685.5,259.8L684.0,260.5L683.6,260.9L683.6,261.0L684.0,262.5L686.5,262.6L687.6,260.1L686.8,259.7ZM649.2,298.2L645.0,299.9L646.2,301.5L648.0,301.2L650.1,298.7ZM685.6,255.9L685.8,255.9L687.5,253.7L687.0,253.2L685.3,253.0ZM651.6,325.9L652.3,323.7L650.6,322.7L650.0,324.5ZM615.0,283.1L617.8,284.8L618.4,284.8L619.8,281.1L618.8,280.1L615.4,281.7ZM631.9,329.4L631.1,330.7L632.4,332.3L633.0,331.7L632.4,329.4ZM664.3,283.6L665.3,283.8L665.6,282.4L664.4,281.2L662.7,281.3ZM662.9,291.7L661.8,291.4L660.6,291.7L660.4,292.4L663.6,294.6L663.6,294.6L664.3,293.3ZM633.4,276.8L635.2,274.9L634.0,273.3L633.2,273.7L633.3,276.3ZM643.3,205.5L640.0,202.7L637.1,205.8L640.4,207.9L640.7,207.9L643.4,206.0ZM631.1,324.5L631.1,324.5L631.8,322.9L630.7,321.7L630.1,322.9ZM597.6,373.2L597.3,374.7L599.5,377.6L600.8,377.0L601.1,376.6L600.2,373.6L599.5,373.1Z" fill="#e95a46" stroke="#696c72" stroke-width="0.62" stroke-linejoin="round"/><path d="M617.5,292.6L616.1,295.9L616.3,296.2L619.1,296.6L621.4,294.4L621.3,293.9ZM634.8,293.9L637.6,290.9L634.8,289.7L633.9,290.3L633.3,291.5ZM683.3,257.7L683.4,257.9L684.9,257.3L685.8,256.0L685.8,255.9L685.6,255.9L684.6,255.5L683.2,257.5ZM648.5,321.6L646.9,320.6L647.1,322.8L648.5,321.9ZM632.1,294.5L631.6,293.9L629.3,293.8L629.2,293.8L629.3,294.1L630.7,295.9ZM672.2,289.0L673.0,289.2L673.6,288.5L673.3,286.4L672.9,285.9L672.5,285.7L670.8,287.2ZM641.4,255.5L642.7,252.0L640.9,250.6L640.1,251.3L640.7,255.3L641.1,255.5Z" fill="#efcc35" stroke="#696c72" stroke-width="0.62" stroke-linejoin="round"/><polygon points="595.5,232.8 598.2,234.6 601.9,238.7 605.0,242.3 606.4,244.6 607.3,240.0 605.0,234.3 609.1,233.2 611.9,230.9 615.5,228.7 617.3,225.9 620.1,223.2 622.8,219.6 626.3,216.8 628.8,211.7 628.0,204.8 629.7,199.7 632.2,195.4 636.5,192.0 641.7,187.7 645.1,186.0 650.2,188.5 654.5,185.1 657.1,181.7 663.9,181.7 672.5,180.8 677.6,177.4 682.8,174.8 689.6,171.4 693.1,168.0 693.1,164.6 698.2,162.8 703.3,160.3 708.5,161.1 712.8,166.3 711.0,169.7 706.8,173.1 699.9,175.7 696.5,177.4 694.8,181.7 689.6,185.1 686.2,189.4 682.8,194.5 680.2,201.4 677.6,208.2 675.9,213.4 674.2,218.5 673.4,221.9 675.9,223.7 681.1,223.7 683.6,228.8 685.3,232.0 689.1,237.0 687.8,247.1 691.6,257.1 696.6,262.1 709.1,263.4 721.6,260.8 729.2,263.4 735.4,270.9 741.7,278.4 749.2,279.6 764.3,278.4 774.3,275.9 780.5,278.4 779.3,285.9 774.3,293.4 773.0,304.7 774.3,314.7 778.0,322.3 781.8,327.3 780.5,334.8 781.8,347.5 786.8,357.5 789.3,365.1 791.8,370.1 786.8,371.3 784.3,362.6 780.5,355.0 774.3,358.8 766.8,361.3 736.7,361.3 736.7,372.6 746.7,373.8 749.2,381.4 736.7,382.6 732.9,390.1 732.9,396.4 739.2,403.9 743.9,413.1 742.2,428.5 740.5,442.2 738.8,454.0 736.7,460.3 734.2,470.5 730.4,465.9 724.2,464.6 720.4,463.4 726.7,454.6 731.7,448.4 727.9,442.1 723.3,437.1 713.1,435.4 702.8,435.4 692.5,438.8 680.5,437.9 675.4,433.7 673.7,426.8 668.5,423.4 665.1,418.2 658.2,413.1 653.1,408.0 654.8,404.5 649.7,402.0 639.4,396.8 630.8,392.5 622.3,387.4 610.3,387.4 600.0,385.7 596.0,385.0 594.2,383.3 591.4,380.5 588.7,378.7 586.0,376.0 582.3,374.2 579.6,371.4 575.9,371.0 572.3,368.7 568.7,366.0 566.4,362.3 569.6,359.6 574.6,358.7 572.8,355.0 572.8,350.9 574.6,346.8 577.8,344.1 582.8,343.7 587.3,341.9 590.1,339.2 592.8,335.5 595.5,331.0 598.3,327.3 601.0,324.6 600.1,320.9 597.3,317.8 594.6,316.4 594.6,313.7 597.3,309.1 597.3,304.6 598.7,301.4 598.7,297.8 596.9,294.2 594.1,291.4 596.0,288.7 600.1,286.0 598.7,282.3 596.0,280.5 594.6,276.9 596.9,273.2 596.4,270.0 594.1,267.8 591.4,263.2 588.7,259.6 587.7,256.0 589.1,253.3 590.0,250.5 592.8,251.4 596.4,247.8 601.0,246.0 598.7,242.3 597.0,238.0" fill="none" stroke="#696c72" stroke-width="0.6" stroke-linejoin="round"/><polygon points="717.1,344.7 726.1,339.6 730.0,333.1 736.4,329.3 742.8,326.1 753.1,324.8 758.2,322.8 760.8,328.6 753.1,333.1 744.1,340.2 748.0,348.5 753.1,344.7 763.4,338.9 772.4,335.1 774.9,329.3 778.8,324.1 782.6,329.3 780.5,334.8 781.8,347.5 786.8,357.5 789.3,365.1 791.8,370.1 786.8,371.3 784.3,362.6 780.5,355.0 774.3,358.8 766.8,361.3 736.7,361.3 732.5,360.1 730.0,357.5 732.5,351.1 724.8,351.1 719.7,348.5" fill="#ade0a8" stroke="#ade0a8" stroke-width="1" stroke-linejoin="round"/><polygon points="710.3,363.6 722.5,359.8 730.2,356.6 732.8,359.1 735.4,361.7 725.1,360.4 719.9,365.6 714.8,370.7" fill="#ade0a8" stroke="#ade0a8" stroke-width="1" stroke-linejoin="round"/><polygon points="736.7,372.6 746.7,373.8 749.2,381.4 736.7,382.6 735.0,378.0" fill="#ade0a8" stroke="#ade0a8" stroke-width="1" stroke-linejoin="round"/><polygon points="651.8,402.2 657.0,399.6 662.1,397.0 668.5,402.2 675.0,404.1 684.0,402.8 690.4,400.2 698.1,399.6 702.0,393.8 708.4,391.2 702.0,386.1 696.8,380.3 701.3,377.1 712.2,382.3 722.5,384.8 731.5,390.0 731.9,396.8 727.6,402.8 727.6,410.5 735.3,411.4 743.5,414.8 743.9,413.1 742.2,428.5 740.5,442.2 738.8,454.0 737.9,449.1 731.7,448.4 727.9,442.1 723.3,437.1 713.1,435.4 702.8,435.4 692.5,438.8 680.5,437.9 675.4,433.7 673.7,426.8 668.5,423.4 665.1,418.2 658.2,413.1 653.1,408.0 654.8,404.5" fill="#ade0a8" stroke="#ade0a8" stroke-width="1" stroke-linejoin="round"/><polygon points="732.9,390.1 732.9,396.4 739.2,403.9 743.9,413.1 743.5,414.8 742.2,406.3 737.0,400.3 731.9,396.8 731.5,390.0" fill="#ade0a8" stroke="#ade0a8" stroke-width="1" stroke-linejoin="round"/><path d="M750.6,351.3h1.0v1.0h-1.0zM764.5,343.1h0.6v1.2h-0.6zM777.8,350.0h1.4v0.9h-1.4zM765.0,344.6h1.2v1.2h-1.2zM760.8,354.6h1.3v0.6h-1.3zM769.3,352.0h0.9v0.5h-0.9zM773.2,350.0h1.3v1.2h-1.3zM767.7,357.7h1.0v1.1h-1.0zM758.0,357.9h1.5v0.6h-1.5zM776.8,349.4h1.2v0.7h-1.2zM760.3,348.6h1.0v1.0h-1.0zM763.0,357.4h1.3v1.2h-1.3zM772.8,358.8h1.3v0.6h-1.3zM773.0,358.4h1.5v1.0h-1.5zM767.7,345.6h1.4v1.0h-1.4zM772.7,358.8h0.7v1.1h-0.7zM756.8,344.6h0.9v1.1h-0.9zM773.4,342.8h1.2v0.5h-1.2zM767.9,347.6h1.5v1.3h-1.5zM760.2,359.0h0.9v0.6h-0.9zM763.6,342.5h0.8v0.8h-0.8zM764.0,344.7h0.6v1.2h-0.6zM753.3,358.3h1.5v0.8h-1.5zM758.6,350.8h1.2v1.0h-1.2zM762.1,352.5h1.5v0.9h-1.5zM757.5,354.2h0.8v0.7h-0.8zM777.2,350.9h1.1v0.5h-1.1zM756.9,351.9h0.6v1.0h-0.6zM764.8,343.0h1.2v0.9h-1.2zM766.5,348.0h1.3v1.1h-1.3zM742.8,343.0h1.3v1.3h-1.3zM702.0,399.3h1.2v0.8h-1.2zM703.8,397.0h1.0v1.0h-1.0zM702.8,398.0h1.4v0.5h-1.4zM707.1,403.8h0.9v0.7h-0.9zM710.9,395.8h0.8v0.8h-0.8zM709.2,393.6h0.9v0.8h-0.9zM711.3,399.0h1.5v0.6h-1.5zM703.4,402.4h1.5v0.9h-1.5zM706.5,395.1h1.4v1.2h-1.4zM700.9,396.5h1.4v1.0h-1.4zM710.9,397.5h0.7v0.7h-0.7zM710.7,396.3h0.9v0.8h-0.9zM704.7,398.6h1.5v0.6h-1.5zM698.1,407.1h1.5v1.3h-1.5zM704.9,407.2h1.5v0.7h-1.5zM745.2,379.9h1.3v0.9h-1.3zM740.2,376.4h0.8v0.6h-0.8zM743.5,376.0h1.4v0.5h-1.4zM746.9,378.9h1.5v1.2h-1.5zM746.9,378.0h0.6v1.1h-0.6zM738.9,376.1h1.3v0.9h-1.3zM677.1,419.0h1.2v0.8h-1.2zM673.6,417.8h1.1v1.1h-1.1zM675.7,407.2h1.1v1.2h-1.1zM671.8,416.7h1.5v1.1h-1.5zM686.1,404.1h1.2v1.2h-1.2zM669.1,408.3h0.9v0.9h-0.9z" fill="#f4faf0" fill-opacity="0.85"/><polyline points="692.5,403.7 697.6,408.8 704.5,413.1 711.3,414.8 719.9,418.2 726.8,420.8 735.3,416.5 743.0,417.4" fill="none" stroke="#aee0f6" stroke-width="1"/><polyline points="733.0,351.0 738.0,347.5 743.0,344.0 746.5,341.5" fill="none" stroke="#aee0f6" stroke-width="1"/><polyline points="748.0,348.5 753.0,349.5 759.0,348.3 765.0,351.0 769.0,346.0 773.5,341.0" fill="none" stroke="#aee0f6" stroke-width="1"/><path d="M701.7,263.6L713.3,262.9L712.0,265.0L716.0,271.0L710.7,271.3L705.6,268.7L701.7,266.1ZM712.0,265.0L713.3,262.9L719.7,261.6L727.4,264.2L732.5,264.2L737.7,271.3L726.1,270.6L721.0,271.9L716.0,271.0ZM690.1,276.4L696.6,271.3L705.6,269.3L710.0,271.3L710.0,276.4L701.7,279.0L695.3,279.6ZM699.1,284.1L705.6,284.1L714.5,280.9L727.4,280.9L735.1,280.3L732.5,286.7L726.1,290.5L714.5,290.5L705.6,289.3L700.4,286.7ZM713.9,305.3L726.1,304.7L728.7,301.5L736.4,302.1L742.8,300.8L748.0,295.7L755.0,291.8L760.8,290.5L765.9,291.8L773.0,295.7L773.3,304.7L774.3,311.1L775.2,318.4L771.1,319.0L765.9,319.6L758.2,322.8L753.1,324.8L742.8,326.1L736.4,329.3L730.0,333.1L726.1,339.6L719.7,341.5L713.9,339.6ZM744.1,340.2L748.0,348.5L753.1,344.7L763.4,338.9L772.4,335.1L774.9,329.3L778.8,324.1L775.2,318.4L771.1,319.0L765.9,319.6L758.2,322.8L760.8,328.6L753.1,333.1ZM676.0,317.7L681.1,316.4L692.7,313.9L691.5,319.0L689.6,324.5L681.1,325.3L676.0,324.6ZM676.0,324.6L681.1,325.3L689.6,324.5L689.5,329.3L681.1,332.5L676.0,331.8ZM666.0,350.1L673.7,349.5L681.4,348.2L686.3,344.0L694.0,341.5L705.6,340.2L713.9,339.6L719.7,341.5L717.1,344.7L719.7,348.5L721.2,350.1L718.7,352.1L709.7,351.4L699.4,351.4L690.4,348.8L681.4,349.5L678.8,352.7L673.7,355.3L666.0,355.3ZM640.3,367.5L644.1,366.2L649.3,372.0L657.0,379.7L666.0,383.5L674.3,391.9L667.3,392.5L655.7,391.2L649.3,390.0L646.7,383.5L642.8,375.8ZM630.0,386.5L636.4,383.5L640.3,386.8L646.7,390.0L649.3,393.2L655.7,395.7L662.1,397.0L657.0,399.6L651.8,402.2L646.7,399.5L639.0,396.0L632.6,392.5L630.0,392.0ZM636.4,346.3L640.3,348.8L642.8,359.1L644.1,366.2L640.3,367.5L637.7,361.7L635.1,352.7ZM727.9,452.1L737.9,449.1L736.7,459.6L734.2,470.2L730.4,465.9L726.7,462.1ZM682.8,174.8L689.6,171.4L692.0,177.0L686.0,179.5L681.0,177.8ZM590.0,250.5L592.8,251.4L596.4,247.8L601.0,246.0L606.0,247.0L611.0,250.0L612.0,256.0L608.0,262.0L600.0,264.0L592.0,264.0L588.7,259.6L587.7,256.0L589.1,253.3Z" fill="#f7df7b" stroke="#696c72" stroke-width="0.6" stroke-linejoin="round"/><path d="M721.0,271.9L726.1,270.6L732.5,270.6L737.7,271.3L742.8,277.7L746.0,280.3L740.2,280.9L735.1,279.6L730.0,277.1L721.0,276.4ZM710.0,271.3L721.0,271.9L721.0,276.4L710.0,276.4ZM695.3,279.6L710.0,276.4L730.0,277.1L735.1,279.6L727.4,280.9L714.5,280.9L705.6,284.1L699.1,282.8ZM735.1,280.3L746.0,280.3L750.5,278.3L754.4,279.0L755.0,291.8L748.0,295.7L742.8,300.8L736.4,302.1L728.7,300.8L722.3,294.4L726.1,290.5L732.5,286.7ZM754.4,279.0L765.9,277.7L773.6,275.8L778.8,276.4L780.7,279.6L778.8,284.1L777.5,289.3L774.9,293.1L773.0,295.7L765.9,291.8L760.8,290.5L755.0,291.8ZM695.3,290.5L705.6,289.3L714.5,290.5L722.3,294.4L718.4,297.0L713.3,302.1L708.1,304.7L700.4,308.5L695.3,303.4L691.4,297.0ZM722.3,294.4L728.7,300.8L726.1,304.7L713.9,305.3L713.3,302.1L718.4,297.0ZM679.9,333.1L689.5,329.9L696.6,331.2L713.3,330.6L713.3,339.6L705.6,340.2L694.0,341.5L686.3,344.0L681.1,339.6ZM681.4,349.5L690.4,348.8L699.4,351.4L709.7,351.4L718.7,352.1L724.8,351.1L732.5,351.1L730.2,356.6L722.5,359.8L712.2,361.7L707.1,361.7L699.4,357.2L690.4,358.5L686.5,355.3ZM725.1,360.4L735.4,361.7L736.7,372.6L732.8,378.4L731.5,390.0L722.5,384.8L713.5,378.4L714.8,370.7L719.9,365.6ZM707.1,361.7L710.3,363.6L714.8,370.7L713.5,378.4L712.2,382.3L701.3,377.1L704.5,372.0ZM690.4,358.5L699.4,357.2L707.1,361.7L704.5,372.0L701.3,377.1L696.8,380.3L690.4,375.8L684.0,371.3L686.5,366.8L689.7,363.6ZM666.0,355.3L673.7,355.3L678.8,352.7L686.5,355.3L689.7,363.6L686.5,366.8L684.0,371.3L676.3,375.8L671.1,373.9L666.0,365.6ZM668.5,374.5L676.3,375.8L684.0,371.3L690.4,375.8L696.8,380.3L702.0,386.1L708.4,391.2L702.0,393.8L698.1,399.6L690.4,400.2L684.0,402.8L675.0,404.1L668.5,402.2L662.1,397.0L655.7,395.7L649.3,393.2L646.7,390.0L655.7,391.2L667.3,392.5L674.3,391.9L666.0,383.5ZM642.8,342.4L646.7,346.3L645.4,350.1L655.7,357.8L664.7,361.7L666.0,365.6L671.1,373.9L668.5,374.5L666.0,383.5L657.0,379.7L649.3,372.0L644.1,366.2L642.8,359.1L640.3,348.8ZM646.7,346.3L650.6,345.6L659.6,346.3L666.0,345.0L668.5,348.2L666.0,350.1L666.0,355.3L666.0,365.6L664.7,361.7L655.7,357.8L645.4,350.1ZM727.6,402.8L731.9,396.8L737.0,400.3L742.2,406.3L743.5,414.8L735.3,411.4L727.6,410.5ZM720.4,463.4L726.7,454.6L726.7,462.1L724.2,464.6ZM666.0,184.0L672.5,180.8L675.0,182.5L671.0,188.0L666.0,189.0ZM595.5,232.8L598.2,234.6L601.9,238.7L605.0,242.3L606.4,244.6L601.0,246.0L598.7,242.3L597.0,238.0Z" fill="#f4b074" stroke="#696c72" stroke-width="0.6" stroke-linejoin="round"/><path d="M686.9,291.8L690.8,291.2L695.3,299.5L692.1,300.8L688.2,297.0ZM630.0,357.8L633.9,359.1L635.1,369.4L632.6,375.8L630.0,374.5ZM597.3,317.8L600.1,320.9L604.0,318.0L607.0,322.0L607.4,330.0L603.0,334.6L597.0,333.5L595.5,331.0L598.3,327.3L601.0,324.6ZM689.6,171.4L693.1,168.0L693.1,164.6L698.2,162.8L703.3,160.3L708.5,161.1L712.8,166.3L711.0,169.7L706.8,173.1L699.9,175.7L696.5,177.4L694.8,181.7L691.0,181.0L692.0,177.0ZM654.5,185.1L657.1,181.7L663.9,181.7L666.0,184.0L664.0,190.0L659.0,193.0L655.0,190.0ZM663.6,193.2L669.3,190.7L675.1,195.8L671.9,203.4L667.4,208.5L663.6,206.0ZM686.5,180.5L690.4,178.0L694.8,181.7L693.5,183.7L689.7,185.6ZM618.5,229.0L622.0,226.8L626.0,228.0L627.4,233.0L626.0,237.5L621.0,237.8L618.5,234.0Z" fill="#e6b3ae" stroke="#696c72" stroke-width="0.6" stroke-linejoin="round"/><path d="M713.3,304.0L713.3,329.8L707.0,328.6L696.0,331.3L689.5,329.3L693.3,313.7L700.4,308.5L708.1,305.3ZM630.6,369.4L633.2,368.8L635.8,373.9L633.9,375.8L631.3,373.3ZM666.8,212.4L671.9,211.1L678.2,209.2L676.3,212.4L670.6,213.9ZM657.8,215.9L662.3,214.7L662.9,216.8L659.1,217.7Z" fill="#e95a46" stroke="#696c72" stroke-width="0.6" stroke-linejoin="round"/><path d="M574.6,346.8L577.8,344.1L579.6,345.9L577.8,350.5L575.5,350.9ZM581.4,344.1L586.0,344.6L586.9,352.3L583.2,354.1L581.4,353.2ZM586.9,353.2L590.5,354.6L596.0,351.4L596.9,354.6L592.3,357.3L588.7,356.9Z" fill="#ffffff" stroke="#696c72" stroke-width="0.6" stroke-linejoin="round"/><path d="M672.5,186.0L676.0,181.0L680.0,178.5L684.5,179.0L682.5,183.5L678.0,186.5L674.0,188.0Z" fill="#cf6652" stroke="#696c72" stroke-width="0.6" stroke-linejoin="round"/><path d="M626.4,226.0L629.0,225.5L630.0,232.0L632.5,236.5L629.5,238.5L628.0,242.5L626.2,241.5L627.5,236.5L626.2,232.0ZM677.6,223.7L681.9,224.5L684.8,236.0L682.0,240.0L679.4,235.7Z" fill="#efcc35" stroke="#696c72" stroke-width="0.6" stroke-linejoin="round"/><text x="403" y="118.6" font-size="12" textLength="47" lengthAdjust="spacingAndGlyphs" fill="#808086" stroke="#fbf9f5" stroke-width="1.3" stroke-opacity="0.8" paint-order="stroke" stroke-linejoin="round">Honduras</text><text x="431" y="156.6" font-size="12" textLength="48" lengthAdjust="spacingAndGlyphs" fill="#808086" stroke="#fbf9f5" stroke-width="1.3" stroke-opacity="0.8" paint-order="stroke" stroke-linejoin="round">Nicaragua</text><text x="455" y="203" font-size="12" textLength="30" lengthAdjust="spacingAndGlyphs" fill="#808086" stroke="#fbf9f5" stroke-width="1.3" stroke-opacity="0.8" paint-order="stroke" stroke-linejoin="round">Costa</text><text x="459.2" y="218.6" font-size="12" textLength="21" lengthAdjust="spacingAndGlyphs" fill="#808086" stroke="#fbf9f5" stroke-width="1.3" stroke-opacity="0.8" paint-order="stroke" stroke-linejoin="round">Rica</text><text x="527" y="237.8" font-size="12" textLength="38" lengthAdjust="spacingAndGlyphs" fill="#808086" stroke="#fbf9f5" stroke-width="1.3" stroke-opacity="0.8" paint-order="stroke" stroke-linejoin="round">Panamá</text><text x="557.3" y="423.8" font-size="12" textLength="42" lengthAdjust="spacingAndGlyphs" fill="#808086" stroke="#fbf9f5" stroke-width="1.3" stroke-opacity="0.8" paint-order="stroke" stroke-linejoin="round">Ecuador</text><text x="779.1" y="263.6" font-size="12" textLength="51.5" lengthAdjust="spacingAndGlyphs" fill="#808086" stroke="#fbf9f5" stroke-width="1.3" stroke-opacity="0.8" paint-order="stroke" stroke-linejoin="round">Venezuela</text><text x="918.9" y="307.6" font-size="12" textLength="41" lengthAdjust="spacingAndGlyphs" fill="#808086" stroke="#fbf9f5" stroke-width="1.3" stroke-opacity="0.8" paint-order="stroke" stroke-linejoin="round">Guyana</text><rect x="430" y="532.4" width="497" height="12.6" fill="#ffffff" fill-opacity="0.96"/><text x="434.5" y="541.6" font-size="10.1" fill="#4a4a4a" textLength="405" lengthAdjust="spacingAndGlyphs">Grupo Ingeolan C.A., PNNC, Esri, TomTom, Garmin, FAO, NOAA, USGS | IGAC | Instituto G…</text><text x="852.6" y="541.6" font-size="10.1" fill="#323232" textLength="71" lengthAdjust="spacingAndGlyphs">Powered by Esri</text><defs><filter id="sh" x="-30%" y="-10%" width="160%" height="130%"><feGaussianBlur in="SourceAlpha" stdDeviation="1.2"/><feOffset dx="0" dy="1"/><feComponentTransfer><feFuncA type="linear" slope="0.3"/></feComponentTransfer><feMerge><feMergeNode/><feMergeNode in="SourceGraphic"/></feMerge></filter></defs><rect x="889" y="98" width="26" height="104" rx="2.5" fill="#fff" filter="url(#sh)"/><path d="M891.5,98 h21 a2.5,2.5 0 0 1 2.5,2.5 V124 H889 V100.5 a2.5,2.5 0 0 1 2.5,-2.5z" fill="#efefef"/><path d="M898.6,110 L901.9,106.7 L905.3,110 M898.6,115.1 L901.9,111.7 L905.3,115.1" fill="none" stroke="#2b2b2b" stroke-width="1.25" stroke-linecap="round" stroke-linejoin="round"/><line x1="900.2" y1="132.6" x2="907.5" y2="132.6" stroke="#4a4a4a" stroke-width="0.9"/><line x1="900.2" y1="135.9" x2="907.5" y2="135.9" stroke="#4a4a4a" stroke-width="0.9"/><line x1="900.2" y1="139.2" x2="907.5" y2="139.2" stroke="#4a4a4a" stroke-width="0.9"/><line x1="900.2" y1="142.4" x2="907.5" y2="142.4" stroke="#4a4a4a" stroke-width="0.9"/><circle cx="897.2" cy="132.6" r="0.9" fill="none" stroke="#4a4a4a" stroke-width="0.6"/><circle cx="897.2" cy="135.9" r="1" fill="#4a4a4a"/><rect x="896.3" y="138.3" width="1.8" height="1.8" fill="#4a4a4a"/><path d="M896.2,143.3 L897.2,141.5 L898.2,143.3z" fill="#4a4a4a"/><path d="M902,157.2 L907.8,160.7 L902,164 L896.4,160.7z M896.4,163.5 L902,166.7 L907.8,163.5 M896.4,165.9 L902,169.3 L907.8,165.9" fill="none" stroke="#4a4a4a" stroke-width="0.85" stroke-linejoin="round"/><path d="M901,185.8 L898,188.9 L901,192.2 M906.2,185.8 L903.3,188.9 L906.2,192.2" fill="none" stroke="#4a4a4a" stroke-width="1" stroke-linecap="round" stroke-linejoin="round"/><rect x="889" y="468" width="26" height="52" fill="#fff" filter="url(#sh)"/><line x1="889" y1="494" x2="915" y2="494" stroke="#e4e4e4" stroke-width="1"/><path d="M898.6,481.4 H905.9 M902.25,477.8 V485.1 M897.9,507.8 H906" fill="none" stroke="#6a6a6a" stroke-width="1"/></svg></div>
</body></html>
